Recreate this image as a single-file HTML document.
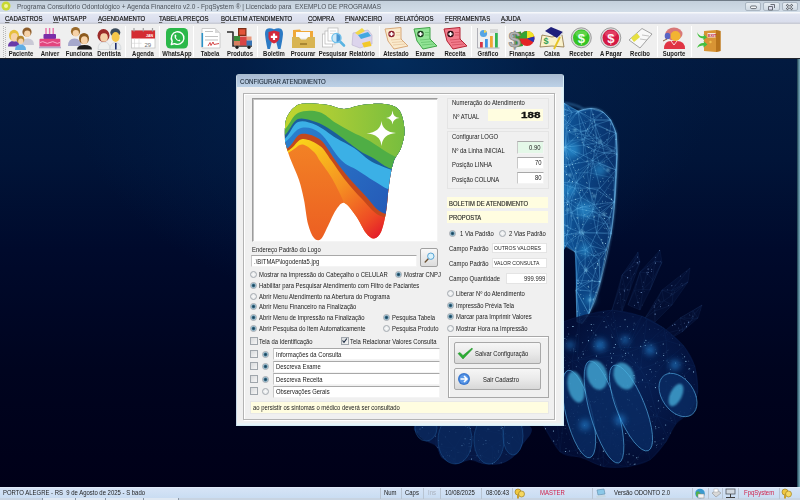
<!DOCTYPE html>
<html><head><meta charset="utf-8">
<style>
*{box-sizing:border-box;margin:0;padding:0}
html,body{width:800px;height:500px;overflow:hidden}
body{position:relative;font-family:"Liberation Sans",sans-serif;background:radial-gradient(ellipse 330px 250px at 390px 60px,rgba(3,44,92,1) 0%,rgba(2,32,74,.65) 45%,rgba(2,20,56,0) 100%),linear-gradient(180deg,#021a40 59px,#011438 160px,#000a2c 250px,#00041f 370px,#000018 490px)}
.a{position:absolute}
.t{position:absolute;white-space:pre;transform-origin:0 0;line-height:1}
/* title */
#title{left:0;top:0;width:800px;height:12px;background:linear-gradient(#c4d0dc,#d2dde8);border-top:1px solid #6f7a86}
#menu{left:0;top:12px;width:800px;height:12px;background:linear-gradient(#f6f8fb 0,#f6f8fb 1px,#e2e6f2 2px,#d9ddec 10px,#c9ccd6 11px)}
#tool{left:0;top:24px;width:800px;height:35px;background:#efefef;border-bottom:1px solid #20242c}
.mn{font-size:7.6px;color:#141414;transform:scaleX(.795);top:14.6px;-webkit-text-stroke:.2px #141414}
.mn u{text-decoration:underline;text-underline-offset:1px;text-decoration-thickness:.5px;text-decoration-color:#666}
.lb{font-size:6.6px;font-weight:bold;color:#1a1a1a;top:50.8px;transform:scaleX(.9)}
.sep{position:absolute;top:26px;width:1px;height:31px;background:#c8c8c8;border-right:1px solid #fff}
/* dialog */
#dlg{left:236px;top:74px;width:328px;height:352px;background:#f0f0f0;border:1px solid #a8bccc;border-left-color:#c8d8e6;border-right-color:#d4ecf6;border-bottom-color:#d4ecf6;border-radius:3px 3px 0 0;box-shadow:inset -2px -2px 0 #e8f4f8}
#dlgt{background:linear-gradient(#aabcd3,#bcd1e6)}
.d{font-size:7px;color:#1a1a1a;transform:scaleX(.84)}
.fld{position:absolute;background:#fff;border-top:1px solid #a8a8a8;border-left:1px solid #c8c8c8;border-bottom:1px solid #f4f4f4;border-right:1px solid #f4f4f4}
.yel{background:#fffde0}
.rad{position:absolute;width:7px;height:7px;margin:.5px;border-radius:50%;border:1px solid #a4aab0;background:radial-gradient(#fafafa,#dfe3e6)}
.rad.on{background:radial-gradient(circle,#1a4058 0,#2c5e78 1.2px,#a8cadc 2.3px,#e4eef4 3.5px)}
.chk{position:absolute;width:8px;height:8px;margin:-.5px;border:1px solid #a0a6ac;background:linear-gradient(135deg,#d8dadc,#f6f6f6)}
/* status */
#stat{left:0;top:487px;width:800px;height:13px;background:linear-gradient(#eef4fc 0,#d6e4f6 1px,#c8dcf2 12px)}
.st{font-size:7px;color:#1c1c1c;top:489.4px;transform:scaleX(.85)}
.ss{position:absolute;top:488px;width:1px;height:11px;background:#b8c4d2}
</style></head><body>

<!-- background glow -->
<svg class="a" style="left:0;top:59px" width="800" height="428" viewBox="0 59 800 428">
<defs><linearGradient id="tg" gradientUnits="userSpaceOnUse" x1="560" y1="0" x2="620" y2="0"><stop offset="0" stop-color="#1262aa"/><stop offset=".45" stop-color="#0c4688"/><stop offset="1" stop-color="#09306a"/></linearGradient><radialGradient id="hg" gradientUnits="userSpaceOnUse" cx="630" cy="380" r="80"><stop offset="0" stop-color="#082660"/><stop offset=".7" stop-color="#051848"/><stop offset="1" stop-color="#030f38"/></radialGradient><filter id="gl" x="-50%" y="-50%" width="200%" height="200%"><feGaussianBlur stdDeviation="3"/></filter><filter id="gl2" x="-50%" y="-50%" width="200%" height="200%"><feGaussianBlur stdDeviation="1.2"/></filter></defs>
<path d="M470 100 L520 96 L564 103 L578 111 L591 108.4 L603 112 L611 120 L616 133 L617 154 L616 170 L614.4 202 L611.2 234 L606.4 250 L600 282 L589 314 L582 323.5 L577 322 L576 290 L575 252 L566 246 L540 300 L480 330 L430 250 L440 150Z" fill="url(#tg)" opacity=".9"/><g filter="url(#gl)" fill="#38b0f0" opacity=".5"><circle cx="572" cy="150" r="8"/><circle cx="585" cy="210" r="9"/><circle cx="600" cy="170" r="6"/><circle cx="590" cy="300" r="5"/><circle cx="585" cy="250" r="6"/><circle cx="570" cy="190" r="6"/></g><path d="M565.0 147.2L560.6 164.3M538.9 120.4L562.1 116.6M585.2 249.9L590.4 245.8M538.9 120.4L526.5 133.4M570.7 228.7L555.1 218.4M499.4 158.1L499.7 158.4M534.9 251.3L521.1 250.5M585.2 249.9L585.1 270.7M480.6 185.4L485.1 171.9M485.8 269.6L469.8 264.5M503.2 216.9L511.5 227.6M461.6 215.9L461.4 240.2M507.7 294.3L511.2 311.9M430.0 250.0L440.0 150.0M486.5 123.8L470.9 132.4M505.8 158.0L499.4 158.1M555.1 218.4L568.0 201.6M555.1 218.4L542.2 209.5M434.0 251.2L430.0 250.0M478.9 229.7L501.7 215.3M520.1 176.2L504.4 175.9M562.0 108.1L562.1 116.6M482.4 303.5L480.0 330.0M592.9 160.4L568.9 164.8M439.9 233.7L430.0 250.0M474.3 252.6L468.9 263.1M592.2 280.3L576.0 290.0M535.3 270.1L549.0 267.7M578.0 111.0L591.0 108.4M555.2 239.9L549.4 252.5M440.1 182.4L439.1 189.4M505.8 158.0L504.4 175.9M493.5 148.7L499.4 158.1M489.4 240.8L496.0 248.6M469.7 223.0L468.4 221.1M527.7 115.7L520.0 96.0M491.1 127.8L499.3 141.0M453.6 193.1L465.6 213.4M574.8 188.1L581.6 197.6M485.1 171.9L485.3 176.5M465.1 130.7L470.0 100.0M599.0 260.0L600.0 282.0M568.0 201.6L542.2 209.5M519.6 133.4L507.8 153.6M485.8 169.5L457.5 161.5M567.0 243.0L566.0 246.0M507.7 294.3L513.0 300.2M554.6 171.8L550.3 187.5M535.3 270.1L521.1 250.5M579.8 232.2L575.0 252.0M554.6 171.8L525.7 174.7M602.2 144.2L596.9 142.9M505.8 158.0L507.8 153.6M570.7 228.7L572.0 212.0M602.2 144.2L614.9 151.3M518.1 276.9L507.6 262.9M611.2 234.0L606.4 250.0M544.6 142.0L538.9 120.4M485.8 269.6L470.0 296.9M535.1 189.5L542.2 209.5M511.2 311.9L480.0 330.0M572.2 112.3L578.0 111.0M596.7 232.9L599.1 214.4M585.2 249.9L593.9 256.0M502.7 185.0L480.6 185.4M485.8 169.5L495.2 177.4M585.1 270.7L599.0 260.0M556.7 243.0L567.0 243.0M540.3 252.7L538.0 259.2M585.1 270.7L592.2 280.3M468.7 243.4L475.3 247.0M565.0 147.2L583.4 145.1M496.0 248.6L505.0 239.6M501.7 215.3L494.8 234.4M493.5 148.7L507.8 153.6M485.8 169.5L499.7 158.4M492.2 142.1L479.8 142.4M549.4 252.5L566.0 246.0M492.2 142.1L491.1 127.8M470.0 296.9L468.4 269.5M495.2 177.4L499.7 158.4M535.1 189.5L550.3 187.5M616.0 170.0L614.4 202.0M491.1 127.8L486.5 123.8M465.1 130.7L486.5 123.8M579.8 232.2L590.4 245.8M556.7 243.0L566.6 234.6M614.4 202.0L611.2 234.0M567.0 243.0L575.0 252.0M534.9 251.3L532.3 227.6M583.4 145.1L584.7 137.9M530.5 302.2L540.0 300.0M577.0 208.4L592.3 211.4M581.6 197.6L568.0 201.6M483.1 247.8L492.3 266.1M594.2 204.6L600.3 212.7M469.7 223.0L461.4 240.2M562.0 108.1L564.0 103.0M594.2 204.6L592.3 211.4M503.2 216.9L494.8 234.4M519.7 130.2L526.5 133.4M535.1 189.5L554.6 171.8M461.4 240.2L455.2 242.2M465.1 130.7L453.0 152.8M463.7 270.8L456.1 282.0M597.2 189.9L594.2 204.6M549.0 267.7L566.0 246.0M595.2 124.8L586.0 130.6M505.0 239.6L494.8 234.4M521.1 250.5L538.0 259.2M505.7 251.7L509.5 244.3M469.8 264.5L468.9 263.1M566.6 234.6L555.0 220.1M518.1 276.9L522.6 279.4M588.9 188.2L597.2 189.9M511.5 227.6L494.8 234.4M485.8 169.5L499.4 158.1M561.6 168.1L554.6 171.8M544.6 142.0L533.7 142.4M604.3 153.1L617.0 154.0M478.9 229.7L469.7 223.0M433.7 219.5L439.1 189.4M489.4 240.8L494.8 234.4M485.8 269.6L482.4 303.5M596.9 142.9L583.4 145.1M535.1 189.5L522.2 201.5M583.4 145.1L580.8 131.9M496.7 264.2L492.3 266.1M440.1 182.4L453.6 193.1M549.4 252.5L543.1 267.1M518.1 276.9L507.7 294.3M493.5 148.7L479.8 142.4M485.8 169.5L485.1 171.9M600.3 212.7L592.3 211.4M589.1 135.5L595.2 124.8M533.7 142.4L532.0 149.7M535.1 189.5L520.1 176.2M495.2 177.4L485.1 171.9M507.8 153.6L499.3 141.0M510.5 233.3L505.0 239.6M567.4 122.6L562.1 116.6M468.7 243.4L470.0 223.5M468.4 269.5L462.5 275.7M519.9 221.5L522.2 201.5M522.2 294.8L513.0 300.2M557.1 182.2L561.6 168.1M555.1 218.4L555.0 220.1M447.6 197.4L465.6 213.4M557.1 182.2L568.0 201.6M583.4 145.1L594.7 150.1M565.0 147.2L553.3 133.8M474.3 252.6L471.6 248.3M609.4 217.7L611.2 234.0M500.0 117.3L519.7 130.2M580.1 320.3L576.0 290.0M579.8 232.2L596.7 232.9M511.5 227.6L522.1 230.3M535.1 189.5L512.7 187.2M555.2 239.9L556.7 243.0M453.7 165.4L480.6 185.4M457.5 161.5L486.8 156.5M480.9 233.5L475.3 247.0M435.1 221.6L430.0 250.0M557.1 182.2L550.3 187.5M491.7 204.0L507.9 205.9M505.0 239.6L509.5 244.3M597.2 189.9L614.4 202.0M567.4 122.6L578.0 111.0M549.4 252.5L556.7 243.0M503.2 216.9L501.7 215.3M518.1 276.9L535.3 270.1M580.8 131.9L578.0 111.0M577.0 208.4L594.2 204.6M519.9 117.8L520.0 96.0M594.3 119.9L591.0 108.4M603.0 112.0L611.0 120.0M433.7 219.5L435.1 221.6M457.5 161.5L453.0 152.8M583.4 155.4L583.4 145.1M542.2 209.5L544.0 227.3M439.1 189.4L440.0 150.0M557.1 182.2L554.6 171.8M440.1 182.4L440.0 150.0M505.7 251.7L496.7 264.2M561.6 168.1L576.2 182.8M588.9 188.2L592.9 160.4M512.7 187.2L522.2 201.5M510.1 273.5L507.6 262.9M455.2 242.2L468.9 263.1M562.1 116.6L572.2 112.3M606.4 250.0L600.0 282.0M522.6 125.3L538.9 120.4M567.4 122.6L565.0 147.2M580.1 320.3L577.0 322.0M591.0 108.4L603.0 112.0M468.7 243.4L455.2 242.2M480.9 233.5L494.8 234.4M485.8 269.6L499.5 275.1M461.4 240.2L444.0 235.4M496.7 264.2L507.6 262.9M544.6 142.0L532.0 149.7M480.6 185.4L491.7 204.0M579.8 232.2L592.3 211.4M505.7 251.7L521.1 250.5M468.7 243.4L471.6 248.3M446.0 151.4L445.9 141.3M556.7 243.0L566.0 246.0M605.3 222.0L599.1 214.4M577.0 208.4L581.6 197.6M560.6 164.3L561.6 168.1M492.2 142.1L493.5 148.7M510.5 233.3L511.5 227.6M602.2 144.2L594.7 150.1M453.7 165.4L453.6 193.1M555.2 239.9L544.0 227.3M447.6 197.4L461.6 215.9M594.3 119.9L578.0 111.0M507.9 205.9L522.2 201.5M557.1 182.2L574.8 188.1M499.5 275.1L492.3 266.1M457.5 161.5L485.1 171.9M577.2 280.8L575.0 252.0M565.0 147.2L544.6 142.0M465.6 213.4L468.4 221.1M439.9 233.7L434.0 251.2M479.8 142.4L491.1 127.8M478.9 229.7L480.9 233.5M561.6 168.1L568.9 164.8M565.0 147.2L583.4 155.4M468.4 269.5L469.8 264.5M560.2 164.5L560.6 164.3M518.1 276.9L510.1 273.5M480.6 185.4L485.3 176.5M534.9 251.3L538.0 259.2M579.8 232.2L566.6 234.6M589.1 135.5L596.9 142.9M501.7 215.3L491.7 204.0M549.4 252.5L549.0 267.7M519.9 221.5L542.2 209.5M570.7 228.7L555.0 220.1M499.5 275.1L496.7 264.2M447.6 197.4L433.7 219.5M580.1 320.3L582.0 323.5M496.0 248.6L494.8 234.4M519.9 221.5L507.9 205.9M596.7 232.9L590.4 245.8M535.1 189.5L525.7 174.7M525.7 174.7L532.0 149.7M492.2 142.1L499.3 141.0M439.9 233.7L435.1 221.6M485.8 269.6L468.4 269.5M574.8 188.1L568.0 201.6M468.7 243.4L461.4 240.2M470.0 223.5L461.4 240.2M599.0 260.0L606.4 250.0M461.4 240.2L468.4 221.1M470.0 296.9L456.1 282.0M593.9 256.0L590.4 245.8M617.0 154.0L614.4 202.0M600.1 188.0L597.2 189.9M522.6 279.4L540.0 300.0M512.7 187.2L504.4 175.9M507.7 294.3L482.4 303.5M557.1 182.2L576.2 182.8M592.9 160.4L616.0 170.0M589.0 314.0L576.0 290.0M533.7 142.4L526.5 133.4M522.6 125.3L519.9 117.8M544.0 227.3L555.0 220.1M483.1 247.8L480.9 233.5M471.6 248.3L475.3 247.0M565.0 147.2L568.9 164.8M588.9 188.2L594.2 204.6M470.0 296.9L462.5 275.7M519.6 133.4L533.7 142.4M577.2 280.8L576.0 290.0M500.0 117.3L491.1 127.8M572.2 112.3L564.0 103.0M465.1 130.7L470.9 132.4M478.9 229.7L491.7 204.0M562.0 108.1L538.9 120.4M455.2 242.2L434.0 251.2M542.2 209.5L522.2 201.5M575.0 252.0L566.0 246.0M463.7 270.8L468.9 263.1M510.1 273.5L507.7 294.3M596.7 232.9L606.4 250.0M470.0 100.0L520.0 96.0M519.6 133.4L499.3 141.0M580.8 131.9L584.7 137.9M584.7 137.9L586.0 130.6M538.9 120.4L520.0 96.0M535.3 270.1L538.0 259.2M585.1 270.7L575.0 252.0M593.9 256.0L606.4 250.0M471.6 248.3L468.9 263.1M594.3 119.9L595.2 124.8M463.7 270.8L468.4 269.5M532.3 227.6L522.1 230.3M521.1 250.5L522.1 230.3M560.2 164.5L532.0 149.7M469.7 223.0L491.7 204.0M600.3 212.7L614.4 202.0M567.4 122.6L553.3 133.8M446.0 151.4L453.0 152.8M525.7 174.7L507.8 153.6M616.0 133.0L617.0 154.0M483.1 247.8L485.8 269.6M470.0 223.5L469.7 223.0M592.9 160.4L594.7 150.1M530.5 302.2L511.2 311.9M513.0 300.2L511.2 311.9M512.7 187.2L507.9 205.9M510.1 273.5L499.5 275.1M605.3 222.0L609.4 217.7M461.6 215.9L435.1 221.6M588.9 188.2L581.6 197.6M521.1 250.5L509.5 244.3M604.3 153.1L614.9 151.3M562.0 108.1L520.0 96.0M600.1 188.0L614.4 202.0M493.5 148.7L499.3 141.0M499.5 275.1L507.6 262.9M495.2 177.4L504.4 175.9M468.7 243.4L478.9 229.7M470.0 223.5L478.9 229.7M510.5 233.3L494.8 234.4M465.6 213.4L491.7 204.0M544.6 142.0L553.3 133.8M453.6 193.1L439.1 189.4M540.3 252.7L549.4 252.5M596.9 142.9L595.2 124.8M535.3 270.1L522.6 279.4M474.3 252.6L469.8 264.5M519.9 221.5L532.3 227.6M585.2 249.9L575.0 252.0M570.7 228.7L566.6 234.6M592.2 280.3L589.0 314.0M581.1 283.7L576.0 290.0M505.8 158.0L499.7 158.4M538.0 259.2L543.1 267.1M599.0 260.0L592.2 280.3M530.5 302.2L513.0 300.2M522.6 125.3L527.7 115.7M579.8 232.2L577.0 208.4M540.3 252.7L534.9 251.3M507.7 294.3L499.5 275.1M540.3 252.7L544.0 227.3M562.0 108.1L572.2 112.3M470.0 296.9L480.0 330.0M560.2 164.5L561.6 168.1M566.6 234.6L567.0 243.0M589.1 135.5L584.7 137.9M519.9 221.5L511.5 227.6M493.5 148.7L486.8 156.5M600.1 188.0L616.0 170.0M600.3 212.7L599.1 214.4M453.6 193.1L480.6 185.4M535.3 270.1L540.0 300.0M611.0 120.0L616.0 133.0M510.5 233.3L522.1 230.3M463.7 270.8L434.0 251.2M453.7 165.4L453.0 152.8M462.5 275.7L456.1 282.0M540.3 252.7L555.2 239.9M519.6 133.4L532.0 149.7M595.2 124.8L616.0 133.0M480.0 330.0L430.0 250.0M593.9 256.0L599.0 260.0M574.8 188.1L576.2 182.8M596.9 142.9L584.7 137.9M609.4 217.7L614.4 202.0M519.7 130.2L522.6 125.3M496.0 248.6L492.3 266.1M509.5 244.3L522.1 230.3M474.3 252.6L475.3 247.0M592.2 280.3L600.0 282.0M518.1 276.9L521.1 250.5M600.0 282.0L589.0 314.0M495.2 177.4L485.3 176.5M577.0 208.4L572.0 212.0M581.6 197.6L594.2 204.6M589.1 135.5L586.0 130.6M510.5 233.3L509.5 244.3M434.0 251.2L444.0 235.4M555.2 239.9L555.0 220.1M560.6 164.3L568.9 164.8M596.7 232.9L592.3 211.4M446.0 151.4L440.0 150.0M503.2 216.9L519.9 221.5M583.4 155.4L568.9 164.8M562.1 116.6L553.3 133.8M499.7 158.4L504.4 175.9M439.9 233.7L444.0 235.4M483.1 247.8L474.3 252.6M485.8 269.6L492.3 266.1M579.8 232.2L567.0 243.0M532.3 227.6L544.0 227.3M538.9 120.4L527.7 115.7M564.0 103.0L578.0 111.0M560.2 164.5L554.6 171.8M586.0 130.6L578.0 111.0M507.8 153.6L499.4 158.1M522.2 294.8L530.5 302.2M463.7 270.8L455.2 242.2M522.2 294.8L522.6 279.4M502.7 185.0L495.2 177.4M614.9 151.3L617.0 154.0M500.0 117.3L520.0 96.0M468.7 243.4L480.9 233.5M445.9 141.3L440.0 150.0M595.2 124.8L611.0 120.0M602.2 144.2L604.3 153.1M505.7 251.7L505.0 239.6M532.3 227.6L542.2 209.5M501.7 215.3L507.9 205.9M483.1 247.8L496.0 248.6M519.7 130.2L519.9 117.8M534.9 251.3L522.1 230.3M579.8 232.2L570.7 228.7M594.2 204.6L614.4 202.0M522.2 294.8L507.7 294.3M489.4 240.8L480.9 233.5M519.7 130.2L499.3 141.0M447.6 197.4L439.1 189.4M445.9 141.3L470.0 100.0M549.0 267.7L540.0 300.0M505.7 251.7L507.6 262.9M590.4 245.8L606.4 250.0M609.4 217.7L599.1 214.4M596.9 142.9L594.7 150.1M455.2 242.2L444.0 235.4M593.9 256.0L585.1 270.7M588.9 188.2L574.8 188.1M495.2 177.4L480.6 185.4M522.2 294.8L540.0 300.0M577.0 208.4L568.0 201.6M581.1 283.7L592.2 280.3M485.8 169.5L486.8 156.5M600.3 212.7L609.4 217.7M503.2 216.9L507.9 205.9M577.2 280.8L581.1 283.7M461.6 215.9L444.0 235.4M500.0 117.3L519.9 117.8M486.8 156.5L499.4 158.1M577.2 280.8L585.1 270.7M520.1 176.2L525.7 174.7M482.4 303.5L511.2 311.9M602.2 144.2L616.0 133.0M604.3 153.1L616.0 170.0M502.7 185.0L512.7 187.2M500.0 117.3L499.3 141.0M496.7 264.2L496.0 248.6M479.8 142.4L486.8 156.5M491.7 204.0L468.4 221.1M433.7 219.5L440.0 150.0M453.7 165.4L440.0 150.0M500.0 117.3L470.0 100.0M614.9 151.3L616.0 133.0M479.8 142.4L486.5 123.8M518.1 276.9L522.2 294.8M456.1 282.0L430.0 250.0M588.9 188.2L600.1 188.0M520.0 96.0L564.0 103.0M521.1 250.5L507.6 262.9M519.9 117.8L527.7 115.7M505.8 158.0L525.7 174.7M580.1 320.3L589.0 314.0M433.7 219.5L461.6 215.9M520.1 176.2L505.8 158.0M535.3 270.1L543.1 267.1M483.1 247.8L475.3 247.0M532.0 149.7L507.8 153.6M594.3 119.9L611.0 120.0M579.8 232.2L585.2 249.9M555.2 239.9L566.6 234.6M588.9 188.2L576.2 182.8M567.4 122.6L572.2 112.3M617.0 154.0L616.0 170.0M560.2 164.5L565.0 147.2M479.8 142.4L453.0 152.8M478.9 229.7L494.8 234.4M560.2 164.5L544.6 142.0M468.4 269.5L468.9 263.1M440.1 182.4L453.7 165.4M470.0 100.0L440.0 150.0M479.8 142.4L470.9 132.4M580.8 131.9L586.0 130.6M486.5 123.8L470.0 100.0M502.7 185.0L504.4 175.9M604.3 153.1L594.7 150.1M453.7 165.4L457.5 161.5M605.3 222.0L611.2 234.0M522.6 125.3L526.5 133.4M461.6 215.9L468.4 221.1M457.5 161.5L479.8 142.4M463.7 270.8L462.5 275.7M602.2 144.2L595.2 124.8M550.3 187.5L568.0 201.6M519.9 221.5L522.1 230.3M582.0 323.5L577.0 322.0M470.0 296.9L482.4 303.5M592.9 160.4L604.3 153.1M550.3 187.5L542.2 209.5M555.1 218.4L572.0 212.0M445.9 141.3L453.0 152.8M567.4 122.6L580.8 131.9M519.6 133.4L526.5 133.4M453.0 152.8L470.9 132.4M583.4 155.4L594.7 150.1M500.0 117.3L486.5 123.8M596.7 232.9L611.2 234.0M577.0 322.0L576.0 290.0M455.2 242.2L471.6 248.3M483.1 247.8L489.4 240.8M433.7 219.5L430.0 250.0M505.7 251.7L496.0 248.6M549.4 252.5L538.0 259.2M579.8 232.2L572.0 212.0M446.0 151.4L453.7 165.4M456.1 282.0L480.0 330.0M581.1 283.7L585.1 270.7M461.6 215.9L465.6 213.4M554.6 171.8L532.0 149.7M499.5 275.1L482.4 303.5M434.0 251.2L456.1 282.0M594.3 119.9L603.0 112.0M435.1 221.6L444.0 235.4M445.9 141.3L465.1 130.7M592.9 160.4L600.1 188.0M485.8 269.6L474.3 252.6M480.6 185.4L465.6 213.4M538.9 120.4L553.3 133.8M502.7 185.0L491.7 204.0M533.7 142.4L538.9 120.4M568.0 201.6L572.0 212.0M592.9 160.4L576.2 182.8M565.0 147.2L580.8 131.9M534.9 251.3L544.0 227.3M502.7 185.0L507.9 205.9M592.3 211.4L599.1 214.4M589.0 314.0L582.0 323.5M520.1 176.2L512.7 187.2M457.5 161.5L480.6 185.4M594.3 119.9L586.0 130.6M519.6 133.4L519.7 130.2M596.7 232.9L605.3 222.0M447.6 197.4L453.6 193.1M555.1 218.4L544.0 227.3M592.9 160.4L583.4 155.4M549.0 267.7L543.1 267.1M568.9 164.8L576.2 182.8" stroke="#7ad0ff" stroke-width=".5" opacity="0.5" fill="none"/><g fill="#b8f0ff"><circle cx="468.7" cy="106.7" r="0.25" opacity="0.41"/><circle cx="590.5" cy="175.2" r="0.33" opacity="0.55"/><circle cx="479.4" cy="269.4" r="0.43" opacity="0.72"/><circle cx="501.8" cy="214.5" r="0.32" opacity="0.54"/><circle cx="537.2" cy="234.9" r="0.39" opacity="0.65"/><circle cx="439.6" cy="184.9" r="0.19" opacity="0.32"/><circle cx="500.1" cy="283.9" r="0.42" opacity="0.71"/><circle cx="536.1" cy="116.2" r="0.47" opacity="0.79"/><circle cx="544.5" cy="166.8" r="0.46" opacity="0.77"/><circle cx="454.7" cy="213.4" r="0.44" opacity="0.73"/><circle cx="540.2" cy="104.6" r="0.28" opacity="0.46"/><circle cx="562.1" cy="177.5" r="0.25" opacity="0.42"/><circle cx="561.0" cy="161.7" r="0.41" opacity="0.69"/><circle cx="452.3" cy="212.7" r="0.27" opacity="0.46"/><circle cx="593.8" cy="298.6" r="0.45" opacity="0.76"/><circle cx="500.2" cy="282.5" r="0.53" opacity="0.89"/><circle cx="499.1" cy="218.9" r="0.24" opacity="0.40"/><circle cx="450.3" cy="264.5" r="0.20" opacity="0.34"/><circle cx="542.5" cy="122.6" r="0.42" opacity="0.70"/><circle cx="502.9" cy="187.1" r="0.32" opacity="0.54"/><circle cx="451.6" cy="172.0" r="0.20" opacity="0.33"/><circle cx="473.9" cy="267.7" r="0.52" opacity="0.86"/><circle cx="505.2" cy="300.2" r="0.36" opacity="0.60"/><circle cx="495.4" cy="279.1" r="0.49" opacity="0.82"/><circle cx="457.3" cy="217.0" r="0.23" opacity="0.39"/><circle cx="463.7" cy="220.2" r="0.27" opacity="0.45"/><circle cx="580.5" cy="181.5" r="0.25" opacity="0.41"/><circle cx="547.7" cy="157.3" r="0.20" opacity="0.34"/><circle cx="454.6" cy="208.5" r="0.18" opacity="0.30"/><circle cx="577.6" cy="113.6" r="0.19" opacity="0.32"/><circle cx="610.6" cy="216.9" r="0.51" opacity="0.86"/><circle cx="597.8" cy="267.8" r="0.19" opacity="0.32"/><circle cx="550.4" cy="111.2" r="0.18" opacity="0.31"/><circle cx="587.9" cy="167.8" r="0.45" opacity="0.75"/><circle cx="529.1" cy="279.5" r="0.41" opacity="0.68"/><circle cx="611.9" cy="207.1" r="0.49" opacity="0.81"/><circle cx="583.7" cy="233.3" r="0.36" opacity="0.60"/><circle cx="510.4" cy="247.2" r="0.25" opacity="0.42"/><circle cx="512.1" cy="247.4" r="0.29" opacity="0.48"/><circle cx="470.5" cy="120.9" r="0.47" opacity="0.78"/><circle cx="593.8" cy="291.2" r="0.43" opacity="0.72"/><circle cx="543.1" cy="109.6" r="0.50" opacity="0.83"/><circle cx="518.6" cy="256.7" r="0.22" opacity="0.37"/><circle cx="569.5" cy="130.4" r="0.53" opacity="0.88"/><circle cx="562.9" cy="220.2" r="0.42" opacity="0.69"/><circle cx="473.0" cy="212.8" r="0.21" opacity="0.35"/><circle cx="482.3" cy="162.8" r="0.24" opacity="0.40"/><circle cx="507.8" cy="110.8" r="0.19" opacity="0.32"/><circle cx="566.0" cy="196.1" r="0.25" opacity="0.42"/><circle cx="452.7" cy="193.5" r="0.42" opacity="0.69"/><circle cx="584.5" cy="204.2" r="0.49" opacity="0.81"/><circle cx="581.7" cy="294.8" r="0.30" opacity="0.50"/><circle cx="517.3" cy="133.5" r="0.39" opacity="0.65"/><circle cx="437.9" cy="205.9" r="0.24" opacity="0.40"/><circle cx="519.3" cy="138.4" r="0.18" opacity="0.30"/><circle cx="508.9" cy="196.2" r="0.37" opacity="0.62"/><circle cx="453.3" cy="212.6" r="0.29" opacity="0.48"/><circle cx="445.2" cy="192.0" r="0.42" opacity="0.70"/><circle cx="486.6" cy="262.9" r="0.46" opacity="0.77"/><circle cx="483.0" cy="234.6" r="0.36" opacity="0.59"/><circle cx="536.2" cy="113.3" r="0.28" opacity="0.47"/><circle cx="460.1" cy="270.6" r="0.43" opacity="0.71"/><circle cx="487.0" cy="301.0" r="0.23" opacity="0.38"/><circle cx="525.1" cy="127.9" r="0.40" opacity="0.66"/><circle cx="490.3" cy="119.8" r="0.23" opacity="0.39"/><circle cx="585.0" cy="308.1" r="0.25" opacity="0.41"/><circle cx="491.6" cy="108.0" r="0.23" opacity="0.39"/><circle cx="511.6" cy="144.1" r="0.25" opacity="0.41"/><circle cx="481.0" cy="301.4" r="0.19" opacity="0.32"/><circle cx="602.5" cy="201.1" r="0.45" opacity="0.74"/><circle cx="463.9" cy="155.7" r="0.36" opacity="0.60"/><circle cx="524.9" cy="173.5" r="0.29" opacity="0.48"/><circle cx="446.7" cy="213.5" r="0.48" opacity="0.80"/><circle cx="592.1" cy="193.0" r="0.53" opacity="0.89"/><circle cx="610.8" cy="170.8" r="0.22" opacity="0.37"/><circle cx="586.3" cy="316.1" r="0.41" opacity="0.69"/><circle cx="610.3" cy="207.7" r="0.37" opacity="0.61"/><circle cx="443.9" cy="182.6" r="0.51" opacity="0.85"/><circle cx="436.2" cy="212.0" r="0.40" opacity="0.66"/><circle cx="529.6" cy="301.7" r="0.43" opacity="0.71"/><circle cx="549.1" cy="237.0" r="0.36" opacity="0.60"/><circle cx="550.4" cy="145.6" r="0.33" opacity="0.55"/><circle cx="551.1" cy="236.3" r="0.27" opacity="0.45"/><circle cx="480.0" cy="128.9" r="0.42" opacity="0.70"/><circle cx="564.6" cy="126.9" r="0.28" opacity="0.46"/><circle cx="457.8" cy="239.2" r="0.29" opacity="0.48"/><circle cx="592.7" cy="158.3" r="0.41" opacity="0.69"/><circle cx="491.0" cy="269.3" r="0.30" opacity="0.51"/><circle cx="553.0" cy="123.5" r="0.41" opacity="0.69"/><circle cx="502.0" cy="317.4" r="0.21" opacity="0.34"/><circle cx="497.4" cy="275.6" r="0.32" opacity="0.54"/><circle cx="516.5" cy="174.2" r="0.22" opacity="0.36"/><circle cx="489.9" cy="301.1" r="0.46" opacity="0.76"/><circle cx="487.9" cy="252.4" r="0.47" opacity="0.78"/><circle cx="482.3" cy="278.2" r="0.41" opacity="0.68"/><circle cx="593.1" cy="114.3" r="0.52" opacity="0.86"/><circle cx="593.8" cy="151.8" r="0.44" opacity="0.73"/><circle cx="507.5" cy="269.3" r="0.47" opacity="0.78"/><circle cx="515.3" cy="155.3" r="0.41" opacity="0.69"/><circle cx="465.6" cy="241.8" r="0.45" opacity="0.76"/><circle cx="610.2" cy="189.5" r="0.28" opacity="0.47"/><circle cx="538.0" cy="248.4" r="0.51" opacity="0.85"/><circle cx="539.5" cy="198.6" r="0.29" opacity="0.48"/><circle cx="565.6" cy="245.2" r="0.21" opacity="0.34"/><circle cx="486.0" cy="135.1" r="0.36" opacity="0.60"/><circle cx="501.3" cy="133.2" r="0.37" opacity="0.62"/><circle cx="553.3" cy="175.8" r="0.48" opacity="0.80"/><circle cx="562.3" cy="227.8" r="0.45" opacity="0.75"/><circle cx="604.8" cy="215.6" r="0.47" opacity="0.79"/><circle cx="551.2" cy="216.3" r="0.36" opacity="0.60"/><circle cx="615.5" cy="176.9" r="0.33" opacity="0.55"/><circle cx="518.7" cy="245.7" r="0.20" opacity="0.34"/><circle cx="551.9" cy="105.0" r="0.32" opacity="0.53"/><circle cx="512.7" cy="228.4" r="0.39" opacity="0.64"/><circle cx="542.9" cy="101.7" r="0.30" opacity="0.50"/><circle cx="568.0" cy="193.6" r="0.48" opacity="0.80"/><circle cx="531.6" cy="229.2" r="0.42" opacity="0.71"/><circle cx="614.7" cy="131.1" r="0.35" opacity="0.58"/><circle cx="594.9" cy="206.9" r="0.27" opacity="0.45"/><circle cx="484.6" cy="194.7" r="0.29" opacity="0.48"/><circle cx="518.0" cy="192.7" r="0.21" opacity="0.35"/><circle cx="535.2" cy="118.1" r="0.51" opacity="0.85"/><circle cx="497.8" cy="185.3" r="0.27" opacity="0.45"/><circle cx="603.7" cy="257.9" r="0.29" opacity="0.48"/><circle cx="499.1" cy="194.9" r="0.32" opacity="0.53"/><circle cx="588.8" cy="147.3" r="0.53" opacity="0.89"/><circle cx="593.8" cy="265.1" r="0.22" opacity="0.36"/><circle cx="513.6" cy="273.2" r="0.38" opacity="0.63"/><circle cx="506.7" cy="147.6" r="0.31" opacity="0.51"/><circle cx="449.4" cy="180.5" r="0.19" opacity="0.31"/><circle cx="493.4" cy="166.4" r="0.35" opacity="0.58"/><circle cx="493.4" cy="303.6" r="0.25" opacity="0.41"/><circle cx="613.8" cy="174.3" r="0.21" opacity="0.35"/><circle cx="585.9" cy="133.1" r="0.45" opacity="0.75"/><circle cx="594.6" cy="146.9" r="0.29" opacity="0.49"/><circle cx="535.5" cy="299.4" r="0.49" opacity="0.81"/><circle cx="521.0" cy="228.6" r="0.47" opacity="0.78"/><circle cx="591.5" cy="150.7" r="0.41" opacity="0.68"/><circle cx="471.7" cy="120.5" r="0.35" opacity="0.59"/><circle cx="567.9" cy="230.8" r="0.51" opacity="0.84"/><circle cx="521.7" cy="201.1" r="0.23" opacity="0.38"/><circle cx="445.9" cy="237.2" r="0.36" opacity="0.59"/><circle cx="553.3" cy="238.9" r="0.31" opacity="0.52"/><circle cx="453.5" cy="256.5" r="0.20" opacity="0.33"/><circle cx="493.1" cy="102.4" r="0.29" opacity="0.48"/><circle cx="476.6" cy="240.9" r="0.43" opacity="0.71"/><circle cx="562.4" cy="192.1" r="0.45" opacity="0.75"/><circle cx="553.5" cy="221.0" r="0.46" opacity="0.77"/><circle cx="611.7" cy="208.5" r="0.53" opacity="0.88"/><circle cx="546.6" cy="186.5" r="0.35" opacity="0.59"/><circle cx="552.5" cy="169.8" r="0.51" opacity="0.85"/><circle cx="502.2" cy="242.2" r="0.49" opacity="0.82"/><circle cx="585.1" cy="253.6" r="0.44" opacity="0.73"/><circle cx="571.5" cy="233.4" r="0.34" opacity="0.56"/><circle cx="598.0" cy="133.5" r="0.23" opacity="0.38"/><circle cx="488.5" cy="150.9" r="0.53" opacity="0.88"/><circle cx="529.2" cy="303.0" r="0.38" opacity="0.63"/><circle cx="470.6" cy="300.7" r="0.50" opacity="0.83"/><circle cx="453.1" cy="275.4" r="0.38" opacity="0.64"/><circle cx="463.5" cy="174.9" r="0.44" opacity="0.74"/><circle cx="465.0" cy="238.1" r="0.37" opacity="0.62"/><circle cx="529.2" cy="138.6" r="0.48" opacity="0.80"/><circle cx="531.1" cy="257.3" r="0.41" opacity="0.68"/><circle cx="489.9" cy="268.4" r="0.32" opacity="0.54"/><circle cx="602.5" cy="203.2" r="0.25" opacity="0.42"/><circle cx="516.9" cy="188.2" r="0.52" opacity="0.87"/><circle cx="487.6" cy="304.2" r="0.19" opacity="0.32"/><circle cx="455.1" cy="164.9" r="0.45" opacity="0.74"/><circle cx="542.6" cy="193.4" r="0.33" opacity="0.55"/><circle cx="587.3" cy="146.8" r="0.46" opacity="0.77"/><circle cx="499.8" cy="258.1" r="0.47" opacity="0.79"/><circle cx="510.3" cy="141.6" r="0.27" opacity="0.44"/><circle cx="476.1" cy="118.4" r="0.33" opacity="0.56"/><circle cx="550.5" cy="186.6" r="0.52" opacity="0.87"/><circle cx="578.4" cy="169.3" r="0.45" opacity="0.75"/><circle cx="442.7" cy="170.2" r="0.44" opacity="0.74"/><circle cx="541.4" cy="294.1" r="0.38" opacity="0.64"/><circle cx="475.9" cy="116.2" r="0.36" opacity="0.60"/><circle cx="580.8" cy="290.7" r="0.40" opacity="0.67"/><circle cx="463.7" cy="113.5" r="0.20" opacity="0.33"/><circle cx="480.5" cy="220.9" r="0.23" opacity="0.39"/><circle cx="545.9" cy="169.6" r="0.46" opacity="0.77"/><circle cx="529.2" cy="275.6" r="0.27" opacity="0.45"/><circle cx="483.2" cy="210.5" r="0.43" opacity="0.71"/><circle cx="541.1" cy="241.3" r="0.49" opacity="0.82"/><circle cx="460.4" cy="263.9" r="0.34" opacity="0.57"/><circle cx="513.1" cy="179.7" r="0.50" opacity="0.84"/><circle cx="520.6" cy="180.2" r="0.20" opacity="0.33"/><circle cx="512.0" cy="146.8" r="0.44" opacity="0.74"/><circle cx="558.9" cy="154.7" r="0.31" opacity="0.52"/><circle cx="523.6" cy="221.6" r="0.52" opacity="0.86"/><circle cx="548.3" cy="172.3" r="0.28" opacity="0.47"/><circle cx="537.7" cy="116.0" r="0.35" opacity="0.58"/><circle cx="534.8" cy="223.5" r="0.30" opacity="0.50"/><circle cx="540.1" cy="203.0" r="0.41" opacity="0.69"/><circle cx="455.7" cy="136.3" r="0.43" opacity="0.71"/><circle cx="586.7" cy="161.2" r="0.27" opacity="0.45"/><circle cx="514.1" cy="286.9" r="0.41" opacity="0.69"/><circle cx="576.0" cy="233.7" r="0.43" opacity="0.71"/><circle cx="606.3" cy="196.7" r="0.45" opacity="0.74"/><circle cx="477.2" cy="179.8" r="0.39" opacity="0.64"/><circle cx="465.7" cy="167.6" r="0.21" opacity="0.35"/><circle cx="463.2" cy="235.3" r="0.20" opacity="0.33"/><circle cx="452.9" cy="217.0" r="0.26" opacity="0.43"/><circle cx="462.3" cy="220.7" r="0.50" opacity="0.83"/><circle cx="445.7" cy="144.7" r="0.35" opacity="0.59"/><circle cx="608.7" cy="180.9" r="0.49" opacity="0.82"/><circle cx="531.3" cy="201.8" r="0.45" opacity="0.76"/><circle cx="466.5" cy="219.3" r="0.19" opacity="0.32"/><circle cx="469.6" cy="276.9" r="0.30" opacity="0.50"/><circle cx="488.4" cy="312.2" r="0.46" opacity="0.76"/><circle cx="520.7" cy="184.4" r="0.52" opacity="0.87"/><circle cx="466.5" cy="140.7" r="0.20" opacity="0.34"/><circle cx="454.3" cy="274.6" r="0.46" opacity="0.76"/><circle cx="468.1" cy="217.8" r="0.39" opacity="0.64"/><circle cx="454.8" cy="131.0" r="0.43" opacity="0.72"/><circle cx="523.6" cy="279.8" r="0.41" opacity="0.69"/><circle cx="447.8" cy="201.7" r="0.53" opacity="0.89"/><circle cx="487.3" cy="138.9" r="0.50" opacity="0.83"/><circle cx="445.8" cy="191.4" r="0.54" opacity="0.90"/><circle cx="591.0" cy="127.0" r="0.21" opacity="0.35"/><circle cx="520.3" cy="256.3" r="0.47" opacity="0.79"/><circle cx="467.2" cy="195.7" r="0.34" opacity="0.57"/><circle cx="486.9" cy="255.2" r="0.37" opacity="0.62"/><circle cx="507.7" cy="276.5" r="0.29" opacity="0.48"/><circle cx="542.6" cy="278.9" r="0.30" opacity="0.50"/><circle cx="577.6" cy="286.4" r="0.44" opacity="0.73"/><circle cx="607.5" cy="226.7" r="0.33" opacity="0.56"/><circle cx="476.8" cy="264.8" r="0.47" opacity="0.79"/><circle cx="589.3" cy="309.8" r="0.45" opacity="0.75"/><circle cx="442.7" cy="167.6" r="0.25" opacity="0.42"/><circle cx="549.1" cy="223.8" r="0.53" opacity="0.88"/><circle cx="474.6" cy="125.4" r="0.19" opacity="0.32"/><circle cx="467.3" cy="305.2" r="0.40" opacity="0.67"/><circle cx="476.3" cy="230.8" r="0.41" opacity="0.69"/><circle cx="492.1" cy="100.5" r="0.43" opacity="0.72"/><circle cx="538.7" cy="115.0" r="0.36" opacity="0.60"/><circle cx="457.1" cy="192.8" r="0.44" opacity="0.74"/><circle cx="542.9" cy="173.4" r="0.46" opacity="0.76"/><circle cx="477.3" cy="248.4" r="0.29" opacity="0.48"/><circle cx="548.1" cy="230.5" r="0.40" opacity="0.66"/><circle cx="588.2" cy="286.2" r="0.53" opacity="0.89"/><circle cx="555.1" cy="130.7" r="0.18" opacity="0.30"/><circle cx="474.7" cy="201.9" r="0.41" opacity="0.68"/><circle cx="596.0" cy="292.2" r="0.51" opacity="0.85"/><circle cx="593.2" cy="299.8" r="0.53" opacity="0.89"/><circle cx="570.2" cy="131.9" r="0.39" opacity="0.64"/><circle cx="513.9" cy="255.4" r="0.28" opacity="0.47"/><circle cx="602.8" cy="162.3" r="0.34" opacity="0.57"/><circle cx="470.8" cy="174.1" r="0.51" opacity="0.85"/><circle cx="594.6" cy="122.7" r="0.35" opacity="0.58"/><circle cx="587.1" cy="315.7" r="0.47" opacity="0.79"/><circle cx="509.0" cy="184.2" r="0.42" opacity="0.70"/><circle cx="517.1" cy="203.2" r="0.53" opacity="0.89"/><circle cx="478.7" cy="172.7" r="0.21" opacity="0.35"/><circle cx="603.3" cy="218.1" r="0.34" opacity="0.57"/><circle cx="469.0" cy="125.3" r="0.50" opacity="0.83"/><circle cx="608.9" cy="223.1" r="0.44" opacity="0.74"/><circle cx="440.4" cy="221.5" r="0.39" opacity="0.65"/><circle cx="510.3" cy="263.5" r="0.21" opacity="0.35"/><circle cx="473.5" cy="137.4" r="0.36" opacity="0.60"/><circle cx="577.8" cy="137.5" r="0.50" opacity="0.84"/><circle cx="495.5" cy="142.5" r="0.27" opacity="0.45"/><circle cx="510.0" cy="164.0" r="0.37" opacity="0.62"/><circle cx="503.7" cy="117.7" r="0.23" opacity="0.39"/><circle cx="609.9" cy="227.9" r="0.51" opacity="0.85"/><circle cx="608.4" cy="236.9" r="0.51" opacity="0.85"/><circle cx="508.6" cy="165.5" r="0.47" opacity="0.79"/><circle cx="491.4" cy="157.9" r="0.35" opacity="0.59"/><circle cx="598.1" cy="265.1" r="0.50" opacity="0.84"/><circle cx="477.1" cy="157.4" r="0.30" opacity="0.51"/><circle cx="541.5" cy="101.7" r="0.22" opacity="0.36"/><circle cx="477.2" cy="118.6" r="0.27" opacity="0.45"/><circle cx="449.2" cy="165.5" r="0.34" opacity="0.56"/><circle cx="531.9" cy="284.2" r="0.28" opacity="0.47"/><circle cx="501.9" cy="299.1" r="0.19" opacity="0.31"/><circle cx="526.1" cy="123.7" r="0.18" opacity="0.31"/><circle cx="595.8" cy="251.8" r="0.35" opacity="0.58"/><circle cx="581.5" cy="319.7" r="0.39" opacity="0.65"/><circle cx="449.8" cy="200.7" r="0.27" opacity="0.45"/><circle cx="607.1" cy="166.9" r="0.23" opacity="0.39"/><circle cx="598.1" cy="167.1" r="0.23" opacity="0.38"/><circle cx="511.2" cy="154.7" r="0.42" opacity="0.71"/><circle cx="596.4" cy="130.3" r="0.19" opacity="0.32"/><circle cx="592.3" cy="123.7" r="0.43" opacity="0.72"/><circle cx="482.8" cy="139.4" r="0.32" opacity="0.53"/><circle cx="588.8" cy="287.3" r="0.48" opacity="0.80"/><circle cx="475.9" cy="201.7" r="0.24" opacity="0.41"/><circle cx="471.5" cy="293.3" r="0.22" opacity="0.36"/><circle cx="511.9" cy="235.9" r="0.53" opacity="0.88"/><circle cx="569.0" cy="109.0" r="0.46" opacity="0.77"/><circle cx="560.6" cy="175.5" r="0.20" opacity="0.33"/><circle cx="496.1" cy="225.5" r="0.31" opacity="0.52"/><circle cx="538.7" cy="188.9" r="0.43" opacity="0.72"/><circle cx="545.7" cy="285.7" r="0.19" opacity="0.31"/><circle cx="515.7" cy="284.8" r="0.43" opacity="0.71"/><circle cx="501.7" cy="175.9" r="0.19" opacity="0.32"/><circle cx="523.6" cy="288.0" r="0.48" opacity="0.79"/><circle cx="563.4" cy="211.8" r="0.27" opacity="0.45"/><circle cx="482.7" cy="136.4" r="0.30" opacity="0.50"/><circle cx="576.4" cy="173.4" r="0.49" opacity="0.81"/><circle cx="534.2" cy="279.5" r="0.54" opacity="0.90"/><circle cx="449.7" cy="190.9" r="0.24" opacity="0.40"/><circle cx="455.2" cy="263.5" r="0.18" opacity="0.30"/><circle cx="508.8" cy="256.7" r="0.23" opacity="0.38"/><circle cx="533.0" cy="235.3" r="0.19" opacity="0.31"/><circle cx="583.6" cy="176.5" r="0.43" opacity="0.72"/><circle cx="522.1" cy="132.3" r="0.35" opacity="0.59"/><circle cx="604.3" cy="249.1" r="0.22" opacity="0.37"/><circle cx="583.2" cy="234.7" r="0.45" opacity="0.75"/><circle cx="490.4" cy="227.8" r="0.23" opacity="0.39"/><circle cx="451.9" cy="225.4" r="0.49" opacity="0.81"/><circle cx="531.5" cy="99.9" r="0.18" opacity="0.30"/><circle cx="572.3" cy="181.3" r="0.25" opacity="0.42"/><circle cx="478.3" cy="311.8" r="0.35" opacity="0.59"/><circle cx="455.8" cy="138.3" r="0.20" opacity="0.34"/><circle cx="607.1" cy="202.8" r="0.34" opacity="0.57"/><circle cx="441.0" cy="160.5" r="0.47" opacity="0.79"/><circle cx="587.8" cy="200.9" r="0.28" opacity="0.47"/><circle cx="609.1" cy="171.5" r="0.28" opacity="0.46"/><circle cx="456.7" cy="211.0" r="0.48" opacity="0.80"/><circle cx="527.2" cy="288.4" r="0.30" opacity="0.49"/><circle cx="558.3" cy="137.2" r="0.34" opacity="0.57"/><circle cx="487.6" cy="166.3" r="0.45" opacity="0.76"/><circle cx="470.6" cy="214.1" r="0.31" opacity="0.52"/><circle cx="595.5" cy="149.7" r="0.31" opacity="0.51"/><circle cx="562.7" cy="165.1" r="0.44" opacity="0.74"/><circle cx="613.2" cy="180.7" r="0.37" opacity="0.62"/><circle cx="500.1" cy="238.6" r="0.25" opacity="0.42"/><circle cx="555.1" cy="212.6" r="0.54" opacity="0.90"/><circle cx="607.4" cy="229.5" r="0.24" opacity="0.40"/><circle cx="483.8" cy="223.0" r="0.47" opacity="0.78"/><circle cx="575.7" cy="202.6" r="0.39" opacity="0.64"/><circle cx="478.0" cy="226.3" r="0.31" opacity="0.52"/><circle cx="533.3" cy="104.5" r="0.21" opacity="0.36"/><circle cx="552.7" cy="196.2" r="0.26" opacity="0.43"/><circle cx="564.1" cy="147.5" r="0.43" opacity="0.71"/><circle cx="485.6" cy="126.0" r="0.49" opacity="0.82"/><circle cx="436.7" cy="203.0" r="0.23" opacity="0.38"/><circle cx="463.9" cy="138.6" r="0.38" opacity="0.64"/><circle cx="470.9" cy="175.7" r="0.49" opacity="0.82"/><circle cx="479.7" cy="238.9" r="0.29" opacity="0.49"/><circle cx="496.5" cy="241.1" r="0.35" opacity="0.58"/><circle cx="474.3" cy="131.8" r="0.29" opacity="0.48"/><circle cx="594.5" cy="114.6" r="0.21" opacity="0.34"/><circle cx="446.2" cy="226.1" r="0.19" opacity="0.32"/><circle cx="487.2" cy="166.9" r="0.33" opacity="0.55"/><circle cx="510.9" cy="292.4" r="0.29" opacity="0.48"/><circle cx="460.3" cy="280.0" r="0.26" opacity="0.43"/><circle cx="547.6" cy="117.0" r="0.48" opacity="0.80"/><circle cx="441.4" cy="258.6" r="0.48" opacity="0.80"/><circle cx="516.5" cy="140.2" r="0.53" opacity="0.89"/><circle cx="544.9" cy="243.9" r="0.25" opacity="0.41"/><circle cx="480.2" cy="190.2" r="0.53" opacity="0.89"/><circle cx="589.7" cy="189.1" r="0.27" opacity="0.45"/><circle cx="511.8" cy="108.6" r="0.44" opacity="0.74"/><circle cx="561.0" cy="154.0" r="0.19" opacity="0.32"/><circle cx="533.8" cy="150.6" r="0.46" opacity="0.76"/><circle cx="573.5" cy="178.8" r="0.39" opacity="0.64"/><circle cx="470.7" cy="233.6" r="0.25" opacity="0.42"/><circle cx="497.8" cy="281.3" r="0.47" opacity="0.78"/><circle cx="575.3" cy="236.5" r="0.42" opacity="0.70"/><circle cx="475.6" cy="274.0" r="0.54" opacity="0.89"/><circle cx="583.5" cy="134.3" r="0.37" opacity="0.62"/><circle cx="479.1" cy="270.8" r="0.31" opacity="0.51"/><circle cx="503.7" cy="229.3" r="0.29" opacity="0.48"/><circle cx="578.2" cy="238.7" r="0.20" opacity="0.33"/><circle cx="535.9" cy="198.6" r="0.52" opacity="0.86"/><circle cx="573.6" cy="240.9" r="0.36" opacity="0.60"/><circle cx="550.4" cy="243.4" r="0.53" opacity="0.88"/><circle cx="452.2" cy="186.1" r="0.19" opacity="0.32"/><circle cx="501.4" cy="289.2" r="0.49" opacity="0.82"/><circle cx="531.0" cy="290.5" r="0.26" opacity="0.43"/><circle cx="444.3" cy="143.9" r="0.21" opacity="0.36"/><circle cx="532.4" cy="166.5" r="0.54" opacity="0.90"/><circle cx="606.5" cy="187.1" r="0.26" opacity="0.44"/><circle cx="514.6" cy="136.7" r="0.22" opacity="0.37"/><circle cx="498.1" cy="109.5" r="0.39" opacity="0.65"/><circle cx="567.9" cy="212.7" r="0.38" opacity="0.64"/><circle cx="476.3" cy="206.1" r="0.41" opacity="0.68"/><circle cx="604.6" cy="218.2" r="0.53" opacity="0.89"/><circle cx="504.6" cy="237.6" r="0.44" opacity="0.74"/><circle cx="585.4" cy="123.4" r="0.42" opacity="0.69"/><circle cx="507.4" cy="138.2" r="0.26" opacity="0.43"/><circle cx="584.0" cy="268.6" r="0.25" opacity="0.41"/><circle cx="567.2" cy="158.4" r="0.36" opacity="0.61"/><circle cx="494.5" cy="258.3" r="0.22" opacity="0.37"/><circle cx="466.7" cy="273.7" r="0.43" opacity="0.72"/><circle cx="543.6" cy="187.7" r="0.41" opacity="0.68"/><circle cx="577.7" cy="200.8" r="0.34" opacity="0.57"/><circle cx="598.3" cy="160.5" r="0.37" opacity="0.62"/><circle cx="470.3" cy="200.5" r="0.27" opacity="0.44"/><circle cx="497.6" cy="281.0" r="0.47" opacity="0.78"/><circle cx="594.1" cy="268.6" r="0.26" opacity="0.43"/><circle cx="549.3" cy="158.2" r="0.35" opacity="0.59"/><circle cx="600.8" cy="203.8" r="0.36" opacity="0.60"/><circle cx="548.4" cy="103.4" r="0.41" opacity="0.69"/><circle cx="565.2" cy="109.9" r="0.47" opacity="0.79"/><circle cx="525.1" cy="216.5" r="0.29" opacity="0.49"/><circle cx="466.5" cy="281.3" r="0.40" opacity="0.67"/><circle cx="606.9" cy="139.6" r="0.46" opacity="0.77"/><circle cx="556.4" cy="203.8" r="0.44" opacity="0.73"/><circle cx="462.0" cy="268.6" r="0.28" opacity="0.46"/><circle cx="530.1" cy="251.7" r="0.26" opacity="0.43"/><circle cx="610.8" cy="124.1" r="0.50" opacity="0.84"/><circle cx="514.1" cy="280.7" r="0.41" opacity="0.68"/><circle cx="453.0" cy="223.6" r="0.21" opacity="0.35"/><circle cx="528.0" cy="123.4" r="0.35" opacity="0.59"/><circle cx="495.6" cy="110.8" r="0.29" opacity="0.49"/><circle cx="500.2" cy="99.4" r="0.29" opacity="0.49"/><circle cx="556.1" cy="204.5" r="0.22" opacity="0.37"/><circle cx="506.0" cy="100.5" r="0.23" opacity="0.39"/><circle cx="510.1" cy="133.3" r="0.38" opacity="0.63"/><circle cx="452.7" cy="276.9" r="0.48" opacity="0.80"/><circle cx="585.0" cy="273.5" r="0.40" opacity="0.66"/><circle cx="592.0" cy="123.7" r="0.20" opacity="0.33"/><circle cx="492.7" cy="323.6" r="0.35" opacity="0.58"/><circle cx="534.5" cy="156.9" r="0.38" opacity="0.63"/><circle cx="572.8" cy="228.6" r="0.20" opacity="0.33"/><circle cx="496.8" cy="188.8" r="0.22" opacity="0.37"/><circle cx="436.9" cy="260.6" r="0.18" opacity="0.31"/><circle cx="483.7" cy="239.0" r="0.46" opacity="0.77"/><circle cx="480.1" cy="113.4" r="0.51" opacity="0.85"/><circle cx="556.1" cy="260.2" r="0.21" opacity="0.34"/><circle cx="485.7" cy="240.0" r="0.44" opacity="0.73"/><circle cx="526.9" cy="110.3" r="0.39" opacity="0.65"/><circle cx="517.9" cy="165.0" r="0.34" opacity="0.57"/><circle cx="537.1" cy="104.9" r="0.32" opacity="0.53"/><circle cx="468.1" cy="213.5" r="0.24" opacity="0.41"/><circle cx="510.6" cy="204.5" r="0.24" opacity="0.40"/><circle cx="475.5" cy="229.9" r="0.40" opacity="0.67"/><circle cx="602.5" cy="242.9" r="0.38" opacity="0.64"/><circle cx="527.4" cy="208.9" r="0.52" opacity="0.87"/><circle cx="497.3" cy="288.5" r="0.25" opacity="0.41"/><circle cx="463.0" cy="163.8" r="0.36" opacity="0.60"/><circle cx="499.3" cy="145.4" r="0.21" opacity="0.35"/><circle cx="578.3" cy="280.5" r="0.41" opacity="0.68"/><circle cx="535.9" cy="204.1" r="0.43" opacity="0.71"/><circle cx="510.5" cy="300.8" r="0.27" opacity="0.44"/><circle cx="515.8" cy="277.6" r="0.39" opacity="0.64"/><circle cx="500.5" cy="195.3" r="0.20" opacity="0.34"/><circle cx="502.1" cy="317.2" r="0.21" opacity="0.34"/><circle cx="575.3" cy="133.9" r="0.48" opacity="0.81"/><circle cx="612.8" cy="172.3" r="0.23" opacity="0.38"/><circle cx="459.9" cy="158.0" r="0.27" opacity="0.45"/><circle cx="444.2" cy="146.5" r="0.31" opacity="0.52"/><circle cx="523.9" cy="185.8" r="0.26" opacity="0.43"/><circle cx="484.7" cy="155.6" r="0.27" opacity="0.46"/><circle cx="509.0" cy="111.7" r="0.23" opacity="0.38"/><circle cx="511.4" cy="102.2" r="0.48" opacity="0.80"/><circle cx="563.8" cy="154.3" r="0.46" opacity="0.76"/><circle cx="484.5" cy="238.6" r="0.44" opacity="0.73"/><circle cx="587.9" cy="189.5" r="0.27" opacity="0.46"/><circle cx="505.0" cy="106.2" r="0.49" opacity="0.82"/><circle cx="555.4" cy="220.6" r="0.38" opacity="0.63"/><circle cx="600.1" cy="165.6" r="0.36" opacity="0.60"/><circle cx="512.8" cy="171.2" r="0.32" opacity="0.53"/><circle cx="536.7" cy="169.1" r="0.26" opacity="0.43"/><circle cx="527.5" cy="108.1" r="0.20" opacity="0.33"/><circle cx="447.2" cy="178.7" r="0.42" opacity="0.71"/><circle cx="554.6" cy="225.5" r="0.33" opacity="0.55"/><circle cx="503.7" cy="105.8" r="0.44" opacity="0.73"/><circle cx="482.0" cy="201.7" r="0.27" opacity="0.45"/><circle cx="463.7" cy="146.3" r="0.51" opacity="0.85"/><circle cx="541.5" cy="136.6" r="0.31" opacity="0.51"/><circle cx="510.6" cy="261.4" r="0.48" opacity="0.80"/><circle cx="581.1" cy="124.2" r="0.21" opacity="0.35"/><circle cx="551.7" cy="259.7" r="0.21" opacity="0.35"/><circle cx="526.7" cy="286.4" r="0.45" opacity="0.75"/><circle cx="591.0" cy="223.4" r="0.34" opacity="0.57"/><circle cx="546.9" cy="262.6" r="0.27" opacity="0.45"/><circle cx="568.9" cy="181.2" r="0.54" opacity="0.90"/><circle cx="477.7" cy="278.3" r="0.49" opacity="0.82"/><circle cx="575.4" cy="248.1" r="0.50" opacity="0.83"/><circle cx="439.4" cy="180.6" r="0.53" opacity="0.88"/><circle cx="527.5" cy="178.5" r="0.27" opacity="0.45"/><circle cx="485.1" cy="100.0" r="0.43" opacity="0.72"/><circle cx="511.9" cy="114.8" r="0.20" opacity="0.33"/><circle cx="553.0" cy="262.9" r="0.23" opacity="0.39"/><circle cx="522.2" cy="274.3" r="0.34" opacity="0.57"/></g><path d="M565.8 147.3L568.7 141.1M567.3 234.9L567.6 192.1M590.4 120.3L603.0 112.0M566.0 128.4L564.0 103.0M566.9 110.5L568.9 107.0M565.8 147.3L583.0 139.0M606.7 144.9L597.7 138.2M582.7 233.4L606.4 250.0M582.3 206.4L571.6 200.7M608.8 232.6L606.4 250.0M606.7 144.9L616.0 133.0M566.9 110.5L566.0 128.4M580.4 173.0L575.5 172.5M603.2 146.1L606.7 144.9M607.3 224.1L608.8 232.6M599.1 163.7L613.9 178.1M588.7 131.0L566.0 128.4M567.7 131.6L565.8 147.3M597.7 138.2L590.4 120.3M599.1 255.6L606.4 250.0M567.6 192.1L571.6 200.7M579.5 263.3L575.0 252.0M590.1 291.1L576.0 290.0M577.7 318.7L589.0 314.0M582.3 206.4L576.9 181.8M576.5 279.9L600.0 282.0M580.4 173.0L576.9 181.8M583.6 215.8L599.5 216.0M568.7 141.1L583.0 139.0M616.0 148.1L616.0 133.0M570.8 213.1L582.3 206.4M576.5 279.9L590.1 291.1M565.8 147.3L564.0 246.0M611.8 150.9L617.0 154.0M591.0 108.4L603.0 112.0M577.0 289.4L576.0 290.0M567.6 192.1L576.9 181.8M567.3 234.9L571.9 241.1M567.7 131.6L566.0 128.4M577.7 318.7L577.0 322.0M603.0 112.0L611.0 120.0M564.0 103.0L564.0 246.0M579.5 263.3L600.0 282.0M588.8 164.1L583.0 139.0M607.3 224.1L614.4 202.0M610.0 131.4L611.0 120.0M582.7 233.4L575.0 252.0M576.5 279.9L576.0 290.0M586.8 135.6L588.7 131.0M570.8 213.1L583.6 215.8M611.0 120.0L616.0 133.0M593.3 209.6L614.4 202.0M599.7 147.6L611.8 150.9M567.7 131.6L586.8 135.6M567.7 131.6L568.7 141.1M606.4 250.0L600.0 282.0M599.7 147.6L603.2 146.1M582.7 233.4L599.1 255.6M593.3 209.6L582.3 206.4M616.0 133.0L617.0 154.0M588.8 164.1L587.1 172.3M590.4 120.3L591.0 108.4M610.0 131.4L590.4 120.3M567.7 131.6L583.0 139.0M590.1 291.1L589.0 314.0M608.8 232.6L611.2 234.0M617.0 154.0L616.0 170.0M578.0 111.0L591.0 108.4M583.0 139.0L597.7 138.2M575.5 172.5L576.9 181.8M566.9 110.5L578.0 111.0M567.3 234.9L564.0 246.0M600.0 282.0L589.0 314.0M599.1 163.7L617.0 154.0M590.4 120.3L611.0 120.0M571.9 241.1L564.0 246.0M588.8 164.1L596.4 154.1M616.0 170.0L614.4 202.0M575.5 172.5L567.6 192.1M599.1 163.7L611.8 150.9M611.8 150.9L603.2 146.1M589.0 314.0L582.0 323.5M614.4 202.0L611.2 234.0M590.1 291.1L577.0 289.4M599.1 255.6L600.0 282.0M588.4 255.4L575.0 252.0M577.7 318.7L582.0 323.5M599.7 147.6L583.0 139.0M613.9 178.1L587.1 172.3M580.4 173.0L587.1 172.3M593.3 209.6L587.1 172.3M568.9 107.0L564.0 103.0M565.8 147.3L564.0 103.0M611.8 150.9L606.7 144.9M616.0 148.1L617.0 154.0M588.4 255.4L579.5 263.3M582.7 233.4L567.3 234.9M583.6 215.8L582.7 233.4M588.7 131.0L597.7 138.2M588.8 164.1L580.4 173.0M611.2 234.0L606.4 250.0M613.9 178.1L614.4 202.0M588.4 255.4L599.1 255.6M588.8 164.1L575.5 172.5M570.8 213.1L571.6 200.7M583.6 215.8L603.3 223.3M565.8 147.3L575.5 172.5M599.7 147.6L597.7 138.2M571.6 200.7L576.9 181.8M567.6 192.1L564.0 246.0M599.5 216.0L603.3 223.3M582.7 233.4L588.4 255.4M582.7 233.4L603.3 223.3M608.8 232.6L603.3 223.3M576.5 279.9L577.0 289.4M590.1 291.1L600.0 282.0M588.4 255.4L600.0 282.0M607.3 224.1L611.2 234.0M599.1 163.7L588.8 164.1M566.0 128.4L578.0 111.0M575.0 252.0L564.0 246.0M599.7 147.6L596.4 154.1M566.9 110.5L564.0 103.0M583.0 139.0L596.4 154.1M582.7 233.4L608.8 232.6M599.1 163.7L587.1 172.3M588.8 164.1L565.8 147.3M610.0 131.4L606.7 144.9M576.5 279.9L579.5 263.3M570.8 213.1L567.3 234.9M582.7 233.4L571.9 241.1M570.8 213.1L567.6 192.1M571.9 241.1L575.0 252.0M582.0 323.5L577.0 322.0M587.1 172.3L576.9 181.8M617.0 154.0L614.4 202.0M565.8 147.3L567.6 192.1M570.8 213.1L582.7 233.4M589.0 314.0L576.0 290.0M599.1 163.7L596.4 154.1M611.8 150.9L596.4 154.1M599.1 163.7L616.0 170.0M616.0 148.1L611.8 150.9M590.4 120.3L566.0 128.4M577.0 322.0L576.0 290.0M599.5 216.0L607.3 224.1M593.3 209.6L613.9 178.1M565.8 147.3L566.0 128.4M577.7 318.7L576.0 290.0M593.3 209.6L576.9 181.8M583.6 215.8L593.3 209.6M586.8 135.6L583.0 139.0M613.9 178.1L616.0 170.0M583.6 215.8L582.3 206.4M599.5 216.0L614.4 202.0M616.0 148.1L606.7 144.9M590.4 120.3L578.0 111.0M610.0 131.4L597.7 138.2M599.5 216.0L593.3 209.6M610.0 131.4L616.0 133.0M568.9 107.0L578.0 111.0M588.7 131.0L590.4 120.3M603.2 146.1L597.7 138.2M586.8 135.6L597.7 138.2M607.3 224.1L603.3 223.3M567.7 131.6L588.7 131.0" stroke="#7ad0ff" stroke-width=".5" opacity="0.35" fill="none"/><g fill="#c0f4ff"><circle cx="593.4" cy="243.5" r="0.30" opacity="0.49"/><circle cx="598.1" cy="180.6" r="0.23" opacity="0.38"/><circle cx="580.7" cy="190.2" r="0.51" opacity="0.85"/><circle cx="570.1" cy="122.0" r="0.38" opacity="0.64"/><circle cx="601.1" cy="117.7" r="0.47" opacity="0.78"/><circle cx="600.2" cy="134.7" r="0.35" opacity="0.58"/><circle cx="604.3" cy="161.9" r="0.46" opacity="0.77"/><circle cx="577.2" cy="133.4" r="0.32" opacity="0.53"/><circle cx="590.4" cy="166.0" r="0.40" opacity="0.66"/><circle cx="595.9" cy="155.9" r="0.40" opacity="0.67"/><circle cx="582.9" cy="265.0" r="0.28" opacity="0.47"/><circle cx="606.3" cy="194.5" r="0.38" opacity="0.63"/><circle cx="599.7" cy="217.3" r="0.27" opacity="0.45"/><circle cx="581.2" cy="224.1" r="0.19" opacity="0.32"/><circle cx="605.5" cy="243.5" r="0.50" opacity="0.84"/><circle cx="604.0" cy="168.9" r="0.41" opacity="0.69"/><circle cx="582.0" cy="268.3" r="0.32" opacity="0.53"/><circle cx="600.6" cy="267.2" r="0.38" opacity="0.64"/><circle cx="605.5" cy="201.8" r="0.38" opacity="0.64"/><circle cx="567.3" cy="225.4" r="0.47" opacity="0.79"/><circle cx="590.3" cy="297.3" r="0.22" opacity="0.36"/><circle cx="610.4" cy="184.9" r="0.21" opacity="0.35"/><circle cx="596.8" cy="203.3" r="0.33" opacity="0.56"/><circle cx="609.2" cy="133.4" r="0.40" opacity="0.67"/><circle cx="585.9" cy="219.5" r="0.36" opacity="0.60"/><circle cx="571.1" cy="215.9" r="0.49" opacity="0.82"/><circle cx="567.6" cy="204.4" r="0.53" opacity="0.88"/><circle cx="592.4" cy="129.5" r="0.33" opacity="0.55"/><circle cx="592.7" cy="166.5" r="0.27" opacity="0.45"/><circle cx="587.1" cy="192.4" r="0.45" opacity="0.74"/><circle cx="572.4" cy="182.9" r="0.36" opacity="0.60"/><circle cx="567.8" cy="114.8" r="0.26" opacity="0.43"/><circle cx="584.5" cy="266.0" r="0.40" opacity="0.67"/><circle cx="565.5" cy="112.9" r="0.34" opacity="0.57"/><circle cx="583.4" cy="298.7" r="0.51" opacity="0.86"/><circle cx="585.6" cy="267.5" r="0.31" opacity="0.52"/><circle cx="572.1" cy="229.8" r="0.21" opacity="0.35"/><circle cx="599.2" cy="281.4" r="0.51" opacity="0.85"/><circle cx="587.7" cy="128.9" r="0.50" opacity="0.84"/><circle cx="595.5" cy="251.5" r="0.31" opacity="0.52"/><circle cx="573.7" cy="167.3" r="0.44" opacity="0.73"/><circle cx="581.2" cy="255.5" r="0.36" opacity="0.60"/><circle cx="572.8" cy="210.4" r="0.24" opacity="0.40"/><circle cx="581.6" cy="140.1" r="0.39" opacity="0.66"/><circle cx="585.1" cy="131.0" r="0.19" opacity="0.32"/><circle cx="584.7" cy="231.6" r="0.37" opacity="0.61"/><circle cx="589.3" cy="218.5" r="0.32" opacity="0.54"/><circle cx="585.2" cy="112.2" r="0.47" opacity="0.78"/><circle cx="588.7" cy="261.3" r="0.34" opacity="0.56"/><circle cx="583.3" cy="248.2" r="0.24" opacity="0.40"/><circle cx="564.6" cy="233.6" r="0.37" opacity="0.62"/><circle cx="609.9" cy="194.7" r="0.46" opacity="0.77"/><circle cx="565.0" cy="109.0" r="0.40" opacity="0.66"/><circle cx="576.0" cy="117.8" r="0.23" opacity="0.38"/><circle cx="583.9" cy="177.3" r="0.38" opacity="0.64"/><circle cx="611.0" cy="183.6" r="0.25" opacity="0.41"/><circle cx="584.4" cy="173.0" r="0.32" opacity="0.53"/><circle cx="566.7" cy="225.2" r="0.40" opacity="0.67"/><circle cx="582.8" cy="247.7" r="0.34" opacity="0.57"/><circle cx="574.5" cy="193.9" r="0.43" opacity="0.71"/><circle cx="587.2" cy="216.2" r="0.45" opacity="0.76"/><circle cx="566.6" cy="157.8" r="0.44" opacity="0.73"/><circle cx="600.2" cy="192.4" r="0.29" opacity="0.48"/><circle cx="607.9" cy="163.6" r="0.19" opacity="0.32"/><circle cx="607.0" cy="130.0" r="0.53" opacity="0.88"/><circle cx="575.3" cy="170.5" r="0.39" opacity="0.65"/><circle cx="580.3" cy="186.6" r="0.22" opacity="0.36"/><circle cx="578.9" cy="162.7" r="0.42" opacity="0.71"/><circle cx="610.8" cy="168.2" r="0.32" opacity="0.53"/><circle cx="596.5" cy="142.5" r="0.25" opacity="0.41"/><circle cx="604.2" cy="258.9" r="0.50" opacity="0.84"/><circle cx="605.3" cy="195.9" r="0.23" opacity="0.38"/><circle cx="594.5" cy="253.4" r="0.32" opacity="0.53"/><circle cx="582.2" cy="229.9" r="0.35" opacity="0.59"/><circle cx="608.9" cy="188.4" r="0.31" opacity="0.52"/><circle cx="613.1" cy="190.0" r="0.47" opacity="0.78"/><circle cx="568.9" cy="202.5" r="0.37" opacity="0.61"/><circle cx="572.1" cy="239.1" r="0.41" opacity="0.68"/><circle cx="573.9" cy="218.8" r="0.30" opacity="0.49"/><circle cx="598.1" cy="237.1" r="0.36" opacity="0.61"/><circle cx="581.2" cy="214.1" r="0.31" opacity="0.52"/><circle cx="611.2" cy="204.8" r="0.35" opacity="0.59"/><circle cx="577.7" cy="159.0" r="0.52" opacity="0.87"/><circle cx="580.6" cy="294.5" r="0.39" opacity="0.66"/><circle cx="616.0" cy="139.2" r="0.52" opacity="0.86"/><circle cx="604.9" cy="228.2" r="0.44" opacity="0.73"/><circle cx="602.3" cy="201.9" r="0.41" opacity="0.68"/><circle cx="599.9" cy="207.6" r="0.51" opacity="0.84"/><circle cx="578.0" cy="283.4" r="0.54" opacity="0.89"/><circle cx="572.4" cy="139.4" r="0.26" opacity="0.44"/><circle cx="583.2" cy="128.4" r="0.23" opacity="0.39"/><circle cx="583.1" cy="241.0" r="0.34" opacity="0.57"/><circle cx="584.3" cy="221.0" r="0.22" opacity="0.36"/><circle cx="579.1" cy="152.1" r="0.29" opacity="0.49"/><circle cx="581.2" cy="229.8" r="0.30" opacity="0.50"/><circle cx="581.3" cy="286.3" r="0.18" opacity="0.31"/><circle cx="564.3" cy="115.6" r="0.49" opacity="0.82"/><circle cx="597.6" cy="263.5" r="0.52" opacity="0.87"/><circle cx="576.9" cy="217.4" r="0.43" opacity="0.71"/><circle cx="606.3" cy="157.7" r="0.35" opacity="0.59"/><circle cx="566.4" cy="166.5" r="0.53" opacity="0.89"/><circle cx="581.6" cy="319.2" r="0.34" opacity="0.57"/><circle cx="572.4" cy="219.9" r="0.39" opacity="0.66"/><circle cx="600.7" cy="250.9" r="0.19" opacity="0.32"/><circle cx="591.1" cy="281.7" r="0.23" opacity="0.38"/><circle cx="611.5" cy="199.2" r="0.50" opacity="0.83"/><circle cx="581.0" cy="240.7" r="0.48" opacity="0.81"/><circle cx="601.7" cy="239.7" r="0.53" opacity="0.88"/><circle cx="568.7" cy="125.5" r="0.38" opacity="0.63"/><circle cx="580.4" cy="126.8" r="0.34" opacity="0.57"/><circle cx="589.5" cy="206.3" r="0.40" opacity="0.67"/><circle cx="578.5" cy="297.1" r="0.28" opacity="0.47"/><circle cx="569.7" cy="179.9" r="0.52" opacity="0.86"/><circle cx="572.4" cy="164.2" r="0.51" opacity="0.86"/><circle cx="582.4" cy="288.9" r="0.20" opacity="0.33"/><circle cx="611.1" cy="155.3" r="0.25" opacity="0.41"/><circle cx="593.3" cy="134.9" r="0.49" opacity="0.81"/><circle cx="585.0" cy="171.9" r="0.36" opacity="0.60"/><circle cx="565.8" cy="107.1" r="0.28" opacity="0.46"/><circle cx="595.6" cy="268.2" r="0.52" opacity="0.87"/><circle cx="597.7" cy="264.8" r="0.39" opacity="0.65"/><circle cx="568.3" cy="116.6" r="0.45" opacity="0.76"/><circle cx="593.8" cy="200.7" r="0.21" opacity="0.34"/><circle cx="577.8" cy="170.6" r="0.30" opacity="0.51"/><circle cx="601.5" cy="139.9" r="0.34" opacity="0.57"/><circle cx="570.1" cy="120.5" r="0.25" opacity="0.42"/><circle cx="575.7" cy="138.9" r="0.21" opacity="0.35"/><circle cx="575.1" cy="152.3" r="0.35" opacity="0.59"/><circle cx="598.3" cy="183.2" r="0.24" opacity="0.40"/><circle cx="569.0" cy="161.0" r="0.24" opacity="0.40"/><circle cx="589.5" cy="295.1" r="0.44" opacity="0.73"/><circle cx="574.8" cy="110.9" r="0.20" opacity="0.34"/><circle cx="587.1" cy="183.2" r="0.43" opacity="0.71"/><circle cx="568.4" cy="159.1" r="0.43" opacity="0.71"/><circle cx="594.1" cy="216.9" r="0.50" opacity="0.84"/><circle cx="570.0" cy="146.1" r="0.38" opacity="0.64"/><circle cx="604.2" cy="256.8" r="0.23" opacity="0.38"/><circle cx="595.9" cy="170.4" r="0.31" opacity="0.52"/><circle cx="603.9" cy="166.5" r="0.33" opacity="0.55"/><circle cx="573.3" cy="235.8" r="0.48" opacity="0.80"/><circle cx="577.8" cy="257.6" r="0.23" opacity="0.38"/><circle cx="592.4" cy="127.3" r="0.37" opacity="0.62"/><circle cx="592.7" cy="179.5" r="0.31" opacity="0.51"/><circle cx="601.7" cy="209.1" r="0.33" opacity="0.54"/><circle cx="570.0" cy="165.2" r="0.48" opacity="0.81"/><circle cx="575.6" cy="163.4" r="0.43" opacity="0.72"/><circle cx="580.2" cy="313.6" r="0.31" opacity="0.52"/><circle cx="602.7" cy="259.0" r="0.26" opacity="0.43"/><circle cx="609.9" cy="175.5" r="0.22" opacity="0.37"/><circle cx="566.7" cy="202.6" r="0.41" opacity="0.68"/><circle cx="578.4" cy="288.6" r="0.28" opacity="0.46"/><circle cx="577.9" cy="138.2" r="0.34" opacity="0.57"/><circle cx="582.6" cy="190.0" r="0.49" opacity="0.81"/><circle cx="594.7" cy="236.5" r="0.32" opacity="0.53"/><circle cx="606.8" cy="213.6" r="0.45" opacity="0.75"/><circle cx="587.1" cy="161.1" r="0.51" opacity="0.85"/><circle cx="575.7" cy="199.3" r="0.50" opacity="0.83"/><circle cx="577.0" cy="282.5" r="0.37" opacity="0.62"/><circle cx="575.6" cy="185.8" r="0.21" opacity="0.35"/><circle cx="599.7" cy="263.3" r="0.19" opacity="0.32"/><circle cx="580.0" cy="272.5" r="0.25" opacity="0.42"/><circle cx="592.5" cy="280.7" r="0.39" opacity="0.64"/><circle cx="603.6" cy="227.6" r="0.30" opacity="0.50"/><circle cx="594.9" cy="189.3" r="0.22" opacity="0.37"/><circle cx="570.5" cy="113.0" r="0.24" opacity="0.40"/><circle cx="577.0" cy="243.1" r="0.39" opacity="0.65"/><circle cx="595.3" cy="284.3" r="0.21" opacity="0.36"/><circle cx="584.6" cy="120.5" r="0.33" opacity="0.55"/><circle cx="568.2" cy="117.6" r="0.22" opacity="0.36"/><circle cx="584.7" cy="271.3" r="0.28" opacity="0.47"/><circle cx="603.3" cy="154.4" r="0.28" opacity="0.47"/><circle cx="589.0" cy="119.5" r="0.34" opacity="0.57"/><circle cx="594.9" cy="284.8" r="0.20" opacity="0.33"/><circle cx="606.4" cy="228.6" r="0.39" opacity="0.65"/><circle cx="578.7" cy="223.5" r="0.37" opacity="0.62"/><circle cx="616.5" cy="154.2" r="0.42" opacity="0.70"/><circle cx="594.6" cy="216.2" r="0.41" opacity="0.68"/><circle cx="593.2" cy="177.3" r="0.41" opacity="0.68"/><circle cx="568.4" cy="208.6" r="0.34" opacity="0.57"/><circle cx="575.3" cy="228.3" r="0.42" opacity="0.70"/><circle cx="570.6" cy="168.5" r="0.20" opacity="0.34"/><circle cx="595.6" cy="121.0" r="0.26" opacity="0.44"/><circle cx="587.7" cy="202.6" r="0.19" opacity="0.32"/><circle cx="614.2" cy="153.7" r="0.40" opacity="0.67"/><circle cx="575.8" cy="234.4" r="0.31" opacity="0.51"/><circle cx="580.9" cy="207.6" r="0.39" opacity="0.65"/><circle cx="595.7" cy="254.8" r="0.28" opacity="0.46"/><circle cx="568.9" cy="158.9" r="0.30" opacity="0.50"/><circle cx="596.2" cy="194.4" r="0.29" opacity="0.49"/><circle cx="569.2" cy="234.6" r="0.22" opacity="0.37"/><circle cx="591.4" cy="254.8" r="0.40" opacity="0.67"/><circle cx="572.5" cy="181.5" r="0.52" opacity="0.86"/><circle cx="587.1" cy="238.3" r="0.32" opacity="0.54"/><circle cx="570.6" cy="227.0" r="0.18" opacity="0.30"/><circle cx="583.8" cy="221.5" r="0.37" opacity="0.62"/><circle cx="579.8" cy="192.7" r="0.46" opacity="0.77"/><circle cx="602.7" cy="196.4" r="0.18" opacity="0.31"/><circle cx="598.3" cy="192.7" r="0.22" opacity="0.37"/><circle cx="597.4" cy="201.1" r="0.29" opacity="0.48"/><circle cx="578.3" cy="217.8" r="0.27" opacity="0.45"/><circle cx="584.8" cy="310.7" r="0.35" opacity="0.59"/><circle cx="577.4" cy="217.9" r="0.51" opacity="0.85"/><circle cx="600.0" cy="197.4" r="0.23" opacity="0.39"/><circle cx="602.8" cy="242.9" r="0.53" opacity="0.88"/><circle cx="581.0" cy="296.3" r="0.26" opacity="0.43"/><circle cx="566.5" cy="174.6" r="0.54" opacity="0.90"/><circle cx="577.2" cy="311.2" r="0.47" opacity="0.78"/><circle cx="586.7" cy="270.9" r="0.50" opacity="0.84"/><circle cx="579.9" cy="295.8" r="0.28" opacity="0.46"/><circle cx="581.4" cy="112.9" r="0.24" opacity="0.40"/><circle cx="592.9" cy="140.5" r="0.45" opacity="0.75"/><circle cx="570.8" cy="148.6" r="0.28" opacity="0.46"/><circle cx="594.9" cy="281.3" r="0.45" opacity="0.75"/><circle cx="603.3" cy="253.3" r="0.38" opacity="0.63"/><circle cx="582.2" cy="142.7" r="0.49" opacity="0.82"/><circle cx="585.7" cy="246.4" r="0.20" opacity="0.34"/><circle cx="583.1" cy="125.1" r="0.31" opacity="0.51"/><circle cx="602.9" cy="178.2" r="0.43" opacity="0.71"/><circle cx="570.5" cy="187.9" r="0.33" opacity="0.55"/><circle cx="591.0" cy="153.4" r="0.43" opacity="0.72"/><circle cx="565.6" cy="210.6" r="0.30" opacity="0.51"/><circle cx="594.4" cy="121.4" r="0.44" opacity="0.74"/><circle cx="586.1" cy="311.1" r="0.19" opacity="0.31"/><circle cx="586.1" cy="210.3" r="0.48" opacity="0.80"/><circle cx="604.1" cy="143.1" r="0.29" opacity="0.48"/><circle cx="603.0" cy="195.5" r="0.27" opacity="0.46"/><circle cx="582.8" cy="224.2" r="0.51" opacity="0.86"/><circle cx="600.4" cy="254.0" r="0.38" opacity="0.63"/><circle cx="594.9" cy="146.5" r="0.38" opacity="0.64"/><circle cx="599.7" cy="210.1" r="0.42" opacity="0.71"/><circle cx="588.3" cy="280.2" r="0.44" opacity="0.73"/><circle cx="579.1" cy="121.0" r="0.22" opacity="0.37"/><circle cx="581.2" cy="218.7" r="0.30" opacity="0.50"/><circle cx="583.8" cy="295.7" r="0.27" opacity="0.45"/><circle cx="600.6" cy="181.8" r="0.49" opacity="0.81"/><circle cx="598.3" cy="252.6" r="0.21" opacity="0.36"/><circle cx="603.8" cy="181.1" r="0.45" opacity="0.74"/><circle cx="608.8" cy="130.0" r="0.19" opacity="0.31"/><circle cx="611.7" cy="199.0" r="0.48" opacity="0.80"/><circle cx="565.2" cy="115.9" r="0.39" opacity="0.65"/><circle cx="592.0" cy="284.9" r="0.26" opacity="0.44"/><circle cx="580.0" cy="192.2" r="0.40" opacity="0.66"/><circle cx="600.6" cy="194.3" r="0.32" opacity="0.54"/><circle cx="577.6" cy="205.6" r="0.39" opacity="0.64"/><circle cx="584.8" cy="214.5" r="0.41" opacity="0.68"/><circle cx="609.1" cy="226.7" r="0.32" opacity="0.53"/><circle cx="615.0" cy="141.0" r="0.20" opacity="0.33"/><circle cx="612.1" cy="161.6" r="0.23" opacity="0.39"/><circle cx="584.4" cy="178.6" r="0.31" opacity="0.51"/><circle cx="609.1" cy="167.0" r="0.23" opacity="0.38"/><circle cx="586.7" cy="182.5" r="0.46" opacity="0.77"/><circle cx="607.2" cy="161.3" r="0.31" opacity="0.51"/><circle cx="594.6" cy="155.1" r="0.28" opacity="0.47"/><circle cx="573.9" cy="160.8" r="0.48" opacity="0.80"/><circle cx="606.1" cy="128.1" r="0.31" opacity="0.51"/><circle cx="593.7" cy="263.2" r="0.27" opacity="0.44"/><circle cx="585.6" cy="155.0" r="0.19" opacity="0.32"/><circle cx="597.4" cy="242.5" r="0.18" opacity="0.30"/><circle cx="565.5" cy="133.3" r="0.20" opacity="0.33"/><circle cx="587.1" cy="187.8" r="0.49" opacity="0.82"/></g><g filter="url(#gl2)" fill="#9ae4ff" opacity=".8"><circle cx="575" cy="130" r="1.3"/><circle cx="600" cy="142" r="1.3"/><circle cx="570" cy="175" r="1.3"/><circle cx="594" cy="196" r="1.3"/><circle cx="582" cy="232" r="1.3"/><circle cx="604" cy="214" r="1.3"/><circle cx="586" cy="270" r="1.3"/><circle cx="590" cy="300" r="1.3"/><circle cx="568" cy="210" r="1.3"/><circle cx="608" cy="170" r="1.3"/></g><path d="M564 103 C572 104 580 106 585 110 M576 114 C580 110 585 108.5 591 108.4 C603 108 611 118 616 133 C618 150 617 170 615 200 C613 230 608 250 601 280 C596 300 590 314 582 323.5" stroke="#5ab4f0" stroke-width="1" fill="none" opacity=".8" filter="url(#gl2)"/><path d="M576 114 C580 110 585 108.5 591 108.4 C603 108 611 118 616 133 C618 150 617 170 615 200 C613 230 608 250 601 280 C596 300 590 314 582 323.5" stroke="#8ad0ff" stroke-width=".6" fill="none" opacity=".7"/><path d="M576 250 L577 322" stroke="#4aa0e0" stroke-width=".7" opacity=".6"/><path d="M612 310 L622 275 L638 252 L640 262 L630 290 L622 312Z" fill="#0a2458" opacity=".25"/><path d="M619.3 289.0L612.0 310.0M633.7 262.5L622.0 275.0M631.4 278.9L625.1 289.1M638.0 252.0L640.0 262.0M625.1 289.1L622.0 312.0M629.9 268.2L640.0 262.0M612.0 310.0L622.0 312.0M637.7 257.0L640.0 262.0M633.7 262.5L640.0 262.0M619.3 289.0L622.0 312.0M640.0 262.0L630.0 290.0M631.4 278.9L622.0 275.0M625.1 289.1L619.3 289.0M630.0 290.0L622.0 312.0M631.4 278.9L629.9 268.2M631.4 278.9L630.0 290.0M625.1 289.1L622.0 275.0M629.9 268.2L633.7 262.5M625.1 289.1L630.0 290.0M612.0 310.0L622.0 275.0M619.3 289.0L622.0 275.0M637.7 257.0L633.7 262.5M637.7 257.0L638.0 252.0M633.7 262.5L638.0 252.0M631.4 278.9L640.0 262.0M629.9 268.2L622.0 275.0M622.0 275.0L638.0 252.0" stroke="#5a8ad0" stroke-width=".5" opacity="0.14" fill="none"/><g fill="#a0c8ff"><circle cx="632.9" cy="266.8" r="0.37" opacity="0.62"/><circle cx="618.2" cy="300.7" r="0.22" opacity="0.36"/><circle cx="624.1" cy="290.0" r="0.43" opacity="0.72"/><circle cx="638.1" cy="263.9" r="0.37" opacity="0.62"/><circle cx="629.1" cy="268.8" r="0.24" opacity="0.39"/><circle cx="622.5" cy="284.0" r="0.32" opacity="0.53"/><circle cx="633.7" cy="274.7" r="0.27" opacity="0.45"/><circle cx="624.8" cy="300.2" r="0.37" opacity="0.61"/><circle cx="622.9" cy="299.8" r="0.28" opacity="0.46"/><circle cx="634.8" cy="273.5" r="0.30" opacity="0.50"/><circle cx="620.1" cy="307.5" r="0.19" opacity="0.31"/><circle cx="627.8" cy="289.9" r="0.43" opacity="0.71"/><circle cx="620.9" cy="311.2" r="0.40" opacity="0.66"/><circle cx="618.6" cy="302.7" r="0.25" opacity="0.41"/><circle cx="623.0" cy="306.8" r="0.19" opacity="0.31"/><circle cx="627.6" cy="277.8" r="0.53" opacity="0.88"/><circle cx="617.2" cy="303.1" r="0.41" opacity="0.69"/><circle cx="624.5" cy="291.0" r="0.49" opacity="0.82"/><circle cx="637.3" cy="262.7" r="0.53" opacity="0.88"/><circle cx="630.1" cy="270.4" r="0.46" opacity="0.76"/><circle cx="619.2" cy="292.5" r="0.29" opacity="0.48"/><circle cx="637.4" cy="257.0" r="0.45" opacity="0.75"/><circle cx="639.3" cy="261.7" r="0.46" opacity="0.77"/><circle cx="627.1" cy="269.9" r="0.23" opacity="0.38"/><circle cx="620.3" cy="294.1" r="0.44" opacity="0.73"/></g><path d="M628 305 L640 272 L660 250 L662 262 L650 290 L640 310Z" fill="#0a2458" opacity=".25"/><path d="M654.7 261.2L652.6 279.8M654.7 261.2L640.0 272.0M646.8 273.0L640.0 272.0M634.7 290.3L643.0 289.4M660.0 250.0L662.0 262.0M643.0 289.4L646.8 273.0M643.0 289.4L640.0 310.0M661.8 262.6L654.7 261.2M634.7 290.3L640.0 310.0M661.8 262.6L662.0 262.0M628.0 305.0L640.0 310.0M652.6 279.8L646.8 273.0M654.7 261.2L662.0 262.0M662.0 262.0L650.0 290.0M634.7 290.3L640.0 272.0M643.0 289.4L652.6 279.8M650.0 290.0L640.0 310.0M643.0 289.4L640.0 272.0M643.0 289.4L650.0 290.0M628.0 305.0L640.0 272.0M654.7 261.2L646.8 273.0M652.6 279.8L650.0 290.0M654.7 261.2L660.0 250.0M661.8 262.6L652.6 279.8M634.7 290.3L628.0 305.0M661.8 262.6L650.0 290.0M640.0 272.0L660.0 250.0" stroke="#5a8ad0" stroke-width=".5" opacity="0.14" fill="none"/><g fill="#a0c8ff"><circle cx="649.8" cy="266.6" r="0.19" opacity="0.31"/><circle cx="634.5" cy="305.3" r="0.44" opacity="0.73"/><circle cx="647.7" cy="274.1" r="0.47" opacity="0.79"/><circle cx="636.9" cy="288.0" r="0.18" opacity="0.31"/><circle cx="648.1" cy="269.0" r="0.51" opacity="0.85"/><circle cx="647.5" cy="266.8" r="0.24" opacity="0.41"/><circle cx="655.3" cy="257.3" r="0.46" opacity="0.77"/><circle cx="651.8" cy="269.3" r="0.48" opacity="0.80"/><circle cx="638.0" cy="302.2" r="0.51" opacity="0.85"/><circle cx="637.5" cy="295.7" r="0.22" opacity="0.37"/><circle cx="653.4" cy="271.4" r="0.21" opacity="0.35"/><circle cx="644.1" cy="291.2" r="0.31" opacity="0.51"/><circle cx="648.3" cy="272.5" r="0.46" opacity="0.76"/><circle cx="660.3" cy="261.2" r="0.33" opacity="0.55"/><circle cx="651.3" cy="271.2" r="0.45" opacity="0.75"/><circle cx="643.4" cy="282.1" r="0.42" opacity="0.71"/><circle cx="659.6" cy="250.5" r="0.43" opacity="0.72"/><circle cx="636.1" cy="284.2" r="0.19" opacity="0.32"/><circle cx="642.2" cy="286.6" r="0.31" opacity="0.52"/><circle cx="655.4" cy="263.0" r="0.53" opacity="0.88"/><circle cx="638.6" cy="291.4" r="0.27" opacity="0.46"/><circle cx="642.1" cy="305.0" r="0.35" opacity="0.59"/><circle cx="647.0" cy="272.3" r="0.46" opacity="0.77"/><circle cx="639.7" cy="298.5" r="0.32" opacity="0.53"/><circle cx="641.2" cy="292.5" r="0.54" opacity="0.90"/></g><path d="M645 318 L662 290 L690 268 L688 282 L672 305 L655 322Z" fill="#0a2458" opacity=".25"/><path d="M672.9 294.6L662.0 290.0M655.1 305.0L645.0 318.0M672.9 294.6L672.0 305.0M663.8 300.7L662.0 290.0M663.8 300.7L672.0 305.0M690.0 268.0L688.0 282.0M654.7 311.0L663.8 300.7M675.0 290.3L672.9 294.6M675.0 290.3L688.0 282.0M654.7 311.0L655.0 322.0M671.6 290.3L690.0 268.0M645.0 318.0L655.0 322.0M655.1 305.0L663.8 300.7M672.9 294.6L688.0 282.0M688.0 282.0L672.0 305.0M672.0 305.0L655.0 322.0M654.7 311.0L655.1 305.0M654.7 311.0L672.0 305.0M671.6 290.3L662.0 290.0M675.0 290.3L671.6 290.3M645.0 318.0L662.0 290.0M655.1 305.0L662.0 290.0M672.9 294.6L663.8 300.7M654.7 311.0L645.0 318.0M671.6 290.3L672.9 294.6M671.6 290.3L688.0 282.0M662.0 290.0L690.0 268.0" stroke="#5a8ad0" stroke-width=".5" opacity="0.14" fill="none"/><g fill="#a0c8ff"><circle cx="671.7" cy="293.9" r="0.35" opacity="0.58"/><circle cx="658.9" cy="300.0" r="0.42" opacity="0.70"/><circle cx="681.9" cy="283.5" r="0.37" opacity="0.61"/><circle cx="675.1" cy="285.1" r="0.29" opacity="0.48"/><circle cx="680.4" cy="276.1" r="0.45" opacity="0.76"/><circle cx="671.9" cy="285.8" r="0.49" opacity="0.81"/><circle cx="667.5" cy="289.6" r="0.32" opacity="0.53"/><circle cx="674.8" cy="292.6" r="0.25" opacity="0.42"/><circle cx="661.9" cy="299.0" r="0.20" opacity="0.33"/><circle cx="654.1" cy="305.2" r="0.39" opacity="0.65"/><circle cx="666.0" cy="304.1" r="0.24" opacity="0.40"/><circle cx="667.4" cy="290.7" r="0.23" opacity="0.38"/><circle cx="682.2" cy="285.6" r="0.31" opacity="0.52"/><circle cx="655.1" cy="314.1" r="0.54" opacity="0.90"/><circle cx="654.9" cy="302.1" r="0.25" opacity="0.42"/><circle cx="686.6" cy="271.5" r="0.31" opacity="0.51"/><circle cx="654.6" cy="310.7" r="0.21" opacity="0.35"/><circle cx="660.4" cy="306.8" r="0.48" opacity="0.80"/><circle cx="659.9" cy="301.1" r="0.37" opacity="0.62"/><circle cx="654.2" cy="307.1" r="0.49" opacity="0.82"/><circle cx="670.6" cy="295.1" r="0.31" opacity="0.51"/><circle cx="668.5" cy="305.7" r="0.42" opacity="0.69"/><circle cx="655.5" cy="303.6" r="0.33" opacity="0.55"/><circle cx="680.5" cy="284.2" r="0.23" opacity="0.38"/><circle cx="660.5" cy="304.5" r="0.29" opacity="0.49"/></g><path d="M660 335 L680 318 L702 305 L698 318 L682 332 L668 340Z" fill="#0a2458" opacity=".25"/><path d="M691.3 320.7L692.8 318.4M692.8 318.4L698.0 318.0M691.3 320.7L682.0 332.0M692.9 310.8L680.0 318.0M702.0 305.0L698.0 318.0M682.7 328.9L660.0 335.0M694.8 313.9L692.9 310.8M694.8 313.9L702.0 305.0M660.0 335.0L668.0 340.0M692.8 318.4L692.9 310.8M691.3 320.7L698.0 318.0M690.1 321.5L682.7 328.9M690.1 321.5L680.0 318.0M698.0 318.0L682.0 332.0M682.0 332.0L668.0 340.0M694.8 313.9L692.8 318.4M690.1 321.5L682.0 332.0M690.1 321.5L692.8 318.4M682.7 328.9L668.0 340.0M660.0 335.0L680.0 318.0M692.8 318.4L680.0 318.0M692.9 310.8L702.0 305.0M690.1 321.5L691.3 320.7M694.8 313.9L698.0 318.0M682.7 328.9L680.0 318.0M682.7 328.9L682.0 332.0M680.0 318.0L702.0 305.0" stroke="#5a8ad0" stroke-width=".5" opacity="0.14" fill="none"/><g fill="#a0c8ff"><circle cx="684.9" cy="317.1" r="0.27" opacity="0.45"/><circle cx="684.3" cy="323.1" r="0.47" opacity="0.78"/><circle cx="692.9" cy="316.1" r="0.45" opacity="0.75"/><circle cx="689.9" cy="315.2" r="0.34" opacity="0.56"/><circle cx="678.8" cy="328.5" r="0.35" opacity="0.59"/><circle cx="663.7" cy="335.6" r="0.45" opacity="0.75"/><circle cx="672.6" cy="325.2" r="0.48" opacity="0.80"/><circle cx="680.4" cy="324.7" r="0.28" opacity="0.47"/><circle cx="688.4" cy="322.6" r="0.48" opacity="0.79"/><circle cx="665.3" cy="335.6" r="0.21" opacity="0.35"/><circle cx="700.4" cy="310.0" r="0.21" opacity="0.35"/><circle cx="686.5" cy="326.8" r="0.51" opacity="0.85"/><circle cx="691.9" cy="317.2" r="0.28" opacity="0.47"/><circle cx="679.7" cy="330.7" r="0.33" opacity="0.55"/><circle cx="688.1" cy="322.8" r="0.30" opacity="0.50"/><circle cx="671.5" cy="335.1" r="0.46" opacity="0.77"/><circle cx="675.4" cy="325.2" r="0.19" opacity="0.32"/><circle cx="666.5" cy="332.8" r="0.49" opacity="0.82"/><circle cx="678.5" cy="327.3" r="0.28" opacity="0.47"/><circle cx="688.6" cy="321.4" r="0.32" opacity="0.53"/><circle cx="689.4" cy="314.5" r="0.30" opacity="0.50"/><circle cx="664.1" cy="333.2" r="0.26" opacity="0.43"/><circle cx="694.8" cy="312.9" r="0.25" opacity="0.42"/><circle cx="674.9" cy="324.3" r="0.51" opacity="0.84"/><circle cx="667.5" cy="334.4" r="0.33" opacity="0.55"/></g><path d="M540.0 330.0 C546.7 327.7,568.0 319.3,580.0 316.0 C592.0 312.7,601.7 310.0,612.0 310.0 C622.3 310.0,633.3 313.0,642.0 316.0 C650.7 319.0,657.0 323.0,664.0 328.0 C671.0 333.0,678.8 339.7,684.0 346.0 C689.2 352.3,692.7 358.3,695.0 366.0 C697.3 373.7,698.8 384.3,698.0 392.0 C697.2 399.7,693.7 406.7,690.0 412.0 C686.3 417.3,680.0 419.0,676.0 424.0 C672.0 429.0,670.3 436.0,666.0 442.0 C661.7 448.0,656.3 455.8,650.0 460.0 C643.7 464.2,635.7 465.8,628.0 467.0 C620.3 468.2,611.7 468.5,604.0 467.0 C596.3 465.5,589.3 460.5,582.0 458.0 C574.7 455.5,567.0 458.3,560.0 452.0 C553.0 445.7,543.3 425.3,540.0 420.0Z" fill="url(#hg)" opacity=".85"/><path d="M540.0 330.0L540.0 420.0M582.0 458.0L560.0 452.0M666.0 442.0L650.0 460.0M627.8 352.6L620.0 347.1M604.5 317.1L580.0 316.0M619.5 378.6L648.1 382.8M667.4 359.7L666.4 389.6M666.2 340.5L664.0 328.0M602.0 387.4L619.5 378.6M667.4 359.7L640.4 369.1M650.0 460.0L628.0 467.0M667.4 359.7L684.0 346.0M577.2 360.2L580.0 316.0M575.9 450.6L560.0 452.0M563.5 419.7L575.1 410.6M666.4 389.6L648.1 382.8M621.4 354.9L627.8 352.6M575.9 450.6L600.1 422.0M621.4 354.9L640.4 369.1M548.5 370.2L556.9 418.7M628.0 467.0L604.0 467.0M620.0 347.1L627.9 347.7M646.9 319.5L627.9 347.7M556.9 418.7L560.0 452.0M690.0 412.0L676.0 424.0M667.2 436.8L647.3 446.6M657.1 415.9L676.0 424.0M643.1 346.8L664.0 328.0M598.1 459.3L604.0 467.0M647.3 446.6L628.0 467.0M667.2 436.8L676.0 424.0M657.1 415.9L648.1 382.8M572.1 361.0L580.0 316.0M643.1 346.8L666.2 340.5M560.0 452.0L540.0 420.0M667.4 359.7L648.1 382.8M666.4 389.6L676.0 424.0M602.0 387.4L600.1 422.0M603.1 457.0L601.7 435.3M572.1 361.0L575.1 410.6M598.1 459.3L603.1 457.0M575.1 410.6L556.9 418.7M575.9 450.6L582.0 458.0M643.1 346.8L667.4 359.7M648.1 382.8L640.4 369.1M621.4 354.9L577.2 360.2M666.2 340.5L684.0 346.0M540.0 330.0L580.0 316.0M575.9 450.6L601.7 435.3M548.5 370.2L575.1 410.6M602.0 387.4L575.1 410.6M604.5 317.1L577.2 360.2M580.0 316.0L612.0 310.0M620.0 347.1L612.0 310.0M563.5 419.7L556.9 418.7M621.4 354.9L620.0 347.1M666.4 389.6L695.0 366.0M619.5 378.6L600.1 422.0M608.7 462.9L604.0 467.0M647.3 446.6L650.0 460.0M610.9 435.4L603.1 457.0M610.9 435.4L600.1 422.0M643.1 346.8L627.8 352.6M604.5 317.1L620.0 347.1M646.9 319.5L664.0 328.0M627.9 347.7L642.0 316.0M572.1 361.0L540.0 330.0M643.1 346.8L640.4 369.1M575.9 450.6L563.5 419.7M621.4 354.9L619.5 378.6M601.7 435.3L600.1 422.0M627.8 352.6L640.4 369.1M619.5 378.6L657.1 415.9M667.2 436.8L657.1 415.9M666.4 389.6L690.0 412.0M598.1 459.3L582.0 458.0M667.2 436.8L666.0 442.0M610.9 435.4L657.1 415.9M666.4 389.6L657.1 415.9M608.7 462.9L603.1 457.0M604.5 317.1L612.0 310.0M548.5 370.2L572.1 361.0M598.1 459.3L601.7 435.3M548.5 370.2L540.0 330.0M602.0 387.4L572.1 361.0M667.4 359.7L666.2 340.5M684.0 346.0L695.0 366.0M667.4 359.7L695.0 366.0M572.1 361.0L577.2 360.2M610.9 435.4L628.0 467.0M643.1 346.8L627.9 347.7M657.1 415.9L600.1 422.0M621.4 354.9L602.0 387.4M627.8 352.6L627.9 347.7M695.0 366.0L698.0 392.0M619.5 378.6L640.4 369.1M612.0 310.0L642.0 316.0M575.1 410.6L600.1 422.0M556.9 418.7L540.0 420.0M608.7 462.9L610.9 435.4M603.1 457.0L604.0 467.0M647.3 446.6L657.1 415.9M698.0 392.0L690.0 412.0M563.5 419.7L560.0 452.0M608.7 462.9L628.0 467.0M601.7 435.3L582.0 458.0M647.3 446.6L666.0 442.0M602.0 387.4L577.2 360.2M577.2 360.2L620.0 347.1M642.0 316.0L664.0 328.0M610.9 435.4L601.7 435.3M604.0 467.0L582.0 458.0M643.1 346.8L646.9 319.5M620.0 347.1L642.0 316.0M646.9 319.5L642.0 316.0M548.5 370.2L540.0 420.0M676.0 424.0L666.0 442.0M664.0 328.0L684.0 346.0M647.3 446.6L610.9 435.4M563.5 419.7L600.1 422.0M666.4 389.6L698.0 392.0" stroke="#3a7ac0" stroke-width=".5" opacity="0.12" fill="none"/><g fill="#a8e0ff"><circle cx="636.8" cy="457.7" r="0.54" opacity="0.90"/><circle cx="654.3" cy="437.0" r="0.24" opacity="0.39"/><circle cx="652.6" cy="443.1" r="0.32" opacity="0.54"/><circle cx="627.4" cy="385.3" r="0.53" opacity="0.88"/><circle cx="590.1" cy="373.1" r="0.18" opacity="0.30"/><circle cx="606.4" cy="409.1" r="0.52" opacity="0.86"/><circle cx="685.9" cy="361.4" r="0.54" opacity="0.89"/><circle cx="569.7" cy="439.3" r="0.24" opacity="0.39"/><circle cx="604.0" cy="321.5" r="0.49" opacity="0.81"/><circle cx="623.3" cy="350.5" r="0.36" opacity="0.60"/><circle cx="627.4" cy="326.7" r="0.49" opacity="0.82"/><circle cx="584.0" cy="380.2" r="0.20" opacity="0.33"/><circle cx="540.4" cy="340.6" r="0.30" opacity="0.51"/><circle cx="615.9" cy="381.4" r="0.42" opacity="0.70"/><circle cx="675.7" cy="363.0" r="0.47" opacity="0.78"/><circle cx="603.0" cy="403.3" r="0.45" opacity="0.74"/><circle cx="619.2" cy="418.5" r="0.43" opacity="0.72"/><circle cx="563.5" cy="343.5" r="0.25" opacity="0.42"/><circle cx="547.7" cy="344.1" r="0.40" opacity="0.66"/><circle cx="680.0" cy="364.9" r="0.31" opacity="0.52"/><circle cx="605.8" cy="416.8" r="0.46" opacity="0.77"/><circle cx="688.7" cy="369.0" r="0.43" opacity="0.72"/><circle cx="594.0" cy="439.4" r="0.26" opacity="0.44"/><circle cx="677.6" cy="389.3" r="0.44" opacity="0.74"/><circle cx="624.5" cy="359.6" r="0.36" opacity="0.60"/><circle cx="623.7" cy="384.9" r="0.48" opacity="0.80"/><circle cx="543.2" cy="397.4" r="0.36" opacity="0.59"/><circle cx="634.5" cy="424.5" r="0.37" opacity="0.61"/><circle cx="629.0" cy="387.2" r="0.40" opacity="0.67"/><circle cx="579.2" cy="396.8" r="0.42" opacity="0.70"/><circle cx="586.4" cy="379.6" r="0.27" opacity="0.46"/><circle cx="579.0" cy="445.2" r="0.24" opacity="0.40"/><circle cx="649.0" cy="349.2" r="0.20" opacity="0.34"/><circle cx="570.4" cy="416.4" r="0.36" opacity="0.60"/><circle cx="626.7" cy="381.1" r="0.28" opacity="0.46"/><circle cx="617.2" cy="454.8" r="0.25" opacity="0.42"/><circle cx="655.8" cy="349.4" r="0.25" opacity="0.42"/><circle cx="591.2" cy="324.6" r="0.52" opacity="0.86"/><circle cx="597.7" cy="337.6" r="0.18" opacity="0.30"/><circle cx="549.5" cy="343.7" r="0.33" opacity="0.55"/><circle cx="635.0" cy="464.0" r="0.50" opacity="0.83"/><circle cx="578.3" cy="406.0" r="0.51" opacity="0.85"/><circle cx="556.1" cy="444.1" r="0.32" opacity="0.54"/><circle cx="663.5" cy="360.6" r="0.41" opacity="0.68"/><circle cx="620.1" cy="326.4" r="0.45" opacity="0.76"/><circle cx="670.0" cy="385.8" r="0.32" opacity="0.53"/><circle cx="689.7" cy="368.8" r="0.50" opacity="0.83"/><circle cx="606.1" cy="368.6" r="0.31" opacity="0.52"/><circle cx="549.5" cy="353.5" r="0.26" opacity="0.44"/><circle cx="549.9" cy="395.0" r="0.34" opacity="0.57"/><circle cx="544.0" cy="334.5" r="0.51" opacity="0.85"/><circle cx="561.1" cy="368.6" r="0.52" opacity="0.87"/><circle cx="557.9" cy="374.3" r="0.47" opacity="0.78"/><circle cx="581.2" cy="385.4" r="0.27" opacity="0.45"/><circle cx="551.2" cy="392.3" r="0.25" opacity="0.41"/><circle cx="603.9" cy="426.4" r="0.44" opacity="0.73"/><circle cx="570.0" cy="362.2" r="0.33" opacity="0.56"/><circle cx="601.0" cy="417.1" r="0.46" opacity="0.77"/><circle cx="593.0" cy="379.3" r="0.20" opacity="0.34"/><circle cx="598.0" cy="458.7" r="0.36" opacity="0.60"/><circle cx="628.0" cy="405.2" r="0.38" opacity="0.64"/><circle cx="667.1" cy="350.8" r="0.29" opacity="0.49"/><circle cx="680.1" cy="388.5" r="0.53" opacity="0.88"/><circle cx="562.0" cy="433.0" r="0.35" opacity="0.58"/><circle cx="614.9" cy="448.3" r="0.23" opacity="0.38"/><circle cx="621.3" cy="349.2" r="0.30" opacity="0.51"/><circle cx="669.1" cy="372.5" r="0.46" opacity="0.77"/><circle cx="571.1" cy="413.1" r="0.25" opacity="0.41"/><circle cx="599.0" cy="315.5" r="0.21" opacity="0.34"/><circle cx="564.9" cy="338.6" r="0.48" opacity="0.80"/><circle cx="578.6" cy="439.6" r="0.18" opacity="0.30"/><circle cx="575.8" cy="351.5" r="0.39" opacity="0.65"/><circle cx="597.9" cy="399.7" r="0.39" opacity="0.64"/><circle cx="584.5" cy="425.3" r="0.54" opacity="0.90"/><circle cx="634.1" cy="323.1" r="0.47" opacity="0.78"/><circle cx="645.4" cy="386.9" r="0.42" opacity="0.69"/><circle cx="581.3" cy="357.7" r="0.37" opacity="0.61"/><circle cx="550.8" cy="402.3" r="0.25" opacity="0.41"/><circle cx="580.1" cy="451.3" r="0.39" opacity="0.65"/><circle cx="578.5" cy="419.7" r="0.54" opacity="0.90"/><circle cx="592.5" cy="401.5" r="0.39" opacity="0.65"/><circle cx="554.0" cy="418.8" r="0.37" opacity="0.61"/><circle cx="622.5" cy="425.8" r="0.21" opacity="0.35"/><circle cx="587.4" cy="350.1" r="0.21" opacity="0.34"/><circle cx="589.4" cy="398.0" r="0.19" opacity="0.32"/><circle cx="585.7" cy="350.2" r="0.24" opacity="0.39"/><circle cx="684.7" cy="379.2" r="0.20" opacity="0.34"/><circle cx="595.1" cy="392.4" r="0.32" opacity="0.53"/><circle cx="655.5" cy="426.7" r="0.50" opacity="0.84"/><circle cx="614.1" cy="347.4" r="0.51" opacity="0.85"/><circle cx="573.4" cy="413.6" r="0.48" opacity="0.79"/><circle cx="569.9" cy="376.4" r="0.38" opacity="0.63"/><circle cx="663.0" cy="397.4" r="0.37" opacity="0.61"/><circle cx="577.8" cy="412.1" r="0.39" opacity="0.65"/><circle cx="559.7" cy="365.5" r="0.30" opacity="0.50"/><circle cx="611.6" cy="336.9" r="0.43" opacity="0.72"/><circle cx="588.4" cy="386.4" r="0.33" opacity="0.55"/><circle cx="574.0" cy="424.5" r="0.48" opacity="0.80"/><circle cx="576.0" cy="335.9" r="0.37" opacity="0.61"/><circle cx="605.0" cy="433.5" r="0.32" opacity="0.54"/><circle cx="612.3" cy="326.7" r="0.19" opacity="0.32"/><circle cx="645.9" cy="340.3" r="0.52" opacity="0.87"/><circle cx="629.3" cy="400.5" r="0.50" opacity="0.84"/><circle cx="574.7" cy="381.9" r="0.23" opacity="0.39"/><circle cx="584.4" cy="425.8" r="0.32" opacity="0.53"/><circle cx="594.0" cy="346.7" r="0.37" opacity="0.62"/><circle cx="635.0" cy="395.2" r="0.37" opacity="0.61"/><circle cx="556.2" cy="399.3" r="0.54" opacity="0.89"/><circle cx="655.2" cy="383.3" r="0.34" opacity="0.57"/><circle cx="643.3" cy="439.9" r="0.37" opacity="0.62"/><circle cx="546.5" cy="394.2" r="0.41" opacity="0.68"/><circle cx="554.0" cy="385.5" r="0.52" opacity="0.87"/><circle cx="556.3" cy="417.1" r="0.50" opacity="0.84"/><circle cx="564.7" cy="442.6" r="0.26" opacity="0.43"/><circle cx="625.0" cy="429.9" r="0.22" opacity="0.37"/><circle cx="615.4" cy="446.1" r="0.31" opacity="0.51"/><circle cx="666.0" cy="381.3" r="0.52" opacity="0.87"/><circle cx="603.3" cy="439.2" r="0.21" opacity="0.35"/><circle cx="593.6" cy="332.9" r="0.33" opacity="0.54"/><circle cx="604.0" cy="347.8" r="0.33" opacity="0.55"/><circle cx="647.7" cy="400.7" r="0.27" opacity="0.45"/><circle cx="652.4" cy="421.3" r="0.33" opacity="0.55"/><circle cx="612.6" cy="337.2" r="0.48" opacity="0.80"/><circle cx="596.4" cy="356.0" r="0.51" opacity="0.86"/><circle cx="588.3" cy="341.1" r="0.32" opacity="0.53"/><circle cx="621.5" cy="406.4" r="0.32" opacity="0.54"/><circle cx="686.4" cy="382.4" r="0.34" opacity="0.57"/><circle cx="610.6" cy="353.3" r="0.47" opacity="0.79"/><circle cx="611.6" cy="325.0" r="0.31" opacity="0.51"/><circle cx="616.6" cy="366.4" r="0.22" opacity="0.36"/><circle cx="655.2" cy="376.6" r="0.36" opacity="0.60"/><circle cx="617.4" cy="382.1" r="0.33" opacity="0.56"/><circle cx="617.4" cy="381.5" r="0.30" opacity="0.50"/><circle cx="558.4" cy="367.1" r="0.42" opacity="0.70"/><circle cx="669.5" cy="430.0" r="0.18" opacity="0.30"/><circle cx="593.5" cy="386.8" r="0.47" opacity="0.79"/><circle cx="629.2" cy="435.9" r="0.43" opacity="0.71"/><circle cx="628.1" cy="404.8" r="0.27" opacity="0.46"/><circle cx="594.2" cy="386.8" r="0.20" opacity="0.34"/><circle cx="660.6" cy="411.0" r="0.26" opacity="0.44"/><circle cx="671.1" cy="395.9" r="0.51" opacity="0.86"/><circle cx="577.5" cy="443.2" r="0.19" opacity="0.32"/><circle cx="668.1" cy="350.0" r="0.30" opacity="0.50"/><circle cx="546.0" cy="329.9" r="0.18" opacity="0.31"/><circle cx="632.8" cy="405.9" r="0.23" opacity="0.39"/><circle cx="671.7" cy="386.5" r="0.40" opacity="0.66"/><circle cx="644.7" cy="342.2" r="0.47" opacity="0.78"/><circle cx="604.9" cy="388.2" r="0.23" opacity="0.38"/><circle cx="580.3" cy="381.5" r="0.44" opacity="0.73"/><circle cx="612.3" cy="398.0" r="0.45" opacity="0.75"/><circle cx="603.6" cy="312.5" r="0.38" opacity="0.64"/><circle cx="613.1" cy="412.8" r="0.36" opacity="0.59"/><circle cx="556.4" cy="390.7" r="0.21" opacity="0.35"/><circle cx="551.1" cy="363.1" r="0.24" opacity="0.41"/><circle cx="619.7" cy="458.3" r="0.26" opacity="0.43"/><circle cx="672.0" cy="392.1" r="0.46" opacity="0.77"/><circle cx="563.3" cy="449.9" r="0.22" opacity="0.37"/><circle cx="587.4" cy="330.7" r="0.40" opacity="0.67"/><circle cx="589.8" cy="398.9" r="0.26" opacity="0.43"/><circle cx="603.1" cy="451.5" r="0.40" opacity="0.66"/><circle cx="616.9" cy="424.0" r="0.54" opacity="0.90"/><circle cx="592.8" cy="327.2" r="0.27" opacity="0.44"/><circle cx="564.7" cy="373.6" r="0.45" opacity="0.75"/><circle cx="661.1" cy="326.9" r="0.24" opacity="0.40"/><circle cx="596.9" cy="442.6" r="0.35" opacity="0.59"/><circle cx="625.2" cy="355.7" r="0.38" opacity="0.63"/><circle cx="635.6" cy="362.8" r="0.40" opacity="0.66"/><circle cx="659.2" cy="365.6" r="0.34" opacity="0.57"/><circle cx="560.6" cy="350.7" r="0.19" opacity="0.32"/><circle cx="632.5" cy="435.3" r="0.24" opacity="0.41"/><circle cx="595.6" cy="401.4" r="0.49" opacity="0.81"/><circle cx="625.4" cy="329.7" r="0.20" opacity="0.33"/><circle cx="545.5" cy="428.7" r="0.50" opacity="0.84"/><circle cx="563.0" cy="437.2" r="0.20" opacity="0.33"/><circle cx="671.9" cy="420.3" r="0.35" opacity="0.58"/><circle cx="615.4" cy="344.5" r="0.52" opacity="0.86"/><circle cx="583.0" cy="351.6" r="0.46" opacity="0.76"/><circle cx="631.1" cy="391.1" r="0.39" opacity="0.64"/><circle cx="557.5" cy="327.1" r="0.53" opacity="0.89"/><circle cx="651.0" cy="406.5" r="0.38" opacity="0.64"/><circle cx="577.1" cy="334.6" r="0.39" opacity="0.65"/><circle cx="594.2" cy="402.0" r="0.51" opacity="0.86"/><circle cx="611.5" cy="358.0" r="0.52" opacity="0.87"/><circle cx="587.0" cy="385.5" r="0.35" opacity="0.59"/><circle cx="600.0" cy="416.9" r="0.34" opacity="0.57"/><circle cx="618.3" cy="445.6" r="0.32" opacity="0.54"/><circle cx="556.1" cy="415.0" r="0.19" opacity="0.32"/><circle cx="621.5" cy="367.9" r="0.33" opacity="0.56"/><circle cx="655.0" cy="441.7" r="0.53" opacity="0.88"/><circle cx="663.2" cy="438.7" r="0.52" opacity="0.86"/><circle cx="600.8" cy="363.9" r="0.19" opacity="0.32"/><circle cx="611.7" cy="318.9" r="0.26" opacity="0.43"/><circle cx="605.2" cy="374.6" r="0.46" opacity="0.76"/><circle cx="613.3" cy="420.9" r="0.19" opacity="0.31"/><circle cx="653.9" cy="429.6" r="0.18" opacity="0.31"/><circle cx="595.4" cy="409.9" r="0.23" opacity="0.38"/><circle cx="663.8" cy="407.3" r="0.46" opacity="0.77"/><circle cx="592.6" cy="411.6" r="0.21" opacity="0.36"/><circle cx="585.4" cy="400.0" r="0.26" opacity="0.43"/><circle cx="606.5" cy="365.1" r="0.42" opacity="0.70"/><circle cx="621.8" cy="440.3" r="0.40" opacity="0.67"/><circle cx="646.8" cy="452.9" r="0.23" opacity="0.38"/><circle cx="663.8" cy="433.2" r="0.21" opacity="0.35"/><circle cx="637.1" cy="358.9" r="0.31" opacity="0.52"/><circle cx="615.4" cy="435.2" r="0.32" opacity="0.53"/><circle cx="565.5" cy="451.5" r="0.53" opacity="0.89"/><circle cx="614.1" cy="328.9" r="0.35" opacity="0.58"/><circle cx="625.8" cy="433.5" r="0.54" opacity="0.90"/><circle cx="682.1" cy="373.2" r="0.25" opacity="0.42"/><circle cx="634.5" cy="377.9" r="0.44" opacity="0.73"/><circle cx="570.3" cy="383.8" r="0.51" opacity="0.85"/><circle cx="633.1" cy="455.7" r="0.45" opacity="0.75"/><circle cx="561.2" cy="411.3" r="0.25" opacity="0.41"/><circle cx="551.3" cy="404.8" r="0.18" opacity="0.31"/><circle cx="548.3" cy="371.3" r="0.25" opacity="0.41"/><circle cx="645.0" cy="353.7" r="0.27" opacity="0.45"/><circle cx="627.1" cy="392.4" r="0.48" opacity="0.81"/><circle cx="658.7" cy="372.9" r="0.20" opacity="0.33"/><circle cx="623.8" cy="360.3" r="0.26" opacity="0.43"/><circle cx="645.0" cy="425.3" r="0.27" opacity="0.46"/><circle cx="645.2" cy="345.5" r="0.50" opacity="0.83"/><circle cx="602.9" cy="384.3" r="0.24" opacity="0.40"/><circle cx="613.4" cy="353.5" r="0.46" opacity="0.77"/><circle cx="561.4" cy="393.8" r="0.33" opacity="0.54"/><circle cx="684.2" cy="412.8" r="0.38" opacity="0.64"/><circle cx="563.1" cy="326.3" r="0.40" opacity="0.66"/><circle cx="606.7" cy="368.1" r="0.19" opacity="0.31"/><circle cx="638.6" cy="382.7" r="0.35" opacity="0.59"/><circle cx="671.1" cy="407.8" r="0.27" opacity="0.44"/><circle cx="649.4" cy="329.2" r="0.41" opacity="0.68"/><circle cx="540.3" cy="355.0" r="0.34" opacity="0.56"/><circle cx="612.9" cy="433.8" r="0.38" opacity="0.64"/><circle cx="642.3" cy="380.6" r="0.44" opacity="0.74"/><circle cx="569.6" cy="451.0" r="0.48" opacity="0.80"/><circle cx="663.7" cy="355.6" r="0.51" opacity="0.85"/><circle cx="668.1" cy="384.2" r="0.22" opacity="0.36"/><circle cx="567.3" cy="397.0" r="0.49" opacity="0.82"/><circle cx="582.7" cy="342.8" r="0.46" opacity="0.77"/><circle cx="629.5" cy="399.1" r="0.39" opacity="0.66"/><circle cx="667.8" cy="432.5" r="0.28" opacity="0.46"/><circle cx="672.4" cy="394.9" r="0.30" opacity="0.49"/><circle cx="682.2" cy="354.4" r="0.35" opacity="0.58"/><circle cx="633.8" cy="430.5" r="0.43" opacity="0.72"/><circle cx="648.5" cy="342.5" r="0.30" opacity="0.50"/><circle cx="658.5" cy="400.7" r="0.51" opacity="0.85"/><circle cx="618.0" cy="356.4" r="0.22" opacity="0.36"/><circle cx="673.9" cy="377.6" r="0.25" opacity="0.42"/><circle cx="624.8" cy="347.6" r="0.24" opacity="0.40"/><circle cx="627.8" cy="399.6" r="0.53" opacity="0.89"/><circle cx="567.1" cy="397.7" r="0.43" opacity="0.72"/><circle cx="696.3" cy="396.3" r="0.35" opacity="0.58"/><circle cx="541.7" cy="378.3" r="0.49" opacity="0.82"/><circle cx="549.3" cy="392.4" r="0.52" opacity="0.87"/><circle cx="588.5" cy="340.6" r="0.53" opacity="0.89"/><circle cx="666.1" cy="352.1" r="0.32" opacity="0.53"/><circle cx="566.4" cy="433.9" r="0.29" opacity="0.48"/><circle cx="577.4" cy="452.9" r="0.44" opacity="0.73"/><circle cx="621.1" cy="339.0" r="0.43" opacity="0.72"/><circle cx="626.6" cy="424.5" r="0.42" opacity="0.70"/><circle cx="566.0" cy="448.6" r="0.43" opacity="0.71"/><circle cx="570.0" cy="350.3" r="0.21" opacity="0.34"/><circle cx="642.6" cy="401.8" r="0.43" opacity="0.71"/><circle cx="578.5" cy="357.9" r="0.47" opacity="0.79"/><circle cx="643.3" cy="427.8" r="0.26" opacity="0.44"/><circle cx="561.1" cy="384.2" r="0.51" opacity="0.84"/><circle cx="581.0" cy="429.7" r="0.43" opacity="0.72"/><circle cx="597.9" cy="419.9" r="0.51" opacity="0.85"/><circle cx="573.4" cy="350.9" r="0.32" opacity="0.53"/><circle cx="571.2" cy="372.9" r="0.44" opacity="0.74"/><circle cx="675.3" cy="414.3" r="0.38" opacity="0.63"/><circle cx="650.1" cy="369.6" r="0.52" opacity="0.86"/><circle cx="570.8" cy="350.0" r="0.22" opacity="0.37"/><circle cx="611.9" cy="418.1" r="0.29" opacity="0.48"/><circle cx="582.8" cy="404.8" r="0.42" opacity="0.69"/><circle cx="561.6" cy="411.9" r="0.41" opacity="0.68"/><circle cx="677.6" cy="356.7" r="0.23" opacity="0.38"/><circle cx="625.9" cy="444.7" r="0.22" opacity="0.37"/><circle cx="572.7" cy="326.5" r="0.54" opacity="0.89"/><circle cx="674.0" cy="378.6" r="0.19" opacity="0.31"/><circle cx="549.7" cy="349.0" r="0.19" opacity="0.32"/><circle cx="562.3" cy="325.5" r="0.33" opacity="0.55"/><circle cx="670.5" cy="433.0" r="0.37" opacity="0.62"/><circle cx="658.3" cy="408.2" r="0.45" opacity="0.75"/><circle cx="583.4" cy="450.2" r="0.49" opacity="0.82"/><circle cx="661.5" cy="444.0" r="0.35" opacity="0.59"/><circle cx="681.7" cy="353.5" r="0.24" opacity="0.40"/><circle cx="642.4" cy="379.8" r="0.49" opacity="0.82"/><circle cx="611.3" cy="334.9" r="0.32" opacity="0.53"/><circle cx="566.5" cy="339.5" r="0.32" opacity="0.53"/><circle cx="688.6" cy="391.1" r="0.28" opacity="0.46"/><circle cx="573.4" cy="348.9" r="0.37" opacity="0.62"/><circle cx="573.6" cy="326.6" r="0.48" opacity="0.79"/><circle cx="643.5" cy="403.5" r="0.27" opacity="0.45"/><circle cx="606.4" cy="448.1" r="0.27" opacity="0.46"/><circle cx="608.3" cy="325.4" r="0.32" opacity="0.53"/><circle cx="553.4" cy="431.0" r="0.54" opacity="0.90"/><circle cx="551.9" cy="366.6" r="0.52" opacity="0.87"/><circle cx="559.1" cy="437.2" r="0.22" opacity="0.37"/><circle cx="612.9" cy="433.0" r="0.46" opacity="0.77"/><circle cx="667.0" cy="360.9" r="0.37" opacity="0.62"/><circle cx="655.9" cy="371.7" r="0.36" opacity="0.60"/><circle cx="632.2" cy="366.3" r="0.30" opacity="0.50"/><circle cx="690.2" cy="396.2" r="0.35" opacity="0.58"/><circle cx="614.3" cy="312.3" r="0.30" opacity="0.50"/><circle cx="612.8" cy="317.4" r="0.18" opacity="0.31"/><circle cx="541.0" cy="407.1" r="0.18" opacity="0.30"/><circle cx="690.6" cy="408.2" r="0.44" opacity="0.73"/><circle cx="546.6" cy="389.8" r="0.25" opacity="0.42"/><circle cx="685.4" cy="365.8" r="0.25" opacity="0.42"/><circle cx="608.0" cy="360.7" r="0.23" opacity="0.39"/><circle cx="663.2" cy="344.1" r="0.51" opacity="0.85"/><circle cx="656.4" cy="445.3" r="0.44" opacity="0.74"/><circle cx="541.7" cy="350.6" r="0.51" opacity="0.84"/><circle cx="626.2" cy="454.7" r="0.35" opacity="0.58"/><circle cx="594.0" cy="440.7" r="0.27" opacity="0.46"/><circle cx="604.4" cy="439.8" r="0.32" opacity="0.53"/><circle cx="643.6" cy="333.8" r="0.26" opacity="0.43"/><circle cx="552.1" cy="372.7" r="0.40" opacity="0.67"/><circle cx="596.1" cy="388.0" r="0.32" opacity="0.54"/><circle cx="613.2" cy="444.2" r="0.33" opacity="0.55"/><circle cx="657.5" cy="444.5" r="0.33" opacity="0.55"/><circle cx="593.8" cy="324.3" r="0.42" opacity="0.70"/><circle cx="666.3" cy="409.5" r="0.28" opacity="0.47"/><circle cx="651.1" cy="345.1" r="0.47" opacity="0.78"/><circle cx="688.8" cy="361.1" r="0.40" opacity="0.66"/><circle cx="611.8" cy="362.2" r="0.50" opacity="0.83"/><circle cx="589.9" cy="434.4" r="0.45" opacity="0.75"/><circle cx="557.6" cy="440.1" r="0.32" opacity="0.53"/><circle cx="598.2" cy="379.9" r="0.32" opacity="0.54"/><circle cx="606.6" cy="428.5" r="0.29" opacity="0.49"/><circle cx="565.1" cy="428.7" r="0.33" opacity="0.56"/><circle cx="625.0" cy="337.1" r="0.42" opacity="0.70"/><circle cx="637.0" cy="409.8" r="0.52" opacity="0.86"/><circle cx="551.8" cy="391.6" r="0.20" opacity="0.33"/><circle cx="598.0" cy="411.0" r="0.47" opacity="0.79"/><circle cx="583.8" cy="450.7" r="0.51" opacity="0.85"/><circle cx="685.5" cy="378.7" r="0.41" opacity="0.68"/><circle cx="615.2" cy="320.7" r="0.28" opacity="0.46"/><circle cx="672.3" cy="338.5" r="0.34" opacity="0.57"/><circle cx="646.6" cy="374.7" r="0.39" opacity="0.65"/><circle cx="629.3" cy="330.2" r="0.19" opacity="0.32"/><circle cx="622.7" cy="409.6" r="0.38" opacity="0.63"/><circle cx="553.7" cy="441.1" r="0.50" opacity="0.84"/><circle cx="602.8" cy="399.1" r="0.41" opacity="0.68"/><circle cx="630.2" cy="376.0" r="0.48" opacity="0.80"/><circle cx="684.6" cy="376.1" r="0.44" opacity="0.74"/><circle cx="581.7" cy="405.2" r="0.34" opacity="0.56"/><circle cx="568.8" cy="334.0" r="0.46" opacity="0.76"/><circle cx="607.9" cy="378.9" r="0.31" opacity="0.51"/><circle cx="636.4" cy="408.4" r="0.47" opacity="0.78"/><circle cx="587.9" cy="404.6" r="0.36" opacity="0.60"/><circle cx="636.3" cy="385.9" r="0.37" opacity="0.61"/><circle cx="622.7" cy="374.4" r="0.36" opacity="0.61"/><circle cx="670.3" cy="369.2" r="0.45" opacity="0.76"/><circle cx="541.9" cy="360.0" r="0.45" opacity="0.75"/><circle cx="643.4" cy="325.1" r="0.31" opacity="0.51"/><circle cx="609.8" cy="437.9" r="0.22" opacity="0.37"/><circle cx="564.2" cy="357.4" r="0.33" opacity="0.54"/><circle cx="651.6" cy="371.9" r="0.44" opacity="0.73"/><circle cx="576.2" cy="366.8" r="0.46" opacity="0.76"/><circle cx="608.6" cy="389.9" r="0.33" opacity="0.55"/><circle cx="554.9" cy="389.7" r="0.20" opacity="0.33"/><circle cx="565.0" cy="425.3" r="0.45" opacity="0.75"/><circle cx="602.9" cy="342.2" r="0.26" opacity="0.43"/><circle cx="580.2" cy="453.4" r="0.33" opacity="0.56"/><circle cx="623.2" cy="391.1" r="0.22" opacity="0.37"/><circle cx="640.7" cy="346.3" r="0.53" opacity="0.88"/><circle cx="639.6" cy="387.9" r="0.22" opacity="0.37"/><circle cx="583.3" cy="353.9" r="0.52" opacity="0.86"/><circle cx="621.6" cy="390.2" r="0.35" opacity="0.58"/><circle cx="595.9" cy="414.9" r="0.35" opacity="0.58"/><circle cx="628.7" cy="421.8" r="0.41" opacity="0.69"/><circle cx="567.9" cy="452.8" r="0.24" opacity="0.40"/><circle cx="629.1" cy="454.0" r="0.53" opacity="0.89"/><circle cx="596.2" cy="397.1" r="0.41" opacity="0.69"/><circle cx="577.0" cy="375.1" r="0.40" opacity="0.66"/><circle cx="572.9" cy="428.8" r="0.54" opacity="0.90"/><circle cx="617.5" cy="434.3" r="0.36" opacity="0.60"/><circle cx="613.8" cy="322.4" r="0.28" opacity="0.46"/><circle cx="546.2" cy="394.9" r="0.42" opacity="0.70"/><circle cx="603.6" cy="451.0" r="0.52" opacity="0.87"/><circle cx="578.5" cy="361.7" r="0.25" opacity="0.42"/><circle cx="574.2" cy="416.6" r="0.46" opacity="0.76"/><circle cx="693.2" cy="391.5" r="0.33" opacity="0.54"/><circle cx="622.8" cy="356.8" r="0.44" opacity="0.74"/><circle cx="591.6" cy="330.3" r="0.52" opacity="0.87"/><circle cx="565.6" cy="360.5" r="0.32" opacity="0.53"/><circle cx="604.2" cy="392.5" r="0.48" opacity="0.79"/><circle cx="660.9" cy="383.7" r="0.29" opacity="0.48"/><circle cx="693.6" cy="371.9" r="0.53" opacity="0.88"/><circle cx="657.6" cy="361.8" r="0.25" opacity="0.42"/><circle cx="653.6" cy="414.9" r="0.39" opacity="0.65"/><circle cx="625.6" cy="353.3" r="0.51" opacity="0.85"/><circle cx="620.5" cy="453.9" r="0.47" opacity="0.78"/><circle cx="658.0" cy="336.0" r="0.23" opacity="0.38"/><circle cx="598.0" cy="459.5" r="0.23" opacity="0.38"/><circle cx="549.4" cy="341.4" r="0.27" opacity="0.45"/><circle cx="633.4" cy="329.3" r="0.45" opacity="0.76"/><circle cx="632.1" cy="404.1" r="0.48" opacity="0.79"/><circle cx="593.6" cy="458.8" r="0.35" opacity="0.58"/><circle cx="643.9" cy="433.8" r="0.31" opacity="0.52"/><circle cx="624.3" cy="392.3" r="0.21" opacity="0.35"/><circle cx="630.1" cy="464.1" r="0.43" opacity="0.71"/><circle cx="590.6" cy="405.0" r="0.46" opacity="0.77"/><circle cx="658.9" cy="427.4" r="0.47" opacity="0.78"/><circle cx="603.8" cy="427.4" r="0.36" opacity="0.59"/><circle cx="595.4" cy="379.6" r="0.53" opacity="0.88"/><circle cx="655.4" cy="387.6" r="0.53" opacity="0.89"/><circle cx="642.6" cy="399.0" r="0.41" opacity="0.69"/><circle cx="608.0" cy="316.6" r="0.34" opacity="0.56"/><circle cx="654.9" cy="328.6" r="0.24" opacity="0.41"/><circle cx="656.9" cy="362.0" r="0.24" opacity="0.40"/><circle cx="581.2" cy="403.1" r="0.23" opacity="0.38"/><circle cx="545.5" cy="355.1" r="0.54" opacity="0.90"/><circle cx="561.8" cy="415.2" r="0.52" opacity="0.86"/><circle cx="680.2" cy="411.4" r="0.35" opacity="0.58"/><circle cx="656.4" cy="447.2" r="0.32" opacity="0.53"/><circle cx="628.0" cy="393.8" r="0.18" opacity="0.31"/><circle cx="577.4" cy="387.9" r="0.29" opacity="0.48"/><circle cx="567.1" cy="336.6" r="0.36" opacity="0.60"/><circle cx="541.6" cy="340.8" r="0.45" opacity="0.75"/><circle cx="634.0" cy="375.4" r="0.52" opacity="0.87"/><circle cx="557.4" cy="401.7" r="0.48" opacity="0.80"/><circle cx="630.4" cy="347.8" r="0.31" opacity="0.52"/><circle cx="558.4" cy="323.8" r="0.53" opacity="0.89"/><circle cx="595.3" cy="383.7" r="0.43" opacity="0.71"/><circle cx="637.9" cy="459.4" r="0.28" opacity="0.46"/><circle cx="655.9" cy="428.7" r="0.43" opacity="0.72"/><circle cx="569.8" cy="388.0" r="0.29" opacity="0.48"/><circle cx="614.5" cy="429.8" r="0.47" opacity="0.78"/><circle cx="611.6" cy="324.0" r="0.25" opacity="0.41"/><circle cx="639.9" cy="413.4" r="0.46" opacity="0.77"/><circle cx="600.4" cy="403.6" r="0.28" opacity="0.47"/><circle cx="658.1" cy="329.2" r="0.33" opacity="0.54"/><circle cx="680.1" cy="417.0" r="0.36" opacity="0.61"/><circle cx="617.3" cy="327.8" r="0.20" opacity="0.33"/><circle cx="679.3" cy="345.0" r="0.39" opacity="0.66"/><circle cx="628.7" cy="353.1" r="0.41" opacity="0.68"/><circle cx="594.7" cy="341.6" r="0.23" opacity="0.38"/><circle cx="614.5" cy="375.3" r="0.34" opacity="0.57"/><circle cx="641.1" cy="367.1" r="0.33" opacity="0.55"/><circle cx="676.4" cy="404.3" r="0.30" opacity="0.50"/><circle cx="628.0" cy="417.9" r="0.33" opacity="0.55"/><circle cx="597.9" cy="346.1" r="0.36" opacity="0.60"/><circle cx="627.0" cy="398.2" r="0.24" opacity="0.40"/><circle cx="547.5" cy="396.3" r="0.33" opacity="0.56"/><circle cx="658.0" cy="401.1" r="0.32" opacity="0.53"/><circle cx="637.4" cy="407.8" r="0.28" opacity="0.47"/><circle cx="578.1" cy="448.2" r="0.37" opacity="0.62"/><circle cx="584.8" cy="448.4" r="0.32" opacity="0.53"/><circle cx="566.4" cy="343.8" r="0.28" opacity="0.47"/><circle cx="656.6" cy="353.0" r="0.51" opacity="0.85"/><circle cx="559.3" cy="375.4" r="0.44" opacity="0.73"/><circle cx="596.9" cy="360.1" r="0.19" opacity="0.31"/><circle cx="567.9" cy="327.5" r="0.42" opacity="0.70"/><circle cx="633.0" cy="316.8" r="0.34" opacity="0.56"/><circle cx="663.9" cy="353.7" r="0.38" opacity="0.64"/><circle cx="595.9" cy="335.0" r="0.51" opacity="0.84"/><circle cx="584.5" cy="420.9" r="0.20" opacity="0.34"/><circle cx="638.5" cy="457.1" r="0.37" opacity="0.62"/><circle cx="546.7" cy="392.7" r="0.47" opacity="0.78"/><circle cx="564.3" cy="367.6" r="0.34" opacity="0.57"/><circle cx="600.7" cy="464.9" r="0.44" opacity="0.73"/><circle cx="635.1" cy="324.1" r="0.28" opacity="0.47"/><circle cx="599.6" cy="389.7" r="0.36" opacity="0.61"/><circle cx="613.5" cy="419.5" r="0.34" opacity="0.57"/><circle cx="606.1" cy="327.1" r="0.51" opacity="0.85"/><circle cx="633.6" cy="325.0" r="0.28" opacity="0.46"/><circle cx="636.1" cy="405.5" r="0.19" opacity="0.31"/><circle cx="684.6" cy="356.7" r="0.50" opacity="0.84"/><circle cx="568.9" cy="405.0" r="0.26" opacity="0.43"/><circle cx="649.3" cy="438.7" r="0.33" opacity="0.55"/><circle cx="645.9" cy="443.9" r="0.30" opacity="0.51"/><circle cx="568.9" cy="365.8" r="0.42" opacity="0.71"/><circle cx="682.9" cy="358.1" r="0.35" opacity="0.58"/><circle cx="616.1" cy="338.0" r="0.21" opacity="0.36"/><circle cx="650.7" cy="359.5" r="0.20" opacity="0.33"/><circle cx="594.5" cy="338.2" r="0.27" opacity="0.45"/><circle cx="571.7" cy="409.6" r="0.30" opacity="0.50"/><circle cx="591.9" cy="424.0" r="0.34" opacity="0.56"/><circle cx="640.8" cy="429.0" r="0.20" opacity="0.33"/><circle cx="665.7" cy="425.1" r="0.50" opacity="0.83"/><circle cx="618.7" cy="412.4" r="0.25" opacity="0.42"/><circle cx="586.0" cy="321.8" r="0.19" opacity="0.31"/><circle cx="575.0" cy="349.6" r="0.27" opacity="0.44"/><circle cx="588.1" cy="336.9" r="0.26" opacity="0.44"/><circle cx="637.4" cy="362.7" r="0.23" opacity="0.38"/><circle cx="627.6" cy="431.6" r="0.37" opacity="0.62"/><circle cx="625.8" cy="319.5" r="0.23" opacity="0.38"/><circle cx="599.0" cy="430.8" r="0.49" opacity="0.82"/><circle cx="679.0" cy="413.5" r="0.51" opacity="0.86"/><circle cx="694.1" cy="384.5" r="0.28" opacity="0.47"/><circle cx="613.6" cy="382.4" r="0.26" opacity="0.43"/><circle cx="569.7" cy="368.5" r="0.36" opacity="0.60"/><circle cx="632.5" cy="355.0" r="0.46" opacity="0.76"/><circle cx="655.4" cy="363.1" r="0.37" opacity="0.62"/><circle cx="612.6" cy="430.2" r="0.30" opacity="0.49"/><circle cx="670.9" cy="418.0" r="0.35" opacity="0.58"/><circle cx="590.6" cy="401.7" r="0.49" opacity="0.81"/><circle cx="660.4" cy="345.7" r="0.19" opacity="0.31"/><circle cx="625.0" cy="319.8" r="0.52" opacity="0.86"/><circle cx="611.6" cy="370.1" r="0.18" opacity="0.31"/><circle cx="620.5" cy="418.4" r="0.38" opacity="0.64"/><circle cx="649.6" cy="380.3" r="0.36" opacity="0.60"/><circle cx="628.0" cy="461.9" r="0.49" opacity="0.81"/><circle cx="559.9" cy="330.5" r="0.44" opacity="0.74"/><circle cx="586.6" cy="367.1" r="0.24" opacity="0.40"/><circle cx="547.5" cy="342.5" r="0.45" opacity="0.75"/><circle cx="635.9" cy="381.9" r="0.44" opacity="0.73"/><circle cx="645.9" cy="341.6" r="0.20" opacity="0.33"/><circle cx="629.5" cy="338.4" r="0.43" opacity="0.71"/><circle cx="547.5" cy="407.0" r="0.32" opacity="0.53"/><circle cx="590.6" cy="442.2" r="0.45" opacity="0.76"/><circle cx="634.1" cy="464.4" r="0.46" opacity="0.77"/><circle cx="540.0" cy="390.7" r="0.37" opacity="0.62"/><circle cx="622.0" cy="434.6" r="0.27" opacity="0.45"/><circle cx="559.5" cy="422.1" r="0.42" opacity="0.70"/><circle cx="605.4" cy="453.9" r="0.21" opacity="0.35"/><circle cx="585.2" cy="433.0" r="0.50" opacity="0.83"/><circle cx="668.3" cy="362.3" r="0.35" opacity="0.58"/></g><path d="M414.0 424.0 C432.3 424.0,506.0 420.3,524.0 424.0 C542.0 427.7,524.0 440.3,522.0 446.0 C520.0 451.7,515.7 455.0,512.0 458.0 C508.3 461.0,504.7 463.0,500.0 464.0 C495.3 465.0,489.0 464.7,484.0 464.0 C479.0 463.3,474.7 460.0,470.0 460.0 C465.3 460.0,460.7 464.3,456.0 464.0 C451.3 463.7,445.3 461.0,442.0 458.0 C438.7 455.0,439.0 449.0,436.0 446.0 C433.0 443.0,427.7 442.7,424.0 440.0 C420.3 437.3,415.7 431.7,414.0 430.0Z" fill="#081e50" opacity=".8"/><path d="M444.8 455.3L436.0 446.0M448.7 452.2L454.7 448.2M467.3 426.6L491.9 446.2M414.0 424.0L524.0 424.0M467.3 426.6L466.6 455.7M436.0 446.0L424.0 440.0M424.0 440.0L414.0 430.0M467.3 426.6L524.0 424.0M448.7 452.2L436.0 446.0M446.9 453.6L456.0 464.0M454.7 448.2L435.5 426.5M509.7 435.5L515.6 427.6M509.7 435.5L522.0 446.0M480.3 455.1L467.3 426.6M484.0 464.0L470.0 460.0M466.6 455.7L470.0 460.0M435.5 426.5L414.0 430.0M524.0 424.0L522.0 446.0M480.3 455.1L470.0 460.0M492.8 460.6L484.0 464.0M491.9 446.2L500.0 464.0M444.8 455.3L442.0 458.0M470.0 460.0L456.0 464.0M448.7 452.2L446.9 453.6M467.3 426.6L454.7 448.2M446.9 453.6L444.8 455.3M467.3 426.6L414.0 424.0M522.0 446.0L512.0 458.0M454.7 448.2L466.6 455.7M509.7 435.5L491.9 446.2M515.6 427.6L522.0 446.0M480.3 455.1L492.8 460.6M446.9 453.6L436.0 446.0M454.7 448.2L456.0 464.0M492.8 460.6L491.9 446.2M456.0 464.0L442.0 458.0M492.8 460.6L500.0 464.0M435.5 426.5L424.0 440.0M480.3 455.1L484.0 464.0M512.0 458.0L500.0 464.0M491.9 446.2L512.0 458.0M444.8 455.3L456.0 464.0M467.3 426.6L435.5 426.5M442.0 458.0L436.0 446.0M467.3 426.6L515.6 427.6M414.0 424.0L414.0 430.0M448.7 452.2L456.0 464.0M509.7 435.5L467.3 426.6M515.6 427.6L524.0 424.0M435.5 426.5L414.0 424.0M480.3 455.1L491.9 446.2M454.7 448.2L436.0 446.0M509.7 435.5L512.0 458.0M435.5 426.5L436.0 446.0M480.3 455.1L466.6 455.7M466.6 455.7L456.0 464.0M500.0 464.0L484.0 464.0" stroke="#3a7ac0" stroke-width=".5" opacity="0.1" fill="none"/><g fill="#a0d8ff"><circle cx="428.6" cy="433.0" r="0.32" opacity="0.53"/><circle cx="482.6" cy="455.3" r="0.21" opacity="0.35"/><circle cx="449.3" cy="431.6" r="0.39" opacity="0.66"/><circle cx="479.4" cy="434.7" r="0.24" opacity="0.40"/><circle cx="498.3" cy="450.9" r="0.47" opacity="0.78"/><circle cx="422.2" cy="424.3" r="0.24" opacity="0.41"/><circle cx="500.0" cy="445.6" r="0.40" opacity="0.67"/><circle cx="479.2" cy="449.4" r="0.30" opacity="0.49"/><circle cx="493.3" cy="424.6" r="0.32" opacity="0.53"/><circle cx="420.0" cy="429.0" r="0.51" opacity="0.84"/><circle cx="480.3" cy="455.6" r="0.40" opacity="0.66"/><circle cx="476.9" cy="455.8" r="0.40" opacity="0.67"/><circle cx="470.1" cy="446.3" r="0.38" opacity="0.64"/><circle cx="451.6" cy="450.7" r="0.33" opacity="0.54"/><circle cx="486.0" cy="443.4" r="0.45" opacity="0.75"/><circle cx="490.2" cy="425.6" r="0.46" opacity="0.77"/><circle cx="512.6" cy="437.2" r="0.44" opacity="0.74"/><circle cx="507.0" cy="444.0" r="0.23" opacity="0.38"/><circle cx="494.5" cy="457.5" r="0.29" opacity="0.49"/><circle cx="470.8" cy="424.6" r="0.25" opacity="0.42"/><circle cx="437.9" cy="447.3" r="0.38" opacity="0.64"/><circle cx="470.9" cy="437.6" r="0.32" opacity="0.54"/><circle cx="469.0" cy="446.8" r="0.38" opacity="0.64"/><circle cx="492.7" cy="463.8" r="0.45" opacity="0.75"/><circle cx="469.1" cy="443.3" r="0.49" opacity="0.81"/><circle cx="481.0" cy="456.9" r="0.31" opacity="0.52"/><circle cx="474.9" cy="450.0" r="0.27" opacity="0.44"/><circle cx="498.0" cy="430.2" r="0.23" opacity="0.38"/><circle cx="443.7" cy="456.4" r="0.35" opacity="0.59"/><circle cx="417.9" cy="431.9" r="0.38" opacity="0.64"/><circle cx="420.7" cy="436.6" r="0.26" opacity="0.43"/><circle cx="489.8" cy="429.8" r="0.31" opacity="0.52"/><circle cx="463.4" cy="460.1" r="0.33" opacity="0.54"/><circle cx="429.0" cy="440.9" r="0.31" opacity="0.52"/><circle cx="476.4" cy="429.0" r="0.33" opacity="0.55"/><circle cx="485.9" cy="440.4" r="0.52" opacity="0.87"/><circle cx="454.0" cy="458.9" r="0.30" opacity="0.50"/><circle cx="458.0" cy="452.2" r="0.37" opacity="0.62"/><circle cx="445.3" cy="436.9" r="0.41" opacity="0.69"/><circle cx="501.2" cy="428.5" r="0.51" opacity="0.84"/><circle cx="453.0" cy="429.7" r="0.28" opacity="0.46"/><circle cx="501.8" cy="434.2" r="0.22" opacity="0.37"/><circle cx="479.7" cy="460.5" r="0.29" opacity="0.49"/><circle cx="470.2" cy="439.6" r="0.52" opacity="0.87"/><circle cx="509.0" cy="443.5" r="0.53" opacity="0.89"/><circle cx="438.5" cy="440.7" r="0.38" opacity="0.64"/><circle cx="498.7" cy="452.2" r="0.33" opacity="0.55"/><circle cx="507.6" cy="442.2" r="0.47" opacity="0.79"/><circle cx="443.3" cy="430.9" r="0.21" opacity="0.35"/><circle cx="446.7" cy="452.8" r="0.27" opacity="0.46"/><circle cx="499.0" cy="430.7" r="0.37" opacity="0.61"/><circle cx="501.1" cy="462.8" r="0.42" opacity="0.70"/><circle cx="489.7" cy="440.2" r="0.24" opacity="0.40"/><circle cx="502.7" cy="427.2" r="0.45" opacity="0.75"/><circle cx="448.1" cy="426.1" r="0.23" opacity="0.39"/><circle cx="472.6" cy="436.7" r="0.23" opacity="0.38"/><circle cx="449.5" cy="455.9" r="0.44" opacity="0.74"/><circle cx="465.1" cy="438.8" r="0.54" opacity="0.89"/><circle cx="470.2" cy="451.0" r="0.48" opacity="0.80"/><circle cx="469.8" cy="449.0" r="0.34" opacity="0.57"/><circle cx="506.1" cy="454.5" r="0.34" opacity="0.57"/><circle cx="505.3" cy="433.5" r="0.31" opacity="0.51"/><circle cx="488.0" cy="429.1" r="0.51" opacity="0.86"/><circle cx="447.7" cy="455.3" r="0.37" opacity="0.62"/><circle cx="462.0" cy="445.6" r="0.54" opacity="0.90"/><circle cx="513.0" cy="436.1" r="0.27" opacity="0.45"/><circle cx="516.7" cy="428.9" r="0.21" opacity="0.35"/><circle cx="486.4" cy="431.5" r="0.18" opacity="0.30"/><circle cx="485.0" cy="428.1" r="0.26" opacity="0.44"/><circle cx="494.6" cy="462.3" r="0.34" opacity="0.57"/><circle cx="465.8" cy="426.3" r="0.36" opacity="0.60"/><circle cx="435.6" cy="445.6" r="0.22" opacity="0.36"/><circle cx="445.3" cy="458.7" r="0.30" opacity="0.50"/><circle cx="502.4" cy="450.5" r="0.22" opacity="0.37"/><circle cx="464.2" cy="444.8" r="0.35" opacity="0.59"/><circle cx="435.4" cy="436.1" r="0.45" opacity="0.75"/><circle cx="478.5" cy="440.4" r="0.34" opacity="0.57"/><circle cx="463.8" cy="443.7" r="0.38" opacity="0.63"/><circle cx="513.2" cy="424.7" r="0.40" opacity="0.67"/><circle cx="422.3" cy="427.5" r="0.52" opacity="0.87"/><circle cx="483.2" cy="444.3" r="0.47" opacity="0.78"/><circle cx="471.5" cy="459.0" r="0.50" opacity="0.83"/><circle cx="522.0" cy="426.4" r="0.32" opacity="0.53"/><circle cx="482.5" cy="438.1" r="0.23" opacity="0.39"/><circle cx="470.3" cy="428.5" r="0.45" opacity="0.75"/><circle cx="467.3" cy="427.6" r="0.45" opacity="0.76"/><circle cx="441.9" cy="444.1" r="0.44" opacity="0.73"/><circle cx="455.9" cy="432.2" r="0.38" opacity="0.64"/><circle cx="495.0" cy="458.5" r="0.25" opacity="0.42"/><circle cx="459.7" cy="452.6" r="0.22" opacity="0.36"/></g><ellipse cx="426" cy="428" rx="11" ry="13" fill="#0c3068" stroke="#2a78c0" stroke-width=".6" opacity=".55"/><ellipse cx="455" cy="440" rx="17" ry="24" fill="#0c3068" stroke="#2a78c0" stroke-width=".6" opacity=".55"/><ellipse cx="489" cy="440" rx="15" ry="24" fill="#0c3068" stroke="#2a78c0" stroke-width=".6" opacity=".55"/><ellipse cx="513" cy="436" rx="10" ry="19" fill="#0c3068" stroke="#2a78c0" stroke-width=".6" opacity=".55"/><g><ellipse cx="579" cy="414" rx="13" ry="45" transform="rotate(-14 579 414)" fill="#0a2c64" stroke="#5ab8f0" stroke-width=".7" opacity=".8"/><ellipse cx="604" cy="412" rx="14" ry="53" transform="rotate(-16 604 412)" fill="#0a2c64" stroke="#5ab8f0" stroke-width=".7" opacity=".8"/><ellipse cx="631" cy="408" rx="14" ry="46" transform="rotate(-22 631 408)" fill="#0a2c64" stroke="#5ab8f0" stroke-width=".7" opacity=".8"/><ellipse cx="678" cy="395" rx="16" ry="24" transform="rotate(-35 678 395)" fill="#0a2c64" stroke="#5ab8f0" stroke-width=".7" opacity=".8"/></g><g filter="url(#gl2)"><ellipse cx="576" cy="387" rx="8" ry="16" transform="rotate(-14 576 387)" fill="#48b0dc" opacity=".75"/><ellipse cx="597" cy="375" rx="10" ry="15" transform="rotate(-16 597 375)" fill="#48b0dc" opacity=".75"/><ellipse cx="624" cy="376" rx="10" ry="14" transform="rotate(-22 624 376)" fill="#48b0dc" opacity=".75"/><ellipse cx="676" cy="395" rx="6" ry="12" transform="rotate(25 676 395)" fill="#48b0dc" opacity=".75"/></g><g filter="url(#gl)" fill="#2a9af0" opacity=".6"><circle cx="600" cy="345" r="6"/><circle cx="650" cy="350" r="5"/><circle cx="675" cy="365" r="5"/><circle cx="585" cy="425" r="5"/><circle cx="620" cy="420" r="5"/><circle cx="625" cy="340" r="4"/><circle cx="570" cy="345" r="4"/></g></svg>
<div class="a" style="left:797px;top:59px;width:3px;height:428px;background:linear-gradient(90deg,#1a3848,#5a8a9a 60%,#7aa8b8)"></div>


<!-- title bar -->
<div id="title" class="a">
 <svg class="a" style="left:1px;top:0px" width="10" height="10"><circle cx="5" cy="5" r="4.5" fill="#c8d830"/><circle cx="5" cy="5" r="2" fill="#f4f4a0"/></svg>
 <div class="t" style="left:17px;top:2px;font-size:7px;color:#4a5058;transform:scaleX(.925)">Programa Consultório Odontológico + Agenda Financeiro v2.0 - FpqSystem ® | Licenciado para  EXEMPLO DE PROGRAMAS</div>
 <div class="a" style="left:745px;top:1px;width:16px;height:9px;border:1px solid #aab6c2;border-radius:2px;background:linear-gradient(#e6ecf2,#d0dae4)"></div>
 <div class="a" style="left:763px;top:1px;width:17px;height:9px;border:1px solid #aab6c2;border-radius:2px;background:linear-gradient(#e6ecf2,#d0dae4)"></div>
 <div class="a" style="left:782px;top:1px;width:16px;height:9px;border:1px solid #aab6c2;border-radius:2px;background:linear-gradient(#e6ecf2,#d0dae4)"></div>
 <svg class="a" style="left:745px;top:1px" width="53" height="10"><rect x="5.5" y="4" width="6" height="2.6" rx="1.2" fill="#f4f6f8" stroke="#4a5058" stroke-width=".8"/><path d="M23.5 4.5h4v3.5h-4z M25.5 2.5h4v3.5" fill="#dde" stroke="#4a5058" stroke-width=".8"/><path d="M41.5 2.5 L47.5 7.5 M47.5 2.5 L41.5 7.5" stroke="#4a5058" stroke-width="2.2"/><path d="M41.5 2.5 L47.5 7.5 M47.5 2.5 L41.5 7.5" stroke="#e8ecf0" stroke-width="1"/></svg>
</div>

<!-- menu -->
<div id="menu" class="a"></div>
<div class="t mn" style="left:5px"><u>C</u>ADASTROS</div>
<div class="t mn" style="left:53px"><u>W</u>HATSAPP</div>
<div class="t mn" style="left:98px"><u>A</u>GENDAMENTO</div>
<div class="t mn" style="left:159px"><u>T</u>ABELA PREÇOS</div>
<div class="t mn" style="left:221px"><u>B</u>OLETIM ATENDIMENTO</div>
<div class="t mn" style="left:308px"><u>C</u>OMPRA</div>
<div class="t mn" style="left:345px"><u>F</u>INANCEIRO</div>
<div class="t mn" style="left:395px"><u>R</u>ELATÓRIOS</div>
<div class="t mn" style="left:445px"><u>F</u>ERRAMENTAS</div>
<div class="t mn" style="left:501px"><u>A</u>JUDA</div>

<!-- toolbar -->
<div id="tool" class="a"></div>
<svg class="a" style="left:0;top:24px" width="800" height="35" viewBox="0 24 800 35">
<g fill="#b8b8b8"><rect x="3" y="26" width="1" height="1"/><rect x="5" y="27" width="1" height="1"/><rect x="3" y="28" width="1" height="1"/><rect x="5" y="29" width="1" height="1"/><rect x="3" y="30" width="1" height="1"/><rect x="5" y="31" width="1" height="1"/><rect x="3" y="32" width="1" height="1"/><rect x="5" y="33" width="1" height="1"/><rect x="3" y="34" width="1" height="1"/><rect x="5" y="35" width="1" height="1"/><rect x="3" y="36" width="1" height="1"/><rect x="5" y="37" width="1" height="1"/><rect x="3" y="38" width="1" height="1"/><rect x="5" y="39" width="1" height="1"/><rect x="3" y="40" width="1" height="1"/><rect x="5" y="41" width="1" height="1"/><rect x="3" y="42" width="1" height="1"/><rect x="5" y="43" width="1" height="1"/><rect x="3" y="44" width="1" height="1"/><rect x="5" y="45" width="1" height="1"/><rect x="3" y="46" width="1" height="1"/><rect x="5" y="47" width="1" height="1"/><rect x="3" y="48" width="1" height="1"/><rect x="5" y="49" width="1" height="1"/><rect x="3" y="50" width="1" height="1"/><rect x="5" y="51" width="1" height="1"/><rect x="3" y="52" width="1" height="1"/><rect x="5" y="53" width="1" height="1"/><rect x="3" y="54" width="1" height="1"/><rect x="5" y="55" width="1" height="1"/><rect x="3" y="56" width="1" height="1"/><rect x="5" y="57" width="1" height="1"/></g>
<path d="M8 46.5 Q8 41 13.75 41 Q19.5 41 19.5 46.5Z" fill="#6a3aa8"/>
<ellipse cx="14" cy="35.5" rx="5" ry="5.8" fill="#e6bf3c"/>
<ellipse cx="14.3" cy="37.3" rx="3.4000000000000004" ry="4.176" fill="#f6d2a8"/>
<path d="M21.5 45 Q21.5 38.5 27.75 38.5 Q34 38.5 34 45Z" fill="#c9c9d6"/>
<ellipse cx="27" cy="32" rx="4.6" ry="4.6" fill="#8e5e2c"/>
<ellipse cx="27.3" cy="33.8" rx="3.128" ry="3.312" fill="#f6d2a8"/>
<path d="M15 50 Q15 44.5 20.5 44.5 Q26 44.5 26 50Z" fill="#62aee4"/>
<ellipse cx="20.5" cy="39.5" rx="3.8" ry="3.8" fill="#b4862e"/>
<ellipse cx="20.8" cy="41.3" rx="2.584" ry="2.7359999999999998" fill="#f6d2a8"/>
<path d="M46 28v6M49.6 28v6M53.2 28v6" stroke="#e870a8" stroke-width="1.4"/>
<rect x="43.5" y="34" width="12.5" height="5" rx="1" fill="#7a2ea8"/>
<rect x="39.5" y="38.8" width="20.8" height="8" rx="1" fill="#e2447e"/>
<path d="M40 42.5 Q43 40.8 45 42.5 T50 42.5 T55 42.5 T60 42.5" fill="none" stroke="#fab0d0" stroke-width="1"/>
<rect x="39" y="46.5" width="22" height="1.8" fill="#b4a8c8"/>
<path d="M68 46 Q68 38.5 74.5 38.5 Q81 38.5 81 46Z" fill="#a6a8cc"/>
<ellipse cx="75.5" cy="31.5" rx="4.6" ry="4.6" fill="#9a6a2a"/>
<ellipse cx="75.8" cy="33.3" rx="3.128" ry="3.312" fill="#f6d2a8"/>
<path d="M77 49.5 Q77 45 84.5 45 Q92 45 92 49.5Z" fill="#1c1c1c"/>
<ellipse cx="84" cy="38.5" rx="5" ry="5.5" fill="#8c5a1e"/>
<ellipse cx="84.3" cy="40.3" rx="3.4000000000000004" ry="3.96" fill="#f6d2a8"/>
<path d="M98 49.5 Q98 42 104 42 Q110 42 110 49.5Z" fill="#eef0f0" stroke="#c8ccd0" stroke-width=".6"/>
<ellipse cx="103.5" cy="35.5" rx="6" ry="6.5" fill="#9c2c2a"/><ellipse cx="104" cy="37.5" rx="3.8" ry="4.3" fill="#f4d0a8"/>
<path d="M110 49.5 Q110 42.5 115.5 42.5 Q121 42.5 121 49.5Z" fill="#e6ecf0" stroke="#c8ccd0" stroke-width=".6"/><rect x="115" y="43" width="1.6" height="6.5" fill="#1c2c6c"/>
<ellipse cx="115.3" cy="32.5" rx="5" ry="4.3" fill="#3c4c5c"/><ellipse cx="115.6" cy="37" rx="4" ry="5" fill="#f6c84a"/>
<rect x="131.5" y="30.5" width="23.5" height="17.5" fill="#fff" stroke="#c4c4c4" stroke-width=".8"/>
<rect x="131.5" y="30.5" width="23.5" height="8" fill="#d42c32"/>
<path d="M134 28v3.5M143.3 28v3.5M152.5 28v3.5" stroke="#a0a0a0" stroke-width="1.2"/>
<text x="146" y="37.2" font-size="3.6" font-weight="bold" fill="#fff" font-family="Liberation Sans">JAN</text>
<path d="M134.5 38.5v9.5M139 38.5v9.5M131.5 43.3h10" stroke="#d4d4d4" stroke-width=".6"/>
<text x="144.5" y="46.5" font-size="6" fill="#707070" font-family="Liberation Sans">29</text>
<rect x="166" y="28" width="22" height="20.5" rx="4.5" fill="#2cb84a"/>
<path d="M171.3 44.5 L172.2 41.3 A6.3 6.3 0 1 1 174.6 43.6Z" fill="none" stroke="#fff" stroke-width="1.4" stroke-linejoin="round"/>
<path d="M174.5 35 Q174 37.5 176.5 40 Q179 42 180.5 41 L179.5 39.6 L178.2 40.2 Q176.2 38.8 175.8 37 L176.6 36 L175.6 34.6Z" fill="#fff"/>
<path d="M202 28.5 H215 L220 33 V48 H202Z" fill="#fff" stroke="#c0c0c0" stroke-width=".8"/><path d="M215 28.5 V33 H220" fill="#d8d8d8"/>
<rect x="201.5" y="33" width="1.6" height="14" fill="#2a92c8"/>
<path d="M205 31.5h8M205 36.5h13M205 40h13" stroke="#a8a8a8" stroke-width=".7"/>
<path d="M208 46 L210 42.5 L211 45.5 L213 42 L214 44.5 L219 43.5" fill="none" stroke="#d03434" stroke-width=".9"/>
<path d="M227 32h6.5 M233 32 V46 H252" fill="none" stroke="#2c2c2c" stroke-width="1.6"/>
<rect x="238" y="28" width="8.5" height="8" fill="#7c3018"/><rect x="239.3" y="29.3" width="6" height="5.4" fill="#e4543a"/>
<rect x="234" y="36" width="6" height="5" fill="#3a8a3a"/><rect x="234" y="41" width="6" height="4.5" fill="#d88060"/>
<rect x="240" y="36.5" width="7" height="9" fill="#d84444"/><rect x="246.5" y="36.5" width="5" height="4" fill="#e8987c"/><rect x="246.5" y="40.5" width="5.5" height="5" fill="#3874b4"/>
<circle cx="237" cy="47.3" r="1.6" fill="#1c1c1c"/><circle cx="249" cy="47.3" r="1.6" fill="#1c1c1c"/>
<path d="M268 28.5 Q265 29 265 34 Q265.5 40 267.5 49 L270 49 L272 41 Q274 39.5 276 41 L278 49 L280.5 49 Q282.5 40 283 34 Q283 29 280 28.5 Q277 28 274 29.3 Q271 28 268 28.5Z" fill="#2c7ac4"/>
<path d="M268.5 32 L274 30.5 L279.5 32 L279.5 37.5 Q279 41.5 274 43.5 Q269 41.5 268.5 37.5Z" fill="#d4283a"/>
<path d="M274 33.5v6.5M270.8 36.8h6.4" stroke="#fff" stroke-width="2.2"/>
<path d="M293 30 L300 29.5 L301 31 L313 31 L313 37 L293 37Z" fill="#f0a838"/>
<rect x="296" y="32" width="14" height="6" fill="#fafafa"/>
<path d="M292 37 H299 L301 39.5 H306 L308 37 H315 V48 H292Z" fill="#d8b452"/>
<rect x="300" y="43.4" width="7" height="1.2" fill="#8a6a20"/>
<rect x="322.5" y="34" width="10" height="13" fill="#fff" stroke="#b4b4b4" stroke-width=".7"/><rect x="325" y="31" width="10" height="13" fill="#fff" stroke="#b4b4b4" stroke-width=".7"/><rect x="328" y="28" width="10" height="13" fill="#fff" stroke="#b4b4b4" stroke-width=".7"/>
<path d="M330 31h6M330 33.5h6" stroke="#c8c8c8" stroke-width=".6"/>
<path d="M339.5 41 L344 45.5" stroke="#5ab4e2" stroke-width="2.6" stroke-linecap="round"/>
<circle cx="336.5" cy="38" r="4.6" fill="#cfeaf8" stroke="#6cc0ec" stroke-width="1.2"/><path d="M336.5 34 A4 4 0 0 1 336.5 42Z" fill="#4a98d4"/>
<path d="M353 33 L368 30 L372 35 L372 44 L360 48 L352 45Z" fill="#dcd4ec" stroke="#b8b0cc" stroke-width=".6"/>
<path d="M355 33 L362 28 L365 31 L358 35Z" fill="#f0d84a"/>
<path d="M358 35 L368 32 L371 36 L361 39Z" fill="#44a8e0"/>
<path d="M362 43 L370 41 L371.5 46 L364 47.5Z" fill="#f2c82a"/>
<path d="M385 29 L401 27.5 L401 39 L408 46 L394 49 L388 41Z" fill="#faeacc" stroke="#d8a878" stroke-width="1"/>
<circle cx="391.5" cy="34" r="3.2" fill="#8c2030"/><path d="M391.5 32 V36 M389.5 34 H393.5" stroke="#fff" stroke-width="1.5"/>
<path d="M396 32.5 H400 M396 35 H400 M391 40 L402 39 M392 42.5 L404 41.5 M393 45 L405 44" stroke="#d8a878" stroke-width=".6" opacity=".7"/>
<path d="M414 29 L430 27.5 L430 39 L437 46 L423 49 L417 41Z" fill="#92e496" stroke="#40a448" stroke-width="1"/>
<circle cx="420.5" cy="34" r="3.2" fill="#1a3a1c"/><path d="M420.5 32 V36 M418.5 34 H422.5" stroke="#fff" stroke-width="1.5"/>
<path d="M425 32.5 H429 M425 35 H429 M420 40 L431 39 M421 42.5 L433 41.5 M422 45 L434 44" stroke="#40a448" stroke-width=".6" opacity=".7"/>
<path d="M444 29 L460 27.5 L460 39 L467 46 L453 49 L447 41Z" fill="#f27c8c" stroke="#b42434" stroke-width="1"/>
<circle cx="450.5" cy="34" r="3.2" fill="#2a0a10"/><path d="M450.5 32 V36 M448.5 34 H452.5" stroke="#fff" stroke-width="1.5"/>
<path d="M455 32.5 H459 M455 35 H459 M450 40 L461 39 M451 42.5 L463 41.5 M452 45 L464 44" stroke="#b42434" stroke-width=".6" opacity=".7"/>
<path d="M477.5 28 V48 H499.5" fill="none" stroke="#a0a0a8" stroke-width=".8"/>
<circle cx="483.5" cy="33.5" r="3.6" fill="#54a4e4"/><path d="M484 30 A3.6 3.6 0 0 1 487 32 L484 33Z" fill="#f0d458"/>
<path d="M490 30h8M490 32h8" stroke="#b0b0b0" stroke-width=".7"/>
<rect x="480" y="42" width="2.8" height="5.5" fill="#d83444"/><rect x="485" y="39" width="2.8" height="8.5" fill="#3e92e4"/><rect x="490" y="36" width="2.8" height="11.5" fill="#f2a632"/><rect x="495" y="33" width="2.8" height="14.5" fill="#34b454"/>
<path d="M513 33 L521 31.5 L523 46 L515 47.5Z" fill="#2e9a34"/>
<circle cx="527" cy="38.5" r="7.5" fill="#e42424"/><path d="M527 38.5 L527 31 A7.5 7.5 0 0 1 534.3 36.5Z" fill="#f0e424"/><path d="M527 38.5 L534.3 36.5 A7.5 7.5 0 0 1 533.5 42.3Z" fill="#2434b4"/><path d="M527 38.5 L519.5 38.5 A7.5 7.5 0 0 1 527 31Z" fill="#34a434"/>
<text x="508.5" y="47" font-size="22" font-weight="bold" fill="#b4b4b4" stroke="#7a7a7a" stroke-width=".6" font-family="Liberation Sans">$</text>
<path d="M540 47 L542 35 L552 37 L562 35 L564 47 L552 46Z" fill="#faf2cc" stroke="#8a7040" stroke-width=".8"/>
<text x="546" y="44" text-anchor="middle" font-size="9" font-weight="bold" fill="#34a054" font-family="Liberation Sans">$</text>
<path d="M545 31 L551 27 L563 32 L557 38Z" fill="#20207c"/><path d="M557 38 L563 32 L563.5 33.5 L557.5 39.5Z" fill="#d8d8d8"/>
<path d="M560 37 L554 49" stroke="#e8c424" stroke-width="1.8"/>
<circle cx="581.3" cy="37.8" r="10" fill="#d8d8d8" stroke="#8a8a8a" stroke-width=".8"/><circle cx="581.3" cy="37.8" r="8.3" fill="#34c424"/><ellipse cx="581.3" cy="34" rx="6" ry="3.5" fill="#7ae060" opacity=".6"/>
<text x="581.3" y="42.6" text-anchor="middle" font-size="13" font-weight="bold" fill="#f0fff0" font-family="Liberation Sans">$</text>
<circle cx="610.8" cy="37.8" r="10" fill="#dcdcdc" stroke="#8a8a8a" stroke-width=".8"/><circle cx="610.8" cy="37.8" r="8.3" fill="#d41a44"/><ellipse cx="610.8" cy="34" rx="6" ry="3.5" fill="#f06080" opacity=".5"/>
<text x="610.8" y="42.6" text-anchor="middle" font-size="13" font-weight="bold" fill="#fff0f4" font-family="Liberation Sans">$</text>
<path d="M629 40 L642 28.5 L652 34 L640 48Z" fill="#f8f8f8" stroke="#808080" stroke-width=".7"/>
<path d="M631 38 L637 33 L640 37 L634 42Z" fill="#e6e040"/><path d="M642 35 L649 36 M640 39 L647 40" stroke="#a0a0a0" stroke-width=".6"/>
<path d="M664 49 Q664 41 671 41 L677 41 Q685 41 685 49Z" fill="#e03444"/>
<path d="M671 41 L674 45 L677 41" fill="none" stroke="#fff" stroke-width=".8"/>
<ellipse cx="674" cy="34" rx="8.5" ry="6.5" fill="#d87878"/><ellipse cx="675.5" cy="36" rx="5" ry="5" fill="#f2b432"/>
<ellipse cx="667.5" cy="36" rx="2.8" ry="3.2" fill="#5a64c4"/><path d="M667 39 L663 41" stroke="#8a5a3a" stroke-width="1"/>
<path d="M704 31 L716 30 L720.5 31 L720.5 51 L716 52 L704 51Z" fill="#d89434"/><path d="M716 30 L720.5 31 L720.5 51 L716 52Z" fill="#b8741c"/>
<rect x="707.5" y="33" width="8" height="4.5" fill="#f4e8e0"/><text x="708" y="36.8" font-size="3.8" font-weight="bold" fill="#c02040" font-family="Liberation Sans">EXIT</text>
<circle cx="710.5" cy="42" r="1.2" fill="#f0c050"/>
<path d="M697 32 Q699 37 704 36 L703.5 34 L707 37.5 L703 40 L703.5 38.5 Q698 38.5 697 32Z" fill="#44c040"/>
<path d="M697 48 Q699 42.5 704 43 L703.5 41 L707.5 44.5 L703.5 47.5 L703.5 45.5 Q699 45.5 697 48Z" fill="#44c040"/>
</svg>
<div class="sep" style="left:125.0px"></div><div class="sep" style="left:158.9px"></div><div class="sep" style="left:193.0px"></div><div class="sep" style="left:256.5px"></div><div class="sep" style="left:379.0px"></div><div class="sep" style="left:470.8px"></div><div class="sep" style="left:504.8px"></div><div class="sep" style="left:656.6px"></div><div class="sep" style="left:690.9px"></div>
<div class="t lb" style="left:-8.8px;width:60px;text-align:center;transform-origin:50% 0">Paciente</div><div class="t lb" style="left:19.8px;width:60px;text-align:center;transform-origin:50% 0">Aniver</div><div class="t lb" style="left:49.3px;width:60px;text-align:center;transform-origin:50% 0">Funciona</div><div class="t lb" style="left:79.0px;width:60px;text-align:center;transform-origin:50% 0">Dentista</div><div class="t lb" style="left:112.8px;width:60px;text-align:center;transform-origin:50% 0">Agenda</div><div class="t lb" style="left:146.9px;width:60px;text-align:center;transform-origin:50% 0">WhatsApp</div><div class="t lb" style="left:180.3px;width:60px;text-align:center;transform-origin:50% 0">Tabela</div><div class="t lb" style="left:209.9px;width:60px;text-align:center;transform-origin:50% 0">Produtos</div><div class="t lb" style="left:243.9px;width:60px;text-align:center;transform-origin:50% 0">Boletim</div><div class="t lb" style="left:273.1px;width:60px;text-align:center;transform-origin:50% 0">Procurar</div><div class="t lb" style="left:302.7px;width:60px;text-align:center;transform-origin:50% 0">Pesquisar</div><div class="t lb" style="left:332.4px;width:60px;text-align:center;transform-origin:50% 0">Relatório</div><div class="t lb" style="left:365.9px;width:60px;text-align:center;transform-origin:50% 0">Atestado</div><div class="t lb" style="left:395.3px;width:60px;text-align:center;transform-origin:50% 0">Exame</div><div class="t lb" style="left:425.0px;width:60px;text-align:center;transform-origin:50% 0">Receita</div><div class="t lb" style="left:458.4px;width:60px;text-align:center;transform-origin:50% 0">Gráfico</div><div class="t lb" style="left:492.2px;width:60px;text-align:center;transform-origin:50% 0">Finanças</div><div class="t lb" style="left:521.5px;width:60px;text-align:center;transform-origin:50% 0">Caixa</div><div class="t lb" style="left:551.3px;width:60px;text-align:center;transform-origin:50% 0">Receber</div><div class="t lb" style="left:580.8px;width:60px;text-align:center;transform-origin:50% 0">A Pagar</div><div class="t lb" style="left:610.0px;width:60px;text-align:center;transform-origin:50% 0">Recibo</div><div class="t lb" style="left:644.3px;width:60px;text-align:center;transform-origin:50% 0">Suporte</div>


<!-- dialog -->
<div id="dlg" class="a"></div>
<div id="dlgt" class="a" style="left:237px;top:75px;width:326px;height:12px"></div>
<div class="t" style="left:240px;top:77.6px;font-size:7.6px;color:#22303f;transform:scaleX(.8);-webkit-text-stroke:.12px #22303f">CONFIGURAR ATENDIMENTO</div>
<!-- main group box -->
<div class="a" style="left:243px;top:93px;width:312px;height:327px;border:1px solid #b4b4b4;box-shadow:inset 1px 1px 0 #fff,1px 1px 0 #fff"></div>
<!-- image panel -->
<div class="a" style="left:252px;top:98px;width:186px;height:144px;background:#fff;border-top:1px solid #9c9c9c;border-left:1px solid #9c9c9c;border-right:1px solid #f4f4f4;border-bottom:1px solid #f4f4f4;box-shadow:inset 1px 1px 0 #c4c4c4"></div>
<svg class="a" style="left:280px;top:100px" width="130" height="142" viewBox="0 0 130 142">
 <defs>
  <clipPath id="tc"><path d="M5.0 42.0 C5.2 38.3,4.2 26.0,6.0 20.0 C7.8 14.0,12.0 8.8,16.0 6.0 C20.0 3.2,24.7 3.7,30.0 3.5 C35.3 3.3,42.3 4.1,48.0 5.0 C53.7 5.9,58.3 9.0,64.0 9.0 C69.7 9.0,75.3 5.8,82.0 5.0 C88.7 4.2,97.8 3.2,104.0 4.0 C110.2 4.8,115.6 5.7,119.0 10.0 C122.4 14.3,124.2 23.7,124.5 30.0 C124.8 36.3,122.8 42.7,121.0 48.0 C119.2 53.3,115.5 55.8,113.5 62.0 C111.5 68.2,110.2 76.7,109.0 85.0 C107.8 93.3,107.3 104.2,106.0 112.0 C104.7 119.8,103.0 127.6,101.0 132.0 C99.0 136.4,96.5 138.3,94.0 138.5 C91.5 138.7,89.0 136.8,86.0 133.0 C83.0 129.2,79.6 121.0,76.0 116.0 C72.4 111.0,67.8 104.0,64.5 103.0 C61.2 102.0,58.8 106.2,56.0 110.0 C53.2 113.8,50.5 121.2,48.0 126.0 C45.5 130.8,43.3 137.0,41.0 139.0 C38.7 141.0,36.2 140.5,34.0 138.0 C31.8 135.5,29.7 130.3,28.0 124.0 C26.3 117.7,25.5 107.3,24.0 100.0 C22.5 92.7,21.3 87.0,19.0 80.0 C16.7 73.0,12.3 64.3,10.0 58.0 C7.7 51.7,5.8 44.7,5.0 42.0Z"/></clipPath>
  <linearGradient id="gtop" x1="0" x2="1" y1="0" y2="0"><stop offset="0" stop-color="#cdd92a"/><stop offset=".45" stop-color="#a8cc36"/><stop offset="1" stop-color="#6cba40"/></linearGradient>
  <linearGradient id="gblue" x1="0" x2="1" y1="0" y2="1"><stop offset="0" stop-color="#2c8fd6"/><stop offset="1" stop-color="#2348ad"/></linearGradient>
  <linearGradient id="gor" x1="0" x2="0" y1="0" y2="1"><stop offset="0" stop-color="#f59226"/><stop offset="1" stop-color="#ec5e22"/></linearGradient>
  <linearGradient id="gyel" gradientUnits="userSpaceOnUse" x1="20" y1="40" x2="100" y2="135"><stop offset="0" stop-color="#fad41a"/><stop offset=".5" stop-color="#f59022"/><stop offset=".85" stop-color="#ee4a24"/><stop offset="1" stop-color="#e41e2a"/></linearGradient>
 </defs>
 <g clip-path="url(#tc)">
  <rect x="0" y="0" width="130" height="142" fill="url(#gor)"/>
  <path d="M-10.0 64.0 C-6.3 61.8,6.6 53.8,12.0 50.5 C17.4 47.2,18.8 44.2,22.5 44.5 C26.2 44.8,31.1 49.2,34.0 52.0 C36.9 54.8,36.9 56.4,40.0 61.0 C43.1 65.6,48.8 72.6,52.8 79.7 C56.8 86.8,61.1 95.9,64.3 103.4 C67.5 111.0,69.4 115.6,72.0 125.0 C74.6 134.4,78.7 154.2,80.0 160.0 L140 170 L140 -20 L-20 -20Z" fill="url(#gyel)"/>
  <path d="M-10.0 62.0 C-6.6 59.8,5.1 52.8,10.5 49.0 C15.9 45.2,17.6 39.5,22.5 39.0 C27.4 38.5,35.2 42.5,40.0 46.0 C44.8 49.5,46.7 54.2,51.0 60.0 C55.3 65.8,60.8 74.5,66.0 81.0 C71.2 87.5,76.3 93.2,82.0 99.0 C87.7 104.8,92.0 111.9,100.0 115.7 C108.0 119.5,125.0 121.0,130.0 122.0 L140 170 L140 -20 L-20 -20Z" fill="#c4481c"/>
  <path d="M-10.0 60.0 C-6.8 57.8,3.8 51.3,9.0 47.0 C14.2 42.7,15.8 35.2,21.0 34.0 C26.2 32.8,34.3 35.3,40.0 39.6 C45.7 43.9,50.2 53.6,55.0 60.0 C59.8 66.4,63.9 72.0,69.0 78.0 C74.1 84.0,80.1 90.2,85.6 96.0 C91.1 101.8,94.6 108.8,102.0 112.5 C109.4 116.2,125.3 117.1,130.0 118.0 L140 170 L140 -20 L-20 -20Z" fill="url(#gblue)"/>
  <path d="M-10.0 55.0 C-7.1 52.5,2.3 44.5,7.5 40.0 C12.7 35.5,15.6 29.2,21.0 28.0 C26.4 26.8,33.3 27.7,40.0 33.0 C46.7 38.3,54.8 53.8,61.0 60.0 C67.2 66.2,71.5 66.5,77.0 70.0 C82.5 73.5,88.7 77.8,94.0 81.0 C99.3 84.2,103.0 87.3,109.0 89.5 C115.0 91.7,126.5 93.2,130.0 94.0 L140 170 L140 -20 L-20 -20Z" fill="#3bb0e6"/>
  <path d="M-10.0 53.0 C-7.2 50.3,1.8 42.2,6.5 37.0 C11.2 31.8,13.1 24.0,18.0 22.0 C22.9 20.0,29.7 22.3,36.0 25.0 C42.3 27.7,49.7 34.2,56.0 38.0 C62.3 41.8,68.5 44.3,74.0 48.0 C79.5 51.7,84.8 57.2,89.0 60.0 C93.2 62.8,95.2 63.3,99.0 65.0 C102.8 66.7,106.8 68.2,112.0 70.0 C117.2 71.8,127.0 75.0,130.0 76.0 L140 170 L140 -20 L-20 -20Z" fill="#1a5e9c"/>
  <path d="M-10.0 50.0 C-7.3 47.3,1.3 39.2,6.0 34.0 C10.7 28.8,13.0 21.0,18.0 19.0 C23.0 17.0,31.0 20.5,36.0 22.0 C41.0 23.5,43.8 25.5,48.0 28.0 C52.2 30.5,55.7 33.2,61.0 37.0 C66.3 40.8,74.7 47.5,80.0 51.0 C85.3 54.5,88.2 55.2,93.0 58.0 C97.8 60.8,102.8 65.3,109.0 68.0 C115.2 70.7,126.5 73.0,130.0 74.0 L140 170 L140 -20 L-20 -20Z" fill="#4fae45"/>
  <path d="M-10.0 45.0 C-7.3 42.2,1.3 33.3,6.0 28.0 C10.7 22.7,12.5 15.7,18.0 13.0 C23.5 10.3,32.7 10.3,39.0 12.0 C45.3 13.7,50.5 19.7,56.0 23.0 C61.5 26.3,66.7 29.2,72.0 32.0 C77.3 34.8,81.3 36.2,88.0 40.0 C94.7 43.8,105.0 51.3,112.0 55.0 C119.0 58.7,127.0 60.8,130.0 62.0 L140 170 L140 -20 L-20 -20Z" fill="url(#gtop)"/>
 </g>
 <path d="M101.5 21 Q102.5 32 116 33 Q102.5 34 101.5 46 Q100.5 34 86.5 33.5 Q100.5 32 101.5 21Z" fill="#fff"/>
 <path d="M112.5 10.5 Q113 17.5 119.5 18 Q113 18.5 112.5 24.5 Q112 18.5 106 18 Q112 17.5 112.5 10.5Z" fill="#fff"/>
</svg>
<div class="t d" style="left:252px;top:246px">Endereço Padrão do Logo</div>
<div class="fld" style="left:251px;top:255px;width:166px;height:12px"></div>
<div class="t d" style="left:254px;top:258px">.\BITMAP\logodenta5.jpg</div>
<div class="a" style="left:420px;top:248px;width:18px;height:19px;border:1px solid #a0a0a0;border-radius:2px;background:linear-gradient(#f8f8f8,#dcdcdc)"></div>
<svg class="a" style="left:422px;top:250px" width="14" height="15"><line x1="6.3" y1="8.8" x2="3.2" y2="12" stroke="#6a5030" stroke-width="1.4" stroke-linecap="round"/><circle cx="8.8" cy="6.2" r="3.2" fill="#d8f2fc" stroke="#5aa4d4" stroke-width="1"/></svg>

<!-- left radios -->
<div class="rad" style="left:249px;top:270px"></div><div class="t d" style="left:259px;top:271px">Mostrar na Impressão do Cabeçalho o CELULAR</div>
<div class="rad on" style="left:394px;top:270px"></div><div class="t d" style="left:404px;top:271px">Mostrar CNPJ</div>
<div class="rad on" style="left:249px;top:281px"></div><div class="t d" style="left:259px;top:282px">Habilitar para Pesquisar Atendimento com Filtro de Paciantes</div>
<div class="rad" style="left:249px;top:292px"></div><div class="t d" style="left:259px;top:293px">Abrir Menu Atendimento na Abertura do Programa</div>
<div class="rad on" style="left:249px;top:302px"></div><div class="t d" style="left:259px;top:303px">Abrir Menu Financeiro na Finalização</div>
<div class="rad on" style="left:249px;top:313px"></div><div class="t d" style="left:259px;top:314px">Abrir Menu de Impressão na Finalização</div>
<div class="rad on" style="left:382px;top:313px"></div><div class="t d" style="left:392px;top:314px">Pesquisa Tabela</div>
<div class="rad on" style="left:249px;top:324px"></div><div class="t d" style="left:259px;top:325px">Abrir Pesquisa do Item Automaticamente</div>
<div class="rad" style="left:382px;top:324px"></div><div class="t d" style="left:392px;top:325px">Pesquisa Produto</div>

<div class="chk" style="left:250px;top:337px"></div><div class="t d" style="left:259px;top:338px">Tela da Identificação</div>
<div class="chk" style="left:341px;top:337px"></div><svg class="a" style="left:341px;top:337px" width="7" height="7"><path d="M1.5 3.5 L3 5.3 L5.8 1.5" fill="none" stroke="#1a2a40" stroke-width="1.1"/></svg><div class="t d" style="left:350px;top:338px">Tela Relacionar Valores Consulta</div>

<div class="chk" style="left:250px;top:350px"></div><div class="rad on" style="left:261px;top:350px"></div><div class="fld" style="left:273px;top:348px;width:167px;height:12px"></div><div class="t d" style="left:276px;top:351px">Informações da Consulta</div>
<div class="chk" style="left:250px;top:362px"></div><div class="rad on" style="left:261px;top:362px"></div><div class="fld" style="left:273px;top:361px;width:167px;height:12px"></div><div class="t d" style="left:276px;top:363px">Descreva Exame</div>
<div class="chk" style="left:250px;top:375px"></div><div class="rad on" style="left:261px;top:375px"></div><div class="fld" style="left:273px;top:373px;width:167px;height:12px"></div><div class="t d" style="left:276px;top:376px">Descreva Receita</div>
<div class="chk" style="left:250px;top:387px"></div><div class="rad" style="left:261px;top:387px"></div><div class="fld" style="left:273px;top:386px;width:167px;height:12px"></div><div class="t d" style="left:276px;top:388px">Observações Gerais</div>

<div class="fld yel" style="left:250px;top:401px;width:299px;height:13px;border-color:#e8e8e8"></div>
<div class="t d" style="left:253px;top:404px">ao persistir os sintomas o médico deverá ser consultado</div>

<!-- right panels -->
<div class="a" style="left:447px;top:98px;width:102px;height:31px;border:1px solid #e4e4e4"></div>
<div class="t d" style="left:452px;top:99px">Numeração do Atendimento</div>
<div class="t d" style="left:453px;top:113px">Nº ATUAL</div>
<div class="fld yel" style="left:488px;top:109px;width:55px;height:12px;border:none"></div>
<div class="t" style="left:520.5px;top:111px;font-size:9px;font-weight:bold;color:#111;transform:scaleX(1.3);-webkit-text-stroke:.3px #111">188</div>

<div class="a" style="left:447px;top:131px;width:102px;height:58px;border:1px solid #e4e4e4"></div>
<div class="t d" style="left:452px;top:133px">Configurar LOGO</div>
<div class="t d" style="left:452px;top:147px">Nº da Linha INICIAL</div>
<div class="fld" style="left:517px;top:141px;width:27px;height:13px;background:#e4f8e8"></div><div class="t d" style="left:529px;top:144px">0.90</div>
<div class="t d" style="left:452px;top:161px">Posição LINHA</div>
<div class="fld" style="left:517px;top:157px;width:27px;height:12px"></div><div class="t d" style="left:535px;top:159px">70</div>
<div class="t d" style="left:452px;top:176px">Posição COLUNA</div>
<div class="fld" style="left:517px;top:172px;width:27px;height:12px"></div><div class="t d" style="left:535px;top:174px">80</div>

<div class="fld yel" style="left:447px;top:197px;width:101px;height:11px;border:none"></div><div class="t d" style="left:449px;top:200px;-webkit-text-stroke:.12px #1a1a1a">BOLETIM DE ATENDIMENTO</div>
<div class="fld yel" style="left:447px;top:211px;width:101px;height:12px;border:none"></div><div class="t d" style="left:449px;top:214px;-webkit-text-stroke:.12px #1a1a1a">PROPOSTA</div>

<div class="rad on" style="left:448px;top:229px"></div><div class="t d" style="left:460px;top:230px">1 Via Padrão</div>
<div class="rad" style="left:498px;top:229px"></div><div class="t d" style="left:509px;top:230px">2 Vias Padrão</div>
<div class="t d" style="left:449px;top:245px">Campo Padrão</div>
<div class="fld" style="left:492px;top:243px;width:55px;height:10px;border-color:#e4e4e4"></div><div class="t" style="left:494px;top:245px;font-size:6px;color:#222;transform:scaleX(.85)">OUTROS VALORES</div>
<div class="t d" style="left:449px;top:260px">Campo Padrão</div>
<div class="fld" style="left:492px;top:258px;width:55px;height:10px;border-color:#e4e4e4"></div><div class="t" style="left:494px;top:260px;font-size:6px;color:#222;transform:scaleX(.85)">VALOR CONSULTA</div>
<div class="t d" style="left:449px;top:275px">Campo Quantidade</div>
<div class="fld" style="left:506px;top:273px;width:41px;height:11px;border-color:#e4e4e4"></div><div class="t d" style="left:524px;top:275px">999.999</div>

<div class="rad" style="left:446px;top:289px"></div><div class="t d" style="left:456px;top:290px">Liberar Nº do Atendimento</div>
<div class="rad on" style="left:446px;top:301px"></div><div class="t d" style="left:456px;top:302px">Impressão Prévia Tela</div>
<div class="rad on" style="left:446px;top:312px"></div><div class="t d" style="left:456px;top:313px">Marcar para Imprimir Valores</div>
<div class="rad" style="left:446px;top:324px"></div><div class="t d" style="left:456px;top:325px">Mostrar Hora na Impressão</div>

<div class="a" style="left:448px;top:336px;width:101px;height:62px;border:1px solid #a8a8a8;box-shadow:inset 1px 1px 0 #fff"></div>
<div class="a" style="left:454px;top:342px;width:87px;height:22px;border:1px solid #a8a8a8;border-radius:2px;background:linear-gradient(#f6f6f6 0,#eaeaea 50%,#d8d8d8 100%)"></div>
<svg class="a" style="left:457px;top:347px" width="16" height="13"><path d="M1 6.5 L3 5.5 L6 8.5 L15 1 L15.5 2 L6 12Z" fill="#2cae34" stroke="#1a8a22" stroke-width=".5"/></svg>
<div class="t d" style="left:475px;top:350px">Salvar Configuração</div>
<div class="a" style="left:454px;top:368px;width:87px;height:22px;border:1px solid #a8a8a8;border-radius:2px;background:linear-gradient(#f6f6f6 0,#eaeaea 50%,#d8d8d8 100%)"></div>
<svg class="a" style="left:457px;top:372px" width="14" height="14"><circle cx="7" cy="7" r="6" fill="#3a78d0"/><circle cx="7" cy="7" r="4.5" fill="#5a98e8"/><path d="M3.5 7 H10 M7 4 L10 7 L7 10" fill="none" stroke="#fff" stroke-width="1.6"/></svg>
<div class="t d" style="left:483px;top:376px">Sair Cadastro</div>


<!-- status bar -->
<div id="stat" class="a"></div>
<div class="a" style="left:0;top:498px;width:800px;height:2px;background:linear-gradient(90deg,#c8d4e2 0,#c8d4e2 42px,#8a96a4 42px,#8a96a4 43px,#dfe8f2 43px,#dfe8f2 75px,#8a96a4 75px,#8a96a4 76px,#dfe8f2 76px,#dfe8f2 105px,#8a96a4 105px,#8a96a4 106px,#dfe8f2 106px,#dfe8f2 143px,#8a96a4 143px,#8a96a4 144px,#dfe8f2 144px,#dfe8f2 178px,#8a96a4 178px,#8a96a4 179px,#c8d4e2 179px)"></div>
<div class="t st" style="left:3px">PORTO ALEGRE - RS  9 de Agosto de 2025 - S bado</div>
<div class="ss" style="left:380px"></div><div class="t st" style="left:384px">Num</div>
<div class="ss" style="left:401px"></div><div class="t st" style="left:405px">Caps</div>
<div class="ss" style="left:423px"></div><div class="t st" style="left:428px;color:#a8b0bc">Ins</div>
<div class="ss" style="left:440px"></div><div class="t st" style="left:445px">10/08/2025</div>
<div class="ss" style="left:481px"></div><div class="t st" style="left:486px">08:06:43</div>
<div class="ss" style="left:512px"></div>
<svg class="a" style="left:514px;top:488px" width="12" height="11"><circle cx="4" cy="4" r="3" fill="#f0c840" stroke="#a08020" stroke-width=".7"/><circle cx="7.5" cy="6" r="3" fill="#f6d860" stroke="#a08020" stroke-width=".7"/><rect x="3" y="7" width="2" height="3.5" fill="#c8a030"/></svg>
<div class="t st" style="left:540px;color:#d0204a">MASTER</div>
<div class="ss" style="left:592px"></div>
<svg class="a" style="left:595px;top:488px" width="12" height="11"><path d="M2 2 L9 1 L10 6 L3 7Z" fill="#8cc8e8" stroke="#5a8aa8" stroke-width=".6"/><path d="M1 8 L10 7 L11 9 L2 10Z" fill="#c8d8e0"/></svg>
<div class="t st" style="left:614px">Versão ODONTO 2.0</div>
<div class="ss" style="left:692px"></div>
<svg class="a" style="left:694px;top:488px" width="12" height="11"><circle cx="6" cy="5.5" r="4.8" fill="#3a9ad0"/><path d="M2 4 Q5 2 6 5 Q8 8 10 6 L10 8 Q6 10 2 8Z" fill="#50b050"/><rect x="4" y="6" width="6" height="4" fill="#f4f4f4" stroke="#888" stroke-width=".5"/></svg>
<div class="ss" style="left:708px"></div>
<svg class="a" style="left:710px;top:488px" width="12" height="11"><path d="M2 5 L7 2 L11 5 L6 9Z" fill="#d8d8d8" stroke="#909090" stroke-width=".6"/><rect x="4" y="1" width="4" height="3" fill="#fff" stroke="#999" stroke-width=".4"/></svg>
<div class="ss" style="left:722px"></div>
<svg class="a" style="left:725px;top:488px" width="11" height="11"><rect x="1" y="1" width="9" height="5" fill="#d0d8e0" stroke="#505860" stroke-width=".8"/><path d="M5.5 6 V9 M1 9.5 H10" stroke="#404040" stroke-width="1"/></svg>
<div class="ss" style="left:738px"></div>
<div class="t st" style="left:744px;color:#d0204a">FpqSystem</div>
<div class="ss" style="left:779px"></div>
<svg class="a" style="left:781px;top:488px" width="12" height="11"><circle cx="4" cy="4" r="3" fill="#f0c840" stroke="#a08020" stroke-width=".7"/><circle cx="7.5" cy="6" r="3" fill="#f6d860" stroke="#a08020" stroke-width=".7"/><rect x="3" y="7" width="2" height="3.5" fill="#c8a030"/></svg>

</body></html>
